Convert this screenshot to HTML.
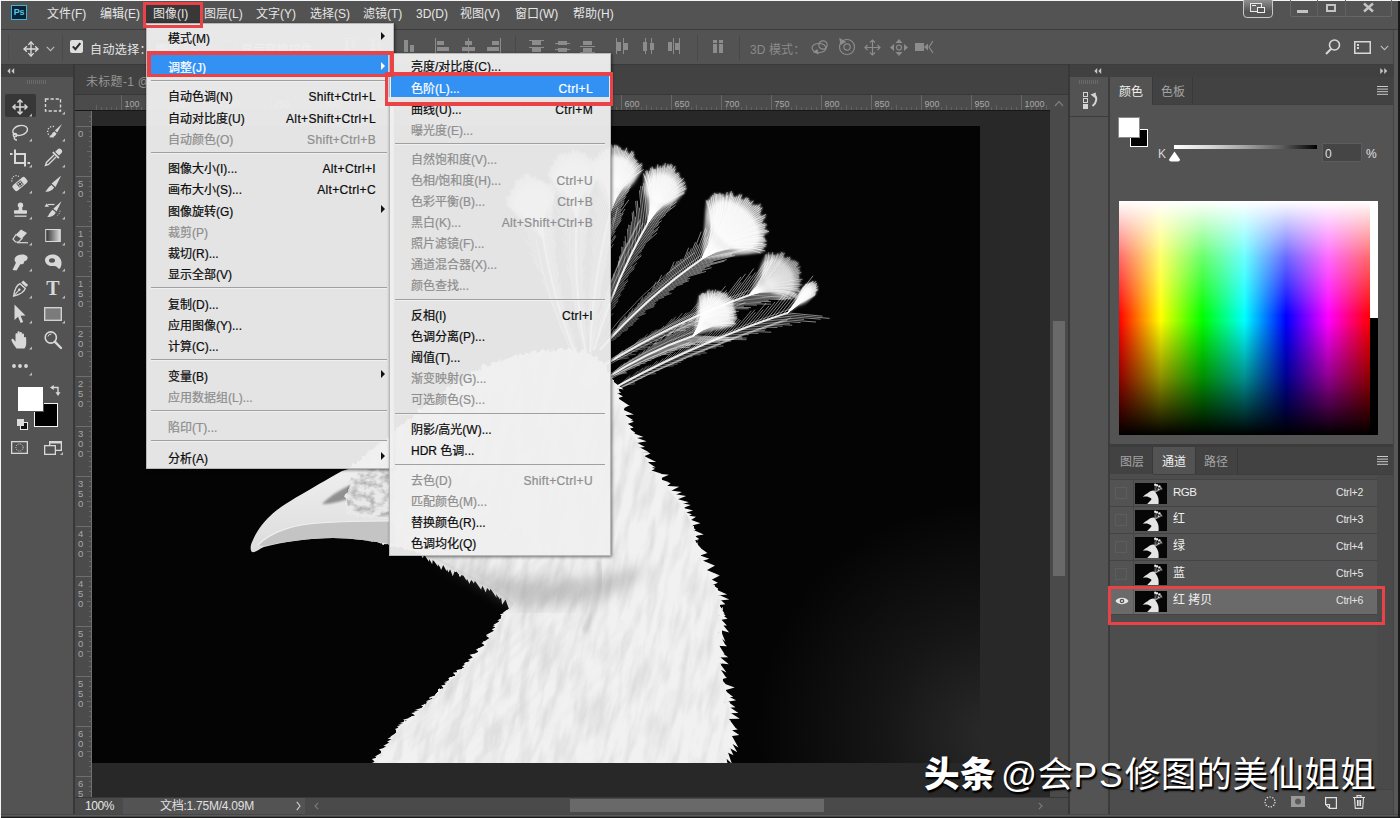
<!DOCTYPE html>
<html lang="zh-CN"><head><meta charset="utf-8"><title>Photoshop</title>
<style>
*{box-sizing:border-box;margin:0;padding:0}
html,body{width:1400px;height:818px;overflow:hidden;background:#535353}
body{position:relative;font-family:"Liberation Sans","Noto Sans CJK SC",sans-serif;font-size:12px;color:#e2e2e2;line-height:1}
.a{position:absolute}
.t{position:absolute;white-space:nowrap;line-height:16px;height:16px}
svg{position:absolute;overflow:visible}
.mi{position:absolute;left:0;right:0;height:21px;line-height:21px;color:#0c0c0c;white-space:nowrap;-webkit-text-stroke:0.22px currentColor}
.mi span.l{position:absolute;left:22px}
.mi span.r{position:absolute;right:14px;letter-spacing:0.35px}
.mi.d{color:#8e8e8e}
.mi.h{color:#fff}
.sep{position:absolute;height:1px;background:#a0a0a0;box-shadow:0 1px 0 #f0f0f0}
.menu{position:absolute;background:rgba(239,239,239,.953);box-shadow:1px 1px 3px rgba(0,0,0,.55);border:1px solid #b8b8b8}
.arr{position:absolute;width:0;height:0;border-left:4px solid #111;border-top:4px solid transparent;border-bottom:4px solid transparent}
.redbox{position:absolute;border:3px solid #e94247;}
</style></head>
<body>
<div class="a" style="left:0px;top:0px;width:1400px;height:1px;background:#f4f4f4;"></div>
<div class="a" style="left:0px;top:0px;width:1px;height:818px;background:#f4f4f4;"></div>
<div class="a" style="left:1px;top:1px;width:1399px;height:28px;background:#535353;"></div>
<div class="a" style="left:0px;top:29px;width:1400px;height:1px;background:#3c3c3c;"></div>
<div class="a" style="left:11px;top:5px;width:16px;height:15px;background:#0a2233;border:1px solid #3fb4d8;color:#53c8ea;font-size:9px;line-height:12px;text-align:center;font-weight:bold;letter-spacing:-0.3px">Ps</div>
<div class="a" style="left:146px;top:4px;width:55px;height:23px;background:#383838;"></div>
<div class="t" style="left:47px;top:6px;color:#e6e6e6;">文件(F)</div>
<div class="t" style="left:100px;top:6px;color:#e6e6e6;">编辑(E)</div>
<div class="t" style="left:153px;top:6px;color:#e6e6e6;">图像(I)</div>
<div class="t" style="left:204px;top:6px;color:#e6e6e6;">图层(L)</div>
<div class="t" style="left:256px;top:6px;color:#e6e6e6;">文字(Y)</div>
<div class="t" style="left:310px;top:6px;color:#e6e6e6;">选择(S)</div>
<div class="t" style="left:363px;top:6px;color:#e6e6e6;">滤镜(T)</div>
<div class="t" style="left:416px;top:6px;color:#e6e6e6;">3D(D)</div>
<div class="t" style="left:460px;top:6px;color:#e6e6e6;">视图(V)</div>
<div class="t" style="left:515px;top:6px;color:#e6e6e6;">窗口(W)</div>
<div class="t" style="left:573px;top:6px;color:#e6e6e6;">帮助(H)</div>
<div class="a" style="left:1243px;top:-3px;width:30px;height:21px;border:1px solid #c8c8c8;border-radius:4px;background:linear-gradient(#9a9a9a,#555 70%)"></div>
<svg style="left:1250px;top:3px" width="16" height="11" viewBox="0 0 16 11"><rect x="0.5" y="0.5" width="11" height="8" fill="#666" stroke="#e8e8e8"/><rect x="7.5" y="4.5" width="7" height="5" fill="#555" stroke="#f0f0f0"/><rect x="2" y="2" width="4" height="1" fill="#eee"/></svg>
<div class="a" style="left:1290px;top:-2px;width:102px;height:19px;border:1px solid #666;border-radius:2px"></div>
<div class="a" style="left:1317px;top:0px;width:1px;height:17px;background:#606060;"></div>
<div class="a" style="left:1345px;top:0px;width:1px;height:17px;background:#606060;"></div>
<div class="a" style="left:1297px;top:10px;width:11px;height:3px;background:#c4c4c4;"></div>
<div class="a" style="left:1326px;top:4px;width:10px;height:8px;border:2px solid #c4c4c4"></div>
<svg style="left:1363px;top:3px" width="11" height="9" viewBox="0 0 11 9"><path d="M1 0.5 L10 8.5 M10 0.5 L1 8.5" stroke="#c4c4c4" stroke-width="2.4" fill="none"/></svg>
<div class="a" style="left:1px;top:30px;width:1393px;height:34px;background:#535353;"></div>
<div class="a" style="left:0px;top:64px;width:1400px;height:1px;background:#3c3c3c;"></div>
<div class="a" style="left:8px;top:34px;width:1px;height:26px;background:#4c4c4c;"></div>
<svg style="left:23px;top:41px" width="16" height="16" viewBox="-8 -8 16 16"><g stroke="#dcdcdc" stroke-width="1.3" fill="none" stroke-linecap="square"><path d="M0 -6.5V6.5M-6.5 0H6.5"/><path d="M-2.3 -4.6L0 -7L2.3 -4.6M-2.3 4.6L0 7L2.3 4.6M-4.6 -2.3L-7 0L-4.6 2.3M4.6 -2.3L7 0L4.6 2.3"/></g></svg>
<svg style="left:46px;top:46px" width="9" height="6" viewBox="0 0 9 6"><path d="M0.8 0.8L4.5 4.6L8.2 0.8" stroke="#bdbdbd" stroke-width="1.1" fill="none"/></svg>
<div class="a" style="left:62px;top:35px;width:1px;height:26px;background:#4a4a4a;"></div>
<div class="a" style="left:70px;top:40px;width:13px;height:13px;background:#dedede;border-radius:2px"></div>
<svg style="left:71px;top:41px" width="11" height="11" viewBox="0 0 11 11"><path d="M1.8 5.4L4.4 8.2L9.3 2.2" stroke="#2a2a2a" stroke-width="2" fill="none"/></svg>
<div class="t" style="left:90px;top:41.5px;color:#e6e6e6;letter-spacing:0.4px">自动选择：</div>
<div class="a" style="left:150px;top:39px;width:56px;height:20px;background:#454545;border:1px solid #666;border-radius:2px"></div>
<div class="t" style="left:156px;top:41.5px;color:#e0e0e0;">图层</div>
<svg style="left:192px;top:47px" width="9" height="6" viewBox="0 0 9 6"><path d="M0.800 0.800L4.500 4.600L8.200 0.800" stroke="#bdbdbd" stroke-width="1.100" fill="none"/></svg>
<div class="a" style="left:222px;top:41px;width:13px;height:13px;background:#454545;border:1px solid #777;border-radius:2px"></div>
<div class="t" style="left:241px;top:41.5px;color:#e0e0e0;">显示变换控件</div>
<div class="a" style="left:330px;top:35px;width:1px;height:26px;background:#484848;"></div>
<svg style="left:342px;top:38px" width="16" height="16" viewBox="0 0 16 16"><rect x="0" y="0" width="16" height="1" fill="#8c8c8c"/><rect x="3" y="2" width="4" height="12" fill="#8c8c8c"/><rect x="9" y="2" width="4" height="7" fill="#8c8c8c"/></svg>
<svg style="left:368px;top:38px" width="16" height="16" viewBox="0 0 16 16"><rect x="0" y="7" width="16" height="1" fill="#8c8c8c"/><rect x="3" y="1" width="4" height="13" fill="#8c8c8c"/><rect x="9" y="4" width="4" height="8" fill="#8c8c8c"/></svg>
<svg style="left:401px;top:38px" width="16" height="16" viewBox="0 0 16 16"><rect x="3" y="2" width="4" height="12" fill="#8c8c8c"/><rect x="9" y="7" width="4" height="7" fill="#8c8c8c"/><rect x="0" y="15" width="16" height="1" fill="#8c8c8c"/></svg>
<svg style="left:435px;top:38px" width="16" height="16" viewBox="0 0 16 16"><rect x="0" y="0" width="1" height="16" fill="#8c8c8c"/><rect x="2" y="3" width="7" height="4" fill="#8c8c8c"/><rect x="2" y="9" width="12" height="4" fill="#8c8c8c"/></svg>
<svg style="left:461px;top:38px" width="16" height="16" viewBox="0 0 16 16"><rect x="7" y="0" width="1" height="16" fill="#8c8c8c"/><rect x="4" y="3" width="7" height="4" fill="#8c8c8c"/><rect x="1" y="9" width="13" height="4" fill="#8c8c8c"/></svg>
<svg style="left:485px;top:38px" width="16" height="16" viewBox="0 0 16 16"><rect x="15" y="0" width="1" height="16" fill="#8c8c8c"/><rect x="7" y="3" width="7" height="4" fill="#8c8c8c"/><rect x="2" y="9" width="12" height="4" fill="#8c8c8c"/></svg>
<div class="a" style="left:515px;top:35px;width:1px;height:26px;background:#484848;"></div>
<svg style="left:529px;top:40px" width="15" height="14" viewBox="0 0 15 14"><rect x="0" y="0" width="15" height="1" fill="#8c8c8c"/><rect x="3" y="1" width="9" height="4" fill="#8c8c8c"/><rect x="0" y="7" width="15" height="1" fill="#8c8c8c"/><rect x="3" y="8" width="9" height="4" fill="#8c8c8c"/></svg>
<svg style="left:555px;top:40px" width="15" height="14" viewBox="0 0 15 14"><rect x="0" y="3" width="15" height="1" fill="#8c8c8c"/><rect x="3" y="1" width="9" height="4" fill="#8c8c8c"/><rect x="0" y="9" width="15" height="1" fill="#8c8c8c"/><rect x="3" y="8" width="9" height="4" fill="#8c8c8c"/></svg>
<svg style="left:580px;top:40px" width="15" height="14" viewBox="0 0 15 14"><rect x="0" y="6" width="15" height="1" fill="#8c8c8c"/><rect x="3" y="1" width="9" height="4" fill="#8c8c8c"/><rect x="0" y="12" width="15" height="1" fill="#8c8c8c"/><rect x="3" y="8" width="9" height="4" fill="#8c8c8c"/></svg>
<svg style="left:616px;top:38px" width="14" height="16" viewBox="0 0 14 16"><rect x="0" y="0" width="1" height="16" fill="#8c8c8c"/><rect x="1" y="4" width="4" height="9" fill="#8c8c8c"/><rect x="7" y="0" width="1" height="16" fill="#8c8c8c"/><rect x="8" y="5" width="4" height="7" fill="#8c8c8c"/></svg>
<svg style="left:642px;top:38px" width="14" height="16" viewBox="0 0 14 16"><rect x="3" y="0" width="1" height="16" fill="#8c8c8c"/><rect x="1" y="4" width="4" height="9" fill="#8c8c8c"/><rect x="9" y="0" width="1" height="16" fill="#8c8c8c"/><rect x="8" y="5" width="4" height="7" fill="#8c8c8c"/></svg>
<svg style="left:667px;top:38px" width="14" height="16" viewBox="0 0 14 16"><rect x="6" y="0" width="1" height="16" fill="#8c8c8c"/><rect x="1" y="4" width="4" height="9" fill="#8c8c8c"/><rect x="12" y="0" width="1" height="16" fill="#8c8c8c"/><rect x="8" y="5" width="4" height="7" fill="#8c8c8c"/></svg>
<div class="a" style="left:697px;top:35px;width:1px;height:26px;background:#484848;"></div>
<svg style="left:712px;top:40px" width="13" height="14" viewBox="0 0 13 14"><rect x="1" y="0" width="4" height="3" fill="#8c8c8c"/><rect x="7" y="0" width="4" height="3" fill="#8c8c8c"/><rect x="1" y="4" width="4" height="9" fill="#8c8c8c"/><rect x="7" y="4" width="4" height="9" fill="#8c8c8c"/></svg>
<div class="a" style="left:739px;top:35px;width:1px;height:26px;background:#484848;"></div>
<div class="t" style="left:750px;top:41.5px;color:#8a8a8a;letter-spacing:0.1px">3D 模式：</div>
<svg style="left:811px;top:39px" width="20" height="16" viewBox="0 0 20 16"><g stroke="#8c8c8c" stroke-width="1.2" fill="none"><ellipse cx="8" cy="9" rx="7" ry="4.5"/><circle cx="12" cy="6" r="4.2"/><path d="M3 13l4 1.5-1-3.5z" fill="#8c8c8c"/></g></svg>
<svg style="left:838px;top:38px" width="18" height="18" viewBox="0 0 18 18"><g stroke="#8c8c8c" stroke-width="1.2" fill="none"><circle cx="9" cy="9" r="7.5"/><circle cx="9" cy="9" r="3.2"/><path d="M2 1l1 5 4-2z" fill="#8c8c8c"/></g></svg>
<svg style="left:864px;top:39px" width="17" height="17" viewBox="0 0 17 17"><g stroke="#8c8c8c" stroke-width="1.2" fill="none"><path d="M8.5 1V16M1 8.5H16"/><path d="M6 3.5L8.5 1L11 3.5M6 13.5L8.5 16L11 13.5M3.5 6L1 8.5L3.5 11M13.5 6L16 8.5L13.5 11"/></g></svg>
<svg style="left:890px;top:39px" width="18" height="17" viewBox="0 0 18 17"><g fill="#8c8c8c"><path d="M9 0l3.5 4h-7zM9 17l3.5-4h-7zM0 8.5l4-3.5v7zM18 8.5l-4-3.5v7z"/></g><circle cx="9" cy="8.500" r="2.500" fill="none" stroke="#8c8c8c" stroke-width="1.200"/></svg>
<svg style="left:915px;top:41px" width="20" height="13" viewBox="0 0 20 13"><rect x="0" y="2" width="9" height="8" fill="#8c8c8c"/><path d="M9 6l4-3.500v7z" fill="#8c8c8c"/><path d="M18 0l-4 6 4 6" stroke="#8c8c8c" stroke-width="1.2" fill="none"/></svg>
<svg style="left:1325px;top:39px" width="16" height="16" viewBox="0 0 16 16"><circle cx="9.5" cy="6" r="5" stroke="#d8d8d8" stroke-width="1.600" fill="none"/><path d="M6 10L1 15" stroke="#d8d8d8" stroke-width="2"/></svg>
<svg style="left:1354px;top:41px" width="17" height="13" viewBox="0 0 17 13"><rect x="0.750" y="0.750" width="15.500" height="11.500" stroke="#d8d8d8" stroke-width="1.500" fill="none"/><rect x="3" y="3" width="2" height="2" fill="#d8d8d8"/><rect x="3" y="6" width="2" height="2" fill="#d8d8d8"/></svg>
<svg style="left:1380px;top:45px" width="9" height="6" viewBox="0 0 9 6"><path d="M0.800 0.800L4.500 4.600L8.200 0.800" stroke="#bdbdbd" stroke-width="1.100" fill="none"/></svg>
<div class="a" style="left:1394px;top:30px;width:4px;height:788px;background:#585858;"></div>
<div class="a" style="left:1393px;top:30px;width:1px;height:788px;background:#444;"></div>
<div class="a" style="left:1px;top:65px;width:72px;height:12px;background:#404040;"></div>
<svg style="left:7px;top:68px" width="8" height="6" viewBox="0 0 8 6"><path d="M3.200 0L0.300 3L3.200 6zM7.200 0L4.300 3L7.200 6z" fill="#c8c8c8"/></svg>
<div class="a" style="left:1px;top:77px;width:72px;height:737px;background:#535353;"></div>
<div class="a" style="left:73px;top:64px;width:2px;height:754px;background:#383838;"></div>
<div class="a" style="left:27px;top:80px;width:1px;height:4px;background:#6a6a6a;"></div>
<div class="a" style="left:29px;top:80px;width:1px;height:4px;background:#6a6a6a;"></div>
<div class="a" style="left:31px;top:80px;width:1px;height:4px;background:#6a6a6a;"></div>
<div class="a" style="left:33px;top:80px;width:1px;height:4px;background:#6a6a6a;"></div>
<div class="a" style="left:35px;top:80px;width:1px;height:4px;background:#6a6a6a;"></div>
<div class="a" style="left:37px;top:80px;width:1px;height:4px;background:#6a6a6a;"></div>
<div class="a" style="left:39px;top:80px;width:1px;height:4px;background:#6a6a6a;"></div>
<div class="a" style="left:41px;top:80px;width:1px;height:4px;background:#6a6a6a;"></div>
<div class="a" style="left:43px;top:80px;width:1px;height:4px;background:#6a6a6a;"></div>
<div class="a" style="left:45px;top:80px;width:1px;height:4px;background:#6a6a6a;"></div>
<div class="a" style="left:75px;top:64px;width:993px;height:31px;background:#424242;"></div>
<div class="a" style="left:75px;top:64px;width:993px;height:1px;background:#3a3a3a;"></div>
<div class="t" style="left:86px;top:73.5px;color:#959595;letter-spacing:0.3px">未标题-1 @</div>
<div class="a" style="left:75px;top:94px;width:993px;height:1px;background:#383838;"></div>
<div class="a" style="left:75px;top:95px;width:975px;height:15px;background:#4b4b4b;"></div>
<div class="a" style="left:75px;top:95px;width:17px;height:702px;background:#4b4b4b;"></div>
<div class="a" style="left:75px;top:110px;width:975px;height:1px;background:#181818;"></div>
<div class="a" style="left:91px;top:111px;width:1px;height:686px;background:#707070;"></div>
<div class="a" style="left:92px;top:111px;width:958px;height:686px;background:#282828;"></div>
<svg style="left:0;top:0" width="1400" height="818" font-family="Liberation Sans, sans-serif"><rect x="121" y="95" width="1" height="15" fill="#686868"/><text x="124.5" y="107" font-size="9" fill="#a8a8a8">100</text><rect x="171" y="95" width="1" height="15" fill="#686868"/><text x="174.5" y="107" font-size="9" fill="#a8a8a8">150</text><rect x="221" y="95" width="1" height="15" fill="#686868"/><text x="224.5" y="107" font-size="9" fill="#a8a8a8">200</text><rect x="271" y="95" width="1" height="15" fill="#686868"/><text x="274.5" y="107" font-size="9" fill="#a8a8a8">250</text><rect x="321" y="95" width="1" height="15" fill="#686868"/><text x="324.5" y="107" font-size="9" fill="#a8a8a8">300</text><rect x="371" y="95" width="1" height="15" fill="#686868"/><text x="374.5" y="107" font-size="9" fill="#a8a8a8">350</text><rect x="421" y="95" width="1" height="15" fill="#686868"/><text x="424.5" y="107" font-size="9" fill="#a8a8a8">400</text><rect x="471" y="95" width="1" height="15" fill="#686868"/><text x="474.5" y="107" font-size="9" fill="#a8a8a8">450</text><rect x="521" y="95" width="1" height="15" fill="#686868"/><text x="524.5" y="107" font-size="9" fill="#a8a8a8">500</text><rect x="571" y="95" width="1" height="15" fill="#686868"/><text x="574.5" y="107" font-size="9" fill="#a8a8a8">550</text><rect x="621" y="95" width="1" height="15" fill="#686868"/><text x="624.5" y="107" font-size="9" fill="#a8a8a8">600</text><rect x="671" y="95" width="1" height="15" fill="#686868"/><text x="674.5" y="107" font-size="9" fill="#a8a8a8">650</text><rect x="721" y="95" width="1" height="15" fill="#686868"/><text x="724.5" y="107" font-size="9" fill="#a8a8a8">700</text><rect x="771" y="95" width="1" height="15" fill="#686868"/><text x="774.5" y="107" font-size="9" fill="#a8a8a8">750</text><rect x="821" y="95" width="1" height="15" fill="#686868"/><text x="824.5" y="107" font-size="9" fill="#a8a8a8">800</text><rect x="871" y="95" width="1" height="15" fill="#686868"/><text x="874.5" y="107" font-size="9" fill="#a8a8a8">850</text><rect x="921" y="95" width="1" height="15" fill="#686868"/><text x="924.5" y="107" font-size="9" fill="#a8a8a8">900</text><rect x="971" y="95" width="1" height="15" fill="#686868"/><text x="974.5" y="107" font-size="9" fill="#a8a8a8">950</text><rect x="1021" y="95" width="1" height="15" fill="#686868"/><text x="1024.5" y="107" font-size="9" fill="#a8a8a8">1000</text><rect x="96" y="105" width="1" height="5" fill="#626262"/><rect x="101" y="107" width="1" height="3" fill="#626262"/><rect x="106" y="107" width="1" height="3" fill="#626262"/><rect x="111" y="107" width="1" height="3" fill="#626262"/><rect x="116" y="107" width="1" height="3" fill="#626262"/><rect x="126" y="107" width="1" height="3" fill="#626262"/><rect x="131" y="107" width="1" height="3" fill="#626262"/><rect x="136" y="107" width="1" height="3" fill="#626262"/><rect x="141" y="107" width="1" height="3" fill="#626262"/><rect x="146" y="105" width="1" height="5" fill="#626262"/><rect x="151" y="107" width="1" height="3" fill="#626262"/><rect x="156" y="107" width="1" height="3" fill="#626262"/><rect x="161" y="107" width="1" height="3" fill="#626262"/><rect x="166" y="107" width="1" height="3" fill="#626262"/><rect x="176" y="107" width="1" height="3" fill="#626262"/><rect x="181" y="107" width="1" height="3" fill="#626262"/><rect x="186" y="107" width="1" height="3" fill="#626262"/><rect x="191" y="107" width="1" height="3" fill="#626262"/><rect x="196" y="105" width="1" height="5" fill="#626262"/><rect x="201" y="107" width="1" height="3" fill="#626262"/><rect x="206" y="107" width="1" height="3" fill="#626262"/><rect x="211" y="107" width="1" height="3" fill="#626262"/><rect x="216" y="107" width="1" height="3" fill="#626262"/><rect x="226" y="107" width="1" height="3" fill="#626262"/><rect x="231" y="107" width="1" height="3" fill="#626262"/><rect x="236" y="107" width="1" height="3" fill="#626262"/><rect x="241" y="107" width="1" height="3" fill="#626262"/><rect x="246" y="105" width="1" height="5" fill="#626262"/><rect x="251" y="107" width="1" height="3" fill="#626262"/><rect x="256" y="107" width="1" height="3" fill="#626262"/><rect x="261" y="107" width="1" height="3" fill="#626262"/><rect x="266" y="107" width="1" height="3" fill="#626262"/><rect x="276" y="107" width="1" height="3" fill="#626262"/><rect x="281" y="107" width="1" height="3" fill="#626262"/><rect x="286" y="107" width="1" height="3" fill="#626262"/><rect x="291" y="107" width="1" height="3" fill="#626262"/><rect x="296" y="105" width="1" height="5" fill="#626262"/><rect x="301" y="107" width="1" height="3" fill="#626262"/><rect x="306" y="107" width="1" height="3" fill="#626262"/><rect x="311" y="107" width="1" height="3" fill="#626262"/><rect x="316" y="107" width="1" height="3" fill="#626262"/><rect x="326" y="107" width="1" height="3" fill="#626262"/><rect x="331" y="107" width="1" height="3" fill="#626262"/><rect x="336" y="107" width="1" height="3" fill="#626262"/><rect x="341" y="107" width="1" height="3" fill="#626262"/><rect x="346" y="105" width="1" height="5" fill="#626262"/><rect x="351" y="107" width="1" height="3" fill="#626262"/><rect x="356" y="107" width="1" height="3" fill="#626262"/><rect x="361" y="107" width="1" height="3" fill="#626262"/><rect x="366" y="107" width="1" height="3" fill="#626262"/><rect x="376" y="107" width="1" height="3" fill="#626262"/><rect x="381" y="107" width="1" height="3" fill="#626262"/><rect x="386" y="107" width="1" height="3" fill="#626262"/><rect x="391" y="107" width="1" height="3" fill="#626262"/><rect x="396" y="105" width="1" height="5" fill="#626262"/><rect x="401" y="107" width="1" height="3" fill="#626262"/><rect x="406" y="107" width="1" height="3" fill="#626262"/><rect x="411" y="107" width="1" height="3" fill="#626262"/><rect x="416" y="107" width="1" height="3" fill="#626262"/><rect x="426" y="107" width="1" height="3" fill="#626262"/><rect x="431" y="107" width="1" height="3" fill="#626262"/><rect x="436" y="107" width="1" height="3" fill="#626262"/><rect x="441" y="107" width="1" height="3" fill="#626262"/><rect x="446" y="105" width="1" height="5" fill="#626262"/><rect x="451" y="107" width="1" height="3" fill="#626262"/><rect x="456" y="107" width="1" height="3" fill="#626262"/><rect x="461" y="107" width="1" height="3" fill="#626262"/><rect x="466" y="107" width="1" height="3" fill="#626262"/><rect x="476" y="107" width="1" height="3" fill="#626262"/><rect x="481" y="107" width="1" height="3" fill="#626262"/><rect x="486" y="107" width="1" height="3" fill="#626262"/><rect x="491" y="107" width="1" height="3" fill="#626262"/><rect x="496" y="105" width="1" height="5" fill="#626262"/><rect x="501" y="107" width="1" height="3" fill="#626262"/><rect x="506" y="107" width="1" height="3" fill="#626262"/><rect x="511" y="107" width="1" height="3" fill="#626262"/><rect x="516" y="107" width="1" height="3" fill="#626262"/><rect x="526" y="107" width="1" height="3" fill="#626262"/><rect x="531" y="107" width="1" height="3" fill="#626262"/><rect x="536" y="107" width="1" height="3" fill="#626262"/><rect x="541" y="107" width="1" height="3" fill="#626262"/><rect x="546" y="105" width="1" height="5" fill="#626262"/><rect x="551" y="107" width="1" height="3" fill="#626262"/><rect x="556" y="107" width="1" height="3" fill="#626262"/><rect x="561" y="107" width="1" height="3" fill="#626262"/><rect x="566" y="107" width="1" height="3" fill="#626262"/><rect x="576" y="107" width="1" height="3" fill="#626262"/><rect x="581" y="107" width="1" height="3" fill="#626262"/><rect x="586" y="107" width="1" height="3" fill="#626262"/><rect x="591" y="107" width="1" height="3" fill="#626262"/><rect x="596" y="105" width="1" height="5" fill="#626262"/><rect x="601" y="107" width="1" height="3" fill="#626262"/><rect x="606" y="107" width="1" height="3" fill="#626262"/><rect x="611" y="107" width="1" height="3" fill="#626262"/><rect x="616" y="107" width="1" height="3" fill="#626262"/><rect x="626" y="107" width="1" height="3" fill="#626262"/><rect x="631" y="107" width="1" height="3" fill="#626262"/><rect x="636" y="107" width="1" height="3" fill="#626262"/><rect x="641" y="107" width="1" height="3" fill="#626262"/><rect x="646" y="105" width="1" height="5" fill="#626262"/><rect x="651" y="107" width="1" height="3" fill="#626262"/><rect x="656" y="107" width="1" height="3" fill="#626262"/><rect x="661" y="107" width="1" height="3" fill="#626262"/><rect x="666" y="107" width="1" height="3" fill="#626262"/><rect x="676" y="107" width="1" height="3" fill="#626262"/><rect x="681" y="107" width="1" height="3" fill="#626262"/><rect x="686" y="107" width="1" height="3" fill="#626262"/><rect x="691" y="107" width="1" height="3" fill="#626262"/><rect x="696" y="105" width="1" height="5" fill="#626262"/><rect x="701" y="107" width="1" height="3" fill="#626262"/><rect x="706" y="107" width="1" height="3" fill="#626262"/><rect x="711" y="107" width="1" height="3" fill="#626262"/><rect x="716" y="107" width="1" height="3" fill="#626262"/><rect x="726" y="107" width="1" height="3" fill="#626262"/><rect x="731" y="107" width="1" height="3" fill="#626262"/><rect x="736" y="107" width="1" height="3" fill="#626262"/><rect x="741" y="107" width="1" height="3" fill="#626262"/><rect x="746" y="105" width="1" height="5" fill="#626262"/><rect x="751" y="107" width="1" height="3" fill="#626262"/><rect x="756" y="107" width="1" height="3" fill="#626262"/><rect x="761" y="107" width="1" height="3" fill="#626262"/><rect x="766" y="107" width="1" height="3" fill="#626262"/><rect x="776" y="107" width="1" height="3" fill="#626262"/><rect x="781" y="107" width="1" height="3" fill="#626262"/><rect x="786" y="107" width="1" height="3" fill="#626262"/><rect x="791" y="107" width="1" height="3" fill="#626262"/><rect x="796" y="105" width="1" height="5" fill="#626262"/><rect x="801" y="107" width="1" height="3" fill="#626262"/><rect x="806" y="107" width="1" height="3" fill="#626262"/><rect x="811" y="107" width="1" height="3" fill="#626262"/><rect x="816" y="107" width="1" height="3" fill="#626262"/><rect x="826" y="107" width="1" height="3" fill="#626262"/><rect x="831" y="107" width="1" height="3" fill="#626262"/><rect x="836" y="107" width="1" height="3" fill="#626262"/><rect x="841" y="107" width="1" height="3" fill="#626262"/><rect x="846" y="105" width="1" height="5" fill="#626262"/><rect x="851" y="107" width="1" height="3" fill="#626262"/><rect x="856" y="107" width="1" height="3" fill="#626262"/><rect x="861" y="107" width="1" height="3" fill="#626262"/><rect x="866" y="107" width="1" height="3" fill="#626262"/><rect x="876" y="107" width="1" height="3" fill="#626262"/><rect x="881" y="107" width="1" height="3" fill="#626262"/><rect x="886" y="107" width="1" height="3" fill="#626262"/><rect x="891" y="107" width="1" height="3" fill="#626262"/><rect x="896" y="105" width="1" height="5" fill="#626262"/><rect x="901" y="107" width="1" height="3" fill="#626262"/><rect x="906" y="107" width="1" height="3" fill="#626262"/><rect x="911" y="107" width="1" height="3" fill="#626262"/><rect x="916" y="107" width="1" height="3" fill="#626262"/><rect x="926" y="107" width="1" height="3" fill="#626262"/><rect x="931" y="107" width="1" height="3" fill="#626262"/><rect x="936" y="107" width="1" height="3" fill="#626262"/><rect x="941" y="107" width="1" height="3" fill="#626262"/><rect x="946" y="105" width="1" height="5" fill="#626262"/><rect x="951" y="107" width="1" height="3" fill="#626262"/><rect x="956" y="107" width="1" height="3" fill="#626262"/><rect x="961" y="107" width="1" height="3" fill="#626262"/><rect x="966" y="107" width="1" height="3" fill="#626262"/><rect x="976" y="107" width="1" height="3" fill="#626262"/><rect x="981" y="107" width="1" height="3" fill="#626262"/><rect x="986" y="107" width="1" height="3" fill="#626262"/><rect x="991" y="107" width="1" height="3" fill="#626262"/><rect x="996" y="105" width="1" height="5" fill="#626262"/><rect x="1001" y="107" width="1" height="3" fill="#626262"/><rect x="1006" y="107" width="1" height="3" fill="#626262"/><rect x="1011" y="107" width="1" height="3" fill="#626262"/><rect x="1016" y="107" width="1" height="3" fill="#626262"/><rect x="1026" y="107" width="1" height="3" fill="#626262"/><rect x="1031" y="107" width="1" height="3" fill="#626262"/><rect x="1036" y="107" width="1" height="3" fill="#626262"/><rect x="1041" y="107" width="1" height="3" fill="#626262"/><rect x="1046" y="105" width="1" height="5" fill="#626262"/><rect x="76" y="126" width="16" height="1" fill="#6e6e6e"/><text x="78" y="137" font-size="9.5" fill="#a8a8a8">0</text><rect x="76" y="176" width="16" height="1" fill="#6e6e6e"/><text x="78" y="187" font-size="9.5" fill="#a8a8a8">5</text><text x="78" y="197" font-size="9.5" fill="#a8a8a8">0</text><rect x="76" y="226" width="16" height="1" fill="#6e6e6e"/><text x="78" y="237" font-size="9.5" fill="#a8a8a8">1</text><text x="78" y="247" font-size="9.5" fill="#a8a8a8">0</text><text x="78" y="257" font-size="9.5" fill="#a8a8a8">0</text><rect x="76" y="276" width="16" height="1" fill="#6e6e6e"/><text x="78" y="287" font-size="9.5" fill="#a8a8a8">1</text><text x="78" y="297" font-size="9.5" fill="#a8a8a8">5</text><text x="78" y="307" font-size="9.5" fill="#a8a8a8">0</text><rect x="76" y="326" width="16" height="1" fill="#6e6e6e"/><text x="78" y="337" font-size="9.5" fill="#a8a8a8">2</text><text x="78" y="347" font-size="9.5" fill="#a8a8a8">0</text><text x="78" y="357" font-size="9.5" fill="#a8a8a8">0</text><rect x="76" y="376" width="16" height="1" fill="#6e6e6e"/><text x="78" y="387" font-size="9.5" fill="#a8a8a8">2</text><text x="78" y="397" font-size="9.5" fill="#a8a8a8">5</text><text x="78" y="407" font-size="9.5" fill="#a8a8a8">0</text><rect x="76" y="426" width="16" height="1" fill="#6e6e6e"/><text x="78" y="437" font-size="9.5" fill="#a8a8a8">3</text><text x="78" y="447" font-size="9.5" fill="#a8a8a8">0</text><text x="78" y="457" font-size="9.5" fill="#a8a8a8">0</text><rect x="76" y="476" width="16" height="1" fill="#6e6e6e"/><text x="78" y="487" font-size="9.5" fill="#a8a8a8">3</text><text x="78" y="497" font-size="9.5" fill="#a8a8a8">5</text><text x="78" y="507" font-size="9.5" fill="#a8a8a8">0</text><rect x="76" y="526" width="16" height="1" fill="#6e6e6e"/><text x="78" y="537" font-size="9.5" fill="#a8a8a8">4</text><text x="78" y="547" font-size="9.5" fill="#a8a8a8">0</text><text x="78" y="557" font-size="9.5" fill="#a8a8a8">0</text><rect x="76" y="576" width="16" height="1" fill="#6e6e6e"/><text x="78" y="587" font-size="9.5" fill="#a8a8a8">4</text><text x="78" y="597" font-size="9.5" fill="#a8a8a8">5</text><text x="78" y="607" font-size="9.5" fill="#a8a8a8">0</text><rect x="76" y="626" width="16" height="1" fill="#6e6e6e"/><text x="78" y="637" font-size="9.5" fill="#a8a8a8">5</text><text x="78" y="647" font-size="9.5" fill="#a8a8a8">0</text><text x="78" y="657" font-size="9.5" fill="#a8a8a8">0</text><rect x="76" y="676" width="16" height="1" fill="#6e6e6e"/><text x="78" y="687" font-size="9.5" fill="#a8a8a8">5</text><text x="78" y="697" font-size="9.5" fill="#a8a8a8">5</text><text x="78" y="707" font-size="9.5" fill="#a8a8a8">0</text><rect x="76" y="726" width="16" height="1" fill="#6e6e6e"/><text x="78" y="737" font-size="9.5" fill="#a8a8a8">6</text><text x="78" y="747" font-size="9.5" fill="#a8a8a8">0</text><text x="78" y="757" font-size="9.5" fill="#a8a8a8">0</text><rect x="76" y="776" width="16" height="1" fill="#6e6e6e"/><text x="78" y="787" font-size="9.5" fill="#a8a8a8">6</text><text x="78" y="797" font-size="9.5" fill="#a8a8a8">5</text><rect x="89" y="116" width="3" height="1" fill="#6a6a6a"/><rect x="89" y="121" width="3" height="1" fill="#6a6a6a"/><rect x="89" y="131" width="3" height="1" fill="#6a6a6a"/><rect x="89" y="136" width="3" height="1" fill="#6a6a6a"/><rect x="89" y="141" width="3" height="1" fill="#6a6a6a"/><rect x="89" y="146" width="3" height="1" fill="#6a6a6a"/><rect x="87" y="151" width="5" height="1" fill="#6a6a6a"/><rect x="89" y="156" width="3" height="1" fill="#6a6a6a"/><rect x="89" y="161" width="3" height="1" fill="#6a6a6a"/><rect x="89" y="166" width="3" height="1" fill="#6a6a6a"/><rect x="89" y="171" width="3" height="1" fill="#6a6a6a"/><rect x="89" y="181" width="3" height="1" fill="#6a6a6a"/><rect x="89" y="186" width="3" height="1" fill="#6a6a6a"/><rect x="89" y="191" width="3" height="1" fill="#6a6a6a"/><rect x="89" y="196" width="3" height="1" fill="#6a6a6a"/><rect x="87" y="201" width="5" height="1" fill="#6a6a6a"/><rect x="89" y="206" width="3" height="1" fill="#6a6a6a"/><rect x="89" y="211" width="3" height="1" fill="#6a6a6a"/><rect x="89" y="216" width="3" height="1" fill="#6a6a6a"/><rect x="89" y="221" width="3" height="1" fill="#6a6a6a"/><rect x="89" y="231" width="3" height="1" fill="#6a6a6a"/><rect x="89" y="236" width="3" height="1" fill="#6a6a6a"/><rect x="89" y="241" width="3" height="1" fill="#6a6a6a"/><rect x="89" y="246" width="3" height="1" fill="#6a6a6a"/><rect x="87" y="251" width="5" height="1" fill="#6a6a6a"/><rect x="89" y="256" width="3" height="1" fill="#6a6a6a"/><rect x="89" y="261" width="3" height="1" fill="#6a6a6a"/><rect x="89" y="266" width="3" height="1" fill="#6a6a6a"/><rect x="89" y="271" width="3" height="1" fill="#6a6a6a"/><rect x="89" y="281" width="3" height="1" fill="#6a6a6a"/><rect x="89" y="286" width="3" height="1" fill="#6a6a6a"/><rect x="89" y="291" width="3" height="1" fill="#6a6a6a"/><rect x="89" y="296" width="3" height="1" fill="#6a6a6a"/><rect x="87" y="301" width="5" height="1" fill="#6a6a6a"/><rect x="89" y="306" width="3" height="1" fill="#6a6a6a"/><rect x="89" y="311" width="3" height="1" fill="#6a6a6a"/><rect x="89" y="316" width="3" height="1" fill="#6a6a6a"/><rect x="89" y="321" width="3" height="1" fill="#6a6a6a"/><rect x="89" y="331" width="3" height="1" fill="#6a6a6a"/><rect x="89" y="336" width="3" height="1" fill="#6a6a6a"/><rect x="89" y="341" width="3" height="1" fill="#6a6a6a"/><rect x="89" y="346" width="3" height="1" fill="#6a6a6a"/><rect x="87" y="351" width="5" height="1" fill="#6a6a6a"/><rect x="89" y="356" width="3" height="1" fill="#6a6a6a"/><rect x="89" y="361" width="3" height="1" fill="#6a6a6a"/><rect x="89" y="366" width="3" height="1" fill="#6a6a6a"/><rect x="89" y="371" width="3" height="1" fill="#6a6a6a"/><rect x="89" y="381" width="3" height="1" fill="#6a6a6a"/><rect x="89" y="386" width="3" height="1" fill="#6a6a6a"/><rect x="89" y="391" width="3" height="1" fill="#6a6a6a"/><rect x="89" y="396" width="3" height="1" fill="#6a6a6a"/><rect x="87" y="401" width="5" height="1" fill="#6a6a6a"/><rect x="89" y="406" width="3" height="1" fill="#6a6a6a"/><rect x="89" y="411" width="3" height="1" fill="#6a6a6a"/><rect x="89" y="416" width="3" height="1" fill="#6a6a6a"/><rect x="89" y="421" width="3" height="1" fill="#6a6a6a"/><rect x="89" y="431" width="3" height="1" fill="#6a6a6a"/><rect x="89" y="436" width="3" height="1" fill="#6a6a6a"/><rect x="89" y="441" width="3" height="1" fill="#6a6a6a"/><rect x="89" y="446" width="3" height="1" fill="#6a6a6a"/><rect x="87" y="451" width="5" height="1" fill="#6a6a6a"/><rect x="89" y="456" width="3" height="1" fill="#6a6a6a"/><rect x="89" y="461" width="3" height="1" fill="#6a6a6a"/><rect x="89" y="466" width="3" height="1" fill="#6a6a6a"/><rect x="89" y="471" width="3" height="1" fill="#6a6a6a"/><rect x="89" y="481" width="3" height="1" fill="#6a6a6a"/><rect x="89" y="486" width="3" height="1" fill="#6a6a6a"/><rect x="89" y="491" width="3" height="1" fill="#6a6a6a"/><rect x="89" y="496" width="3" height="1" fill="#6a6a6a"/><rect x="87" y="501" width="5" height="1" fill="#6a6a6a"/><rect x="89" y="506" width="3" height="1" fill="#6a6a6a"/><rect x="89" y="511" width="3" height="1" fill="#6a6a6a"/><rect x="89" y="516" width="3" height="1" fill="#6a6a6a"/><rect x="89" y="521" width="3" height="1" fill="#6a6a6a"/><rect x="89" y="531" width="3" height="1" fill="#6a6a6a"/><rect x="89" y="536" width="3" height="1" fill="#6a6a6a"/><rect x="89" y="541" width="3" height="1" fill="#6a6a6a"/><rect x="89" y="546" width="3" height="1" fill="#6a6a6a"/><rect x="87" y="551" width="5" height="1" fill="#6a6a6a"/><rect x="89" y="556" width="3" height="1" fill="#6a6a6a"/><rect x="89" y="561" width="3" height="1" fill="#6a6a6a"/><rect x="89" y="566" width="3" height="1" fill="#6a6a6a"/><rect x="89" y="571" width="3" height="1" fill="#6a6a6a"/><rect x="89" y="581" width="3" height="1" fill="#6a6a6a"/><rect x="89" y="586" width="3" height="1" fill="#6a6a6a"/><rect x="89" y="591" width="3" height="1" fill="#6a6a6a"/><rect x="89" y="596" width="3" height="1" fill="#6a6a6a"/><rect x="87" y="601" width="5" height="1" fill="#6a6a6a"/><rect x="89" y="606" width="3" height="1" fill="#6a6a6a"/><rect x="89" y="611" width="3" height="1" fill="#6a6a6a"/><rect x="89" y="616" width="3" height="1" fill="#6a6a6a"/><rect x="89" y="621" width="3" height="1" fill="#6a6a6a"/><rect x="89" y="631" width="3" height="1" fill="#6a6a6a"/><rect x="89" y="636" width="3" height="1" fill="#6a6a6a"/><rect x="89" y="641" width="3" height="1" fill="#6a6a6a"/><rect x="89" y="646" width="3" height="1" fill="#6a6a6a"/><rect x="87" y="651" width="5" height="1" fill="#6a6a6a"/><rect x="89" y="656" width="3" height="1" fill="#6a6a6a"/><rect x="89" y="661" width="3" height="1" fill="#6a6a6a"/><rect x="89" y="666" width="3" height="1" fill="#6a6a6a"/><rect x="89" y="671" width="3" height="1" fill="#6a6a6a"/><rect x="89" y="681" width="3" height="1" fill="#6a6a6a"/><rect x="89" y="686" width="3" height="1" fill="#6a6a6a"/><rect x="89" y="691" width="3" height="1" fill="#6a6a6a"/><rect x="89" y="696" width="3" height="1" fill="#6a6a6a"/><rect x="87" y="701" width="5" height="1" fill="#6a6a6a"/><rect x="89" y="706" width="3" height="1" fill="#6a6a6a"/><rect x="89" y="711" width="3" height="1" fill="#6a6a6a"/><rect x="89" y="716" width="3" height="1" fill="#6a6a6a"/><rect x="89" y="721" width="3" height="1" fill="#6a6a6a"/><rect x="89" y="731" width="3" height="1" fill="#6a6a6a"/><rect x="89" y="736" width="3" height="1" fill="#6a6a6a"/><rect x="89" y="741" width="3" height="1" fill="#6a6a6a"/><rect x="89" y="746" width="3" height="1" fill="#6a6a6a"/><rect x="87" y="751" width="5" height="1" fill="#6a6a6a"/><rect x="89" y="756" width="3" height="1" fill="#6a6a6a"/><rect x="89" y="761" width="3" height="1" fill="#6a6a6a"/><rect x="89" y="766" width="3" height="1" fill="#6a6a6a"/><rect x="89" y="771" width="3" height="1" fill="#6a6a6a"/><rect x="89" y="781" width="3" height="1" fill="#6a6a6a"/><rect x="89" y="786" width="3" height="1" fill="#6a6a6a"/><rect x="89" y="791" width="3" height="1" fill="#6a6a6a"/></svg>
<div class="a" style="left:75px;top:95px;width:17px;height:15px;background:#4b4b4b;"></div>
<div class="a" style="left:1050px;top:95px;width:18px;height:702px;background:#4a4a4a;"></div>
<svg style="left:1054px;top:100px" width="10" height="7" viewBox="0 0 10 7"><path d="M1 6L5 1.500L9 6" stroke="#7c7c7c" stroke-width="1.200" fill="none"/></svg>
<div class="a" style="left:1053px;top:321px;width:12px;height:255px;background:#696969;"></div>
<div class="a" style="left:1068px;top:64px;width:2px;height:754px;background:#383838;"></div>
<div class="a" style="left:75px;top:797px;width:993px;height:1px;background:#383838;"></div>
<div class="a" style="left:75px;top:798px;width:975px;height:16px;background:#535353;"></div>
<div class="a" style="left:75px;top:798px;width:48px;height:16px;background:#4a4a4a;"></div>
<div class="t" style="left:85px;top:798px;color:#e6e6e6;letter-spacing:-0.4px">100%</div>
<div class="t" style="left:160px;top:798px;color:#e0e0e0;letter-spacing:-0.25px">文档:1.75M/4.09M</div>
<svg style="left:296px;top:801px" width="5" height="10" viewBox="0 0 5 10"><path d="M0.800 0.800L4 5L0.800 9.200" stroke="#cfcfcf" stroke-width="1.100" fill="none"/></svg>
<div class="a" style="left:305px;top:798px;width:745px;height:16px;background:#4a4a4a;"></div>
<svg style="left:314px;top:802px" width="5" height="8" viewBox="0 0 5 8"><path d="M4.200 0.800L1 4L4.200 7.200" stroke="#7c7c7c" stroke-width="1.100" fill="none"/></svg>
<svg style="left:1038px;top:802px" width="5" height="8" viewBox="0 0 5 8"><path d="M0.800 0.800L4 4L0.800 7.200" stroke="#7c7c7c" stroke-width="1.100" fill="none"/></svg>
<div class="a" style="left:570px;top:799px;width:254px;height:13px;background:#696969;"></div>
<div class="a" style="left:1050px;top:798px;width:18px;height:16px;background:#4a4a4a;"></div>
<div class="a" style="left:0px;top:814px;width:1400px;height:1px;background:#474747;"></div>
<div class="a" style="left:0px;top:815px;width:1400px;height:1px;background:#5a5a5a;"></div>
<div class="a" style="left:0px;top:816px;width:1400px;height:1px;background:#444;"></div>
<div class="a" style="left:0px;top:817px;width:1400px;height:1px;background:#1a1a1a;"></div>
<div class="a" style="left:1398px;top:1px;width:2px;height:817px;background:#1a1a1a;"></div>
<div class="a" style="left:0px;top:0px;width:1px;height:818px;background:#f4f4f4;"></div>
<svg style="left:92px;top:126px;overflow:hidden" width="888" height="637" viewBox="92 126 888 637"><defs>
<radialGradient id="bgG" cx="990" cy="735" r="235" gradientUnits="userSpaceOnUse"><stop offset="0" stop-color="#2a2a2a"/><stop offset="0.45" stop-color="#161616"/><stop offset="1" stop-color="#040404"/></radialGradient>
<filter id="fuzz" x="-5%" y="-5%" width="110%" height="110%"><feTurbulence type="fractalNoise" baseFrequency="0.22 0.16" numOctaves="2" seed="3" result="n"/><feDisplacementMap in="SourceGraphic" in2="n" scale="9" xChannelSelector="R" yChannelSelector="G"/><feGaussianBlur stdDeviation="0.6"/></filter>
<filter id="tex" x="0" y="0" width="100%" height="100%"><feTurbulence type="fractalNoise" baseFrequency="0.12 0.16" numOctaves="3" seed="11" result="n"/><feColorMatrix in="n" type="matrix" values="0 0 0 0 0  0 0 0 0 0  0 0 0 0 0  1.6 0 0 0 -0.62" result="a"/><feComposite in="a" in2="SourceGraphic" operator="in"/></filter>
<filter id="tex2" x="0" y="0" width="100%" height="100%"><feTurbulence type="fractalNoise" baseFrequency="0.11 0.022" numOctaves="3" seed="5" result="n"/><feColorMatrix in="n" type="matrix" values="0 0 0 0 0.45  0 0 0 0 0.45  0 0 0 0 0.45  2.4 0 0 0 -1.0" result="m"/><feComposite in="m" in2="SourceGraphic" operator="in"/></filter>
<linearGradient id="fadeG" x1="0" y1="0" x2="1" y2="0"><stop offset="0" stop-color="#fff" stop-opacity="1"/><stop offset="0.45" stop-color="#fff" stop-opacity="1"/><stop offset="1" stop-color="#fff" stop-opacity="0"/></linearGradient>
<clipPath id="bodyClip"><path d="M300,520 C330,478 380,445 430,402 C470,368 510,352 560,349 C585,348 606,356 614,380 L620,405 L632,433 L652,470 C672,492 684,508 690,521 C696,535 698,546 700,556 L712,580 L720,600 L722,625 L719,652 L723,680 L729,708 L732,737 L724,770 L368,770 C382,752 392,738 400,727 L428,703 L456,675 L484,644 L511,605 L498,593 L470,579 L450,568 C440,560 420,552 400,548 L380,543 Z"/></clipPath>
<filter id="b1"><feGaussianBlur stdDeviation="1"/></filter>
<filter id="b2"><feGaussianBlur stdDeviation="2.2"/></filter>
<filter id="b6"><feGaussianBlur stdDeviation="7"/></filter>
<linearGradient id="beakG" x1="0" y1="0" x2="0" y2="1"><stop offset="0" stop-color="#f2f2f2"/><stop offset="1" stop-color="#dcdcdc"/></linearGradient>
</defs><rect x="92" y="126" width="888" height="637" fill="#040404"/><rect x="92" y="126" width="888" height="637" fill="url(#bgG)"/><g><path d="M578.0,360.0 Q553.3,301.8 543.3,239.4" stroke="#fff" stroke-opacity="0.9" stroke-width="2.0" fill="none"/><path d="M578.9,357.4 Q555.5,295.4 545.7,232.6" stroke="#fff" stroke-opacity="0.45" stroke-width="0.9" fill="none"/><path d="M578.2,359.2 Q553.8,299.8 543.8,237.3" stroke="#fff" stroke-opacity="0.45" stroke-width="0.9" fill="none"/><path d="M575.3,360.0 Q546.6,301.9 536.2,239.5" stroke="#fff" stroke-opacity="0.45" stroke-width="0.9" fill="none"/><path d="M575.2,359.6 Q546.3,300.8 535.9,238.4" stroke="#fff" stroke-opacity="0.45" stroke-width="0.9" fill="none"/><path d="M574.7,352.0 l-5.4,-8.1" stroke="#fff" stroke-opacity="0.36" stroke-width="0.9"/><path d="M574.7,352.0 l0.3,-9.9" stroke="#fff" stroke-opacity="0.36" stroke-width="0.9"/><path d="M573.6,349.4 l-7.1,-10.5" stroke="#fff" stroke-opacity="0.36" stroke-width="0.9"/><path d="M573.6,349.4 l0.6,-15.8" stroke="#fff" stroke-opacity="0.36" stroke-width="0.9"/><path d="M572.6,346.7 l-5.8,-8.5" stroke="#fff" stroke-opacity="0.37" stroke-width="0.9"/><path d="M572.6,346.7 l0.4,-11.1" stroke="#fff" stroke-opacity="0.37" stroke-width="0.9"/><path d="M571.5,344.1 l-8.3,-12.0" stroke="#fff" stroke-opacity="0.37" stroke-width="0.9"/><path d="M571.5,344.1 l0.8,-17.1" stroke="#fff" stroke-opacity="0.37" stroke-width="0.9"/><path d="M570.5,341.4 l-8.2,-11.8" stroke="#fff" stroke-opacity="0.38" stroke-width="0.9"/><path d="M570.5,341.4 l0.6,-12.8" stroke="#fff" stroke-opacity="0.38" stroke-width="0.9"/><path d="M569.5,338.7 l-10.3,-14.6" stroke="#fff" stroke-opacity="0.39" stroke-width="0.9"/><path d="M569.5,338.7 l0.6,-10.1" stroke="#fff" stroke-opacity="0.39" stroke-width="0.9"/><path d="M568.5,336.0 l-10.0,-14.0" stroke="#fff" stroke-opacity="0.39" stroke-width="0.9"/><path d="M568.5,336.0 l0.7,-12.4" stroke="#fff" stroke-opacity="0.39" stroke-width="0.9"/><path d="M567.5,333.3 l-6.6,-9.2" stroke="#fff" stroke-opacity="0.40" stroke-width="0.9"/><path d="M567.5,333.3 l0.7,-11.1" stroke="#fff" stroke-opacity="0.40" stroke-width="0.9"/><path d="M566.6,330.7 l-7.7,-10.6" stroke="#fff" stroke-opacity="0.40" stroke-width="0.9"/><path d="M566.6,330.7 l1.2,-17.5" stroke="#fff" stroke-opacity="0.40" stroke-width="0.9"/><path d="M565.6,328.0 l-7.2,-9.8" stroke="#fff" stroke-opacity="0.41" stroke-width="0.9"/><path d="M565.6,328.0 l1.2,-15.8" stroke="#fff" stroke-opacity="0.41" stroke-width="0.9"/><path d="M564.7,325.3 l-10.0,-13.4" stroke="#fff" stroke-opacity="0.41" stroke-width="0.9"/><path d="M564.7,325.3 l1.1,-14.2" stroke="#fff" stroke-opacity="0.41" stroke-width="0.9"/><path d="M563.8,322.6 l-9.8,-13.0" stroke="#fff" stroke-opacity="0.42" stroke-width="0.9"/><path d="M563.8,322.6 l1.0,-11.6" stroke="#fff" stroke-opacity="0.42" stroke-width="0.9"/><path d="M562.9,319.8 l-7.2,-9.5" stroke="#fff" stroke-opacity="0.43" stroke-width="0.9"/><path d="M562.9,319.8 l1.2,-13.3" stroke="#fff" stroke-opacity="0.43" stroke-width="0.9"/><path d="M562.0,317.1 l-11.3,-14.7" stroke="#fff" stroke-opacity="0.43" stroke-width="0.9"/><path d="M562.0,317.1 l1.5,-15.9" stroke="#fff" stroke-opacity="0.43" stroke-width="0.9"/><path d="M561.1,314.4 l-9.3,-12.1" stroke="#fff" stroke-opacity="0.44" stroke-width="0.9"/><path d="M561.1,314.4 l1.8,-18.0" stroke="#fff" stroke-opacity="0.44" stroke-width="0.9"/><path d="M560.2,311.7 l-10.6,-13.5" stroke="#fff" stroke-opacity="0.44" stroke-width="0.9"/><path d="M560.2,311.7 l1.6,-15.5" stroke="#fff" stroke-opacity="0.44" stroke-width="0.9"/><path d="M559.4,309.0 l-13.3,-16.8" stroke="#fff" stroke-opacity="0.45" stroke-width="0.9"/><path d="M559.4,309.0 l2.2,-20.3" stroke="#fff" stroke-opacity="0.45" stroke-width="0.9"/><path d="M558.6,306.2 l-9.9,-12.4" stroke="#fff" stroke-opacity="0.45" stroke-width="0.9"/><path d="M558.6,306.2 l2.2,-19.5" stroke="#fff" stroke-opacity="0.45" stroke-width="0.9"/><path d="M557.8,303.5 l-12.3,-15.3" stroke="#fff" stroke-opacity="0.46" stroke-width="0.9"/><path d="M557.8,303.5 l2.8,-23.6" stroke="#fff" stroke-opacity="0.46" stroke-width="0.9"/><path d="M557.0,300.8 l-14.3,-17.7" stroke="#fff" stroke-opacity="0.47" stroke-width="0.9"/><path d="M557.0,300.8 l2.1,-17.3" stroke="#fff" stroke-opacity="0.47" stroke-width="0.9"/><path d="M556.2,298.0 l-16.9,-20.6" stroke="#fff" stroke-opacity="0.47" stroke-width="0.9"/><path d="M556.2,298.0 l2.0,-15.8" stroke="#fff" stroke-opacity="0.47" stroke-width="0.9"/><path d="M555.4,295.3 l-12.9,-15.6" stroke="#fff" stroke-opacity="0.48" stroke-width="0.9"/><path d="M555.4,295.3 l3.2,-24.4" stroke="#fff" stroke-opacity="0.48" stroke-width="0.9"/><path d="M554.7,292.5 l-11.2,-13.4" stroke="#fff" stroke-opacity="0.48" stroke-width="0.9"/><path d="M554.7,292.5 l3.0,-21.7" stroke="#fff" stroke-opacity="0.48" stroke-width="0.9"/><path d="M553.9,289.8 l-10.6,-12.6" stroke="#fff" stroke-opacity="0.49" stroke-width="0.9"/><path d="M553.9,289.8 l3.5,-24.8" stroke="#fff" stroke-opacity="0.49" stroke-width="0.9"/><path d="M553.2,287.0 l-17.7,-20.8" stroke="#fff" stroke-opacity="0.49" stroke-width="0.9"/><path d="M553.2,287.0 l3.5,-24.3" stroke="#fff" stroke-opacity="0.49" stroke-width="0.9"/><path d="M552.5,284.2 l-19.4,-22.6" stroke="#fff" stroke-opacity="0.50" stroke-width="0.9"/><path d="M552.5,284.2 l3.2,-21.4" stroke="#fff" stroke-opacity="0.50" stroke-width="0.9"/><path d="M551.8,281.5 l-18.4,-21.2" stroke="#fff" stroke-opacity="0.50" stroke-width="0.9"/><path d="M551.8,281.5 l4.1,-26.3" stroke="#fff" stroke-opacity="0.50" stroke-width="0.9"/><path d="M551.1,278.7 l-18.0,-20.5" stroke="#fff" stroke-opacity="0.51" stroke-width="0.9"/><path d="M551.1,278.7 l4.0,-25.0" stroke="#fff" stroke-opacity="0.51" stroke-width="0.9"/><path d="M550.5,275.9 l-21.5,-24.2" stroke="#fff" stroke-opacity="0.52" stroke-width="0.9"/><path d="M550.5,275.9 l5.6,-33.6" stroke="#fff" stroke-opacity="0.52" stroke-width="0.9"/><path d="M549.8,273.1 l-18.2,-20.4" stroke="#fff" stroke-opacity="0.52" stroke-width="0.9"/><path d="M549.8,273.1 l5.1,-30.1" stroke="#fff" stroke-opacity="0.52" stroke-width="0.9"/><path d="M549.2,270.4 l-14.2,-15.7" stroke="#fff" stroke-opacity="0.53" stroke-width="0.9"/><path d="M549.2,270.4 l5.6,-31.7" stroke="#fff" stroke-opacity="0.53" stroke-width="0.9"/><path d="M548.6,267.6 l-21.8,-23.9" stroke="#fff" stroke-opacity="0.53" stroke-width="0.9"/><path d="M548.6,267.6 l6.8,-37.9" stroke="#fff" stroke-opacity="0.53" stroke-width="0.9"/><path d="M548.0,264.8 l-24.8,-27.0" stroke="#fff" stroke-opacity="0.54" stroke-width="0.9"/><path d="M548.0,264.8 l4.9,-26.3" stroke="#fff" stroke-opacity="0.54" stroke-width="0.9"/><path d="M547.4,262.0 l-20.1,-21.7" stroke="#fff" stroke-opacity="0.54" stroke-width="0.9"/><path d="M547.4,262.0 l6.5,-34.3" stroke="#fff" stroke-opacity="0.54" stroke-width="0.9"/><path d="M546.8,259.2 l-16.0,-17.1" stroke="#fff" stroke-opacity="0.55" stroke-width="0.9"/><path d="M546.8,259.2 l6.1,-31.5" stroke="#fff" stroke-opacity="0.55" stroke-width="0.9"/><path d="M546.3,256.4 l-18.7,-19.7" stroke="#fff" stroke-opacity="0.56" stroke-width="0.9"/><path d="M546.3,256.4 l5.1,-25.6" stroke="#fff" stroke-opacity="0.56" stroke-width="0.9"/><path d="M545.7,253.6 l-17.8,-18.6" stroke="#fff" stroke-opacity="0.56" stroke-width="0.9"/><path d="M545.7,253.6 l8.1,-39.8" stroke="#fff" stroke-opacity="0.56" stroke-width="0.9"/><path d="M545.2,250.7 l-19.5,-20.2" stroke="#fff" stroke-opacity="0.57" stroke-width="0.9"/><path d="M545.2,250.7 l6.3,-30.0" stroke="#fff" stroke-opacity="0.57" stroke-width="0.9"/><path d="M544.7,247.9 l-24.3,-25.0" stroke="#fff" stroke-opacity="0.57" stroke-width="0.9"/><path d="M544.7,247.9 l9.6,-44.6" stroke="#fff" stroke-opacity="0.57" stroke-width="0.9"/><path d="M544.2,245.1 l-20.2,-20.5" stroke="#fff" stroke-opacity="0.58" stroke-width="0.9"/><path d="M544.2,245.1 l8.0,-36.5" stroke="#fff" stroke-opacity="0.58" stroke-width="0.9"/><path d="M543.7,242.3 l-28.8,-29.0" stroke="#fff" stroke-opacity="0.58" stroke-width="0.9"/><path d="M543.7,242.3 l10.7,-47.7" stroke="#fff" stroke-opacity="0.58" stroke-width="0.9"/><path d="M543.3,239.4 l-34.6,-34.5" stroke="#fff" stroke-opacity="0.59" stroke-width="0.9"/><path d="M543.3,239.4 l11.2,-48.7" stroke="#fff" stroke-opacity="0.59" stroke-width="0.9"/><path d="M543.3,239.4 Q531.0,214.9 507.4,204.9" stroke="#fff" stroke-opacity="0.54" stroke-width="1" fill="none"/><path d="M543.3,239.4 Q530.8,214.0 507.0,202.9" stroke="#fff" stroke-opacity="0.54" stroke-width="1" fill="none"/><path d="M543.3,239.4 Q530.9,213.6 507.5,201.6" stroke="#fff" stroke-opacity="0.54" stroke-width="1" fill="none"/><path d="M543.3,239.4 Q530.2,211.6 505.9,198.0" stroke="#fff" stroke-opacity="0.54" stroke-width="1" fill="none"/><path d="M543.3,239.4 Q530.1,210.9 506.0,196.1" stroke="#fff" stroke-opacity="0.54" stroke-width="1" fill="none"/><path d="M543.3,239.4 Q531.2,212.6 509.3,198.1" stroke="#fff" stroke-opacity="0.54" stroke-width="1" fill="none"/><path d="M543.3,239.4 Q531.2,212.0 509.7,196.5" stroke="#fff" stroke-opacity="0.54" stroke-width="1" fill="none"/><path d="M543.3,239.4 Q531.2,211.3 510.0,194.9" stroke="#fff" stroke-opacity="0.54" stroke-width="1" fill="none"/><path d="M543.3,239.4 Q531.2,210.9 510.6,193.5" stroke="#fff" stroke-opacity="0.54" stroke-width="1" fill="none"/><path d="M543.3,239.4 Q531.0,209.6 510.5,190.9" stroke="#fff" stroke-opacity="0.54" stroke-width="1" fill="none"/><path d="M543.3,239.4 Q531.0,208.8 510.9,189.0" stroke="#fff" stroke-opacity="0.54" stroke-width="1" fill="none"/><path d="M543.3,239.4 Q531.5,209.4 512.7,189.4" stroke="#fff" stroke-opacity="0.54" stroke-width="1" fill="none"/><path d="M543.3,239.4 Q531.9,209.8 514.4,189.5" stroke="#fff" stroke-opacity="0.54" stroke-width="1" fill="none"/><path d="M543.3,239.4 Q531.5,208.1 514.0,186.0" stroke="#fff" stroke-opacity="0.54" stroke-width="1" fill="none"/><path d="M543.3,239.4 Q531.7,207.8 515.1,185.1" stroke="#fff" stroke-opacity="0.54" stroke-width="1" fill="none"/><path d="M543.3,239.4 Q531.7,206.8 515.6,182.8" stroke="#fff" stroke-opacity="0.54" stroke-width="1" fill="none"/><path d="M543.3,239.4 Q531.4,205.1 515.7,179.5" stroke="#fff" stroke-opacity="0.54" stroke-width="1" fill="none"/><path d="M543.3,239.4 Q531.9,205.6 517.5,179.9" stroke="#fff" stroke-opacity="0.54" stroke-width="1" fill="none"/><path d="M543.3,239.4 Q532.3,205.9 519.2,180.0" stroke="#fff" stroke-opacity="0.54" stroke-width="1" fill="none"/><path d="M543.3,239.4 Q532.4,205.2 520.2,178.4" stroke="#fff" stroke-opacity="0.54" stroke-width="1" fill="none"/><path d="M543.3,239.4 Q532.5,204.8 521.4,177.2" stroke="#fff" stroke-opacity="0.54" stroke-width="1" fill="none"/><path d="M543.3,239.4 Q533.4,206.7 524.0,180.3" stroke="#fff" stroke-opacity="0.54" stroke-width="1" fill="none"/><path d="M543.3,239.4 Q532.8,203.6 523.7,174.4" stroke="#fff" stroke-opacity="0.54" stroke-width="1" fill="none"/><path d="M543.3,239.4 Q533.2,203.9 525.4,174.7" stroke="#fff" stroke-opacity="0.54" stroke-width="1" fill="none"/><path d="M543.3,239.4 Q533.4,203.6 526.8,173.9" stroke="#fff" stroke-opacity="0.54" stroke-width="1" fill="none"/><path d="M543.3,239.4 Q533.8,203.9 528.6,174.3" stroke="#fff" stroke-opacity="0.54" stroke-width="1" fill="none"/><path d="M543.3,239.4 Q534.5,205.5 530.7,176.9" stroke="#fff" stroke-opacity="0.54" stroke-width="1" fill="none"/><path d="M543.3,239.4 Q534.9,205.6 532.2,177.0" stroke="#fff" stroke-opacity="0.54" stroke-width="1" fill="none"/><path d="M543.3,239.4 Q535.4,206.8 534.0,179.1" stroke="#fff" stroke-opacity="0.54" stroke-width="1" fill="none"/><path d="M543.3,239.4 Q535.3,205.1 535.0,176.0" stroke="#fff" stroke-opacity="0.54" stroke-width="1" fill="none"/><path d="M543.3,239.4 Q536.1,207.3 536.9,179.9" stroke="#fff" stroke-opacity="0.54" stroke-width="1" fill="none"/><path d="M543.3,239.4 Q536.4,207.5 538.4,180.3" stroke="#fff" stroke-opacity="0.54" stroke-width="1" fill="none"/><path d="M543.3,239.4 Q536.7,207.3 539.7,179.9" stroke="#fff" stroke-opacity="0.54" stroke-width="1" fill="none"/><path d="M543.3,239.4 Q537.0,207.8 541.1,180.8" stroke="#fff" stroke-opacity="0.54" stroke-width="1" fill="none"/><path d="M543.3,239.4 Q537.2,207.5 542.5,180.3" stroke="#fff" stroke-opacity="0.54" stroke-width="1" fill="none"/><path d="M543.3,239.4 Q537.7,208.7 543.9,182.7" stroke="#fff" stroke-opacity="0.54" stroke-width="1" fill="none"/><path d="M543.3,239.4 Q538.1,209.2 545.1,183.8" stroke="#fff" stroke-opacity="0.54" stroke-width="1" fill="none"/><path d="M543.3,239.4 Q538.3,209.1 546.4,183.6" stroke="#fff" stroke-opacity="0.54" stroke-width="1" fill="none"/><path d="M543.3,239.4 Q538.6,209.6 547.7,184.8" stroke="#fff" stroke-opacity="0.54" stroke-width="1" fill="none"/><path d="M543.3,239.4 Q538.8,209.2 549.0,184.2" stroke="#fff" stroke-opacity="0.54" stroke-width="1" fill="none"/><path d="M543.3,239.4 Q539.3,210.6 549.9,187.0" stroke="#fff" stroke-opacity="0.54" stroke-width="1" fill="none"/><path d="M543.3,239.4 Q539.2,208.5 551.7,183.4" stroke="#fff" stroke-opacity="0.54" stroke-width="1" fill="none"/><path d="M543.3,239.4 Q539.6,209.7 552.6,185.9" stroke="#fff" stroke-opacity="0.54" stroke-width="1" fill="none"/><path d="M543.3,239.4 Q540.1,211.6 553.2,189.4" stroke="#fff" stroke-opacity="0.54" stroke-width="1" fill="none"/><path d="M543.3,239.4 Q540.3,211.7 554.3,190.0" stroke="#fff" stroke-opacity="0.54" stroke-width="1" fill="none"/><path d="M543.3,239.4 Q540.6,212.0 555.3,190.7" stroke="#fff" stroke-opacity="0.54" stroke-width="1" fill="none"/><path d="M543.3,239.4 L507.4,204.9 L507.0,202.9 L507.5,201.6 L505.9,198.0 L506.0,196.1 L509.3,198.1 L509.7,196.5 L510.0,194.9 L510.6,193.5 L510.5,190.9 L510.9,189.0 L512.7,189.4 L514.4,189.5 L514.0,186.0 L515.1,185.1 L515.6,182.8 L515.7,179.5 L517.5,179.9 L519.2,180.0 L520.2,178.4 L521.4,177.2 L524.0,180.3 L523.7,174.4 L525.4,174.7 L526.8,173.9 L528.6,174.3 L530.7,176.9 L532.2,177.0 L534.0,179.1 L535.0,176.0 L536.9,179.9 L538.4,180.3 L539.7,179.9 L541.1,180.8 L542.5,180.3 L543.9,182.7 L545.1,183.8 L546.4,183.6 L547.7,184.8 L549.0,184.2 L549.9,187.0 L551.7,183.4 L552.6,185.9 L553.2,189.4 L554.3,190.0 L555.3,190.7Z" fill="#fff" fill-opacity="0.56" filter="url(#b1)"/><ellipse cx="532.3" cy="201.4" rx="20.5" ry="17.2" transform="rotate(-16.1 532.3 201.4)" fill="#fff" fill-opacity="0.77" filter="url(#b2)"/><path d="M586.0,354.0 Q573.2,286.5 576.7,217.8" stroke="#fff" stroke-opacity="0.9" stroke-width="2.0" fill="none"/><path d="M588.1,357.0 Q578.4,293.9 582.2,225.7" stroke="#fff" stroke-opacity="0.45" stroke-width="0.9" fill="none"/><path d="M585.8,353.9 Q572.7,286.2 576.1,217.6" stroke="#fff" stroke-opacity="0.45" stroke-width="0.9" fill="none"/><path d="M583.5,351.6 Q567.0,280.5 570.0,211.5" stroke="#fff" stroke-opacity="0.45" stroke-width="0.9" fill="none"/><path d="M585.1,352.6 Q570.8,283.0 574.1,214.1" stroke="#fff" stroke-opacity="0.45" stroke-width="0.9" fill="none"/><path d="M584.3,344.8 l-5.8,-14.6" stroke="#fff" stroke-opacity="0.36" stroke-width="0.9"/><path d="M584.3,344.8 l2.5,-10.2" stroke="#fff" stroke-opacity="0.36" stroke-width="0.9"/><path d="M583.8,341.7 l-3.5,-8.8" stroke="#fff" stroke-opacity="0.36" stroke-width="0.9"/><path d="M583.8,341.7 l4.1,-16.3" stroke="#fff" stroke-opacity="0.36" stroke-width="0.9"/><path d="M583.3,338.6 l-5.2,-12.6" stroke="#fff" stroke-opacity="0.37" stroke-width="0.9"/><path d="M583.3,338.6 l2.6,-10.2" stroke="#fff" stroke-opacity="0.37" stroke-width="0.9"/><path d="M582.8,335.6 l-5.3,-12.8" stroke="#fff" stroke-opacity="0.37" stroke-width="0.9"/><path d="M582.8,335.6 l2.5,-9.4" stroke="#fff" stroke-opacity="0.37" stroke-width="0.9"/><path d="M582.3,332.5 l-5.4,-12.8" stroke="#fff" stroke-opacity="0.38" stroke-width="0.9"/><path d="M582.3,332.5 l4.6,-17.0" stroke="#fff" stroke-opacity="0.38" stroke-width="0.9"/><path d="M581.9,329.4 l-6.7,-15.6" stroke="#fff" stroke-opacity="0.39" stroke-width="0.9"/><path d="M581.9,329.4 l4.1,-15.0" stroke="#fff" stroke-opacity="0.39" stroke-width="0.9"/><path d="M581.4,326.3 l-4.8,-11.1" stroke="#fff" stroke-opacity="0.39" stroke-width="0.9"/><path d="M581.4,326.3 l3.5,-12.6" stroke="#fff" stroke-opacity="0.39" stroke-width="0.9"/><path d="M581.0,323.3 l-4.6,-10.6" stroke="#fff" stroke-opacity="0.40" stroke-width="0.9"/><path d="M581.0,323.3 l4.6,-16.2" stroke="#fff" stroke-opacity="0.40" stroke-width="0.9"/><path d="M580.6,320.2 l-6.1,-13.7" stroke="#fff" stroke-opacity="0.40" stroke-width="0.9"/><path d="M580.6,320.2 l4.8,-16.5" stroke="#fff" stroke-opacity="0.40" stroke-width="0.9"/><path d="M580.2,317.1 l-5.6,-12.4" stroke="#fff" stroke-opacity="0.41" stroke-width="0.9"/><path d="M580.2,317.1 l3.5,-12.1" stroke="#fff" stroke-opacity="0.41" stroke-width="0.9"/><path d="M579.8,314.0 l-7.6,-16.7" stroke="#fff" stroke-opacity="0.41" stroke-width="0.9"/><path d="M579.8,314.0 l5.7,-19.1" stroke="#fff" stroke-opacity="0.41" stroke-width="0.9"/><path d="M579.5,310.9 l-8.0,-17.4" stroke="#fff" stroke-opacity="0.42" stroke-width="0.9"/><path d="M579.5,310.9 l5.4,-17.9" stroke="#fff" stroke-opacity="0.42" stroke-width="0.9"/><path d="M579.1,307.8 l-8.2,-17.5" stroke="#fff" stroke-opacity="0.43" stroke-width="0.9"/><path d="M579.1,307.8 l5.5,-17.8" stroke="#fff" stroke-opacity="0.43" stroke-width="0.9"/><path d="M578.8,304.7 l-6.0,-12.6" stroke="#fff" stroke-opacity="0.43" stroke-width="0.9"/><path d="M578.8,304.7 l5.1,-16.1" stroke="#fff" stroke-opacity="0.43" stroke-width="0.9"/><path d="M578.5,301.7 l-6.8,-14.2" stroke="#fff" stroke-opacity="0.44" stroke-width="0.9"/><path d="M578.5,301.7 l3.7,-11.7" stroke="#fff" stroke-opacity="0.44" stroke-width="0.9"/><path d="M578.2,298.6 l-5.5,-11.4" stroke="#fff" stroke-opacity="0.44" stroke-width="0.9"/><path d="M578.2,298.6 l4.7,-14.6" stroke="#fff" stroke-opacity="0.44" stroke-width="0.9"/><path d="M578.0,295.5 l-6.9,-14.0" stroke="#fff" stroke-opacity="0.45" stroke-width="0.9"/><path d="M578.0,295.5 l6.4,-19.3" stroke="#fff" stroke-opacity="0.45" stroke-width="0.9"/><path d="M577.7,292.4 l-10.6,-21.4" stroke="#fff" stroke-opacity="0.45" stroke-width="0.9"/><path d="M577.7,292.4 l5.8,-17.2" stroke="#fff" stroke-opacity="0.45" stroke-width="0.9"/><path d="M577.5,289.3 l-11.0,-21.9" stroke="#fff" stroke-opacity="0.46" stroke-width="0.9"/><path d="M577.5,289.3 l8.1,-23.7" stroke="#fff" stroke-opacity="0.46" stroke-width="0.9"/><path d="M577.2,286.2 l-11.5,-22.7" stroke="#fff" stroke-opacity="0.47" stroke-width="0.9"/><path d="M577.2,286.2 l6.0,-17.4" stroke="#fff" stroke-opacity="0.47" stroke-width="0.9"/><path d="M577.0,283.1 l-7.9,-15.3" stroke="#fff" stroke-opacity="0.47" stroke-width="0.9"/><path d="M577.0,283.1 l5.7,-16.3" stroke="#fff" stroke-opacity="0.47" stroke-width="0.9"/><path d="M576.9,280.0 l-8.0,-15.5" stroke="#fff" stroke-opacity="0.48" stroke-width="0.9"/><path d="M576.9,280.0 l5.9,-16.5" stroke="#fff" stroke-opacity="0.48" stroke-width="0.9"/><path d="M576.7,276.9 l-11.0,-21.0" stroke="#fff" stroke-opacity="0.48" stroke-width="0.9"/><path d="M576.7,276.9 l9.3,-25.7" stroke="#fff" stroke-opacity="0.48" stroke-width="0.9"/><path d="M576.5,273.8 l-12.9,-24.2" stroke="#fff" stroke-opacity="0.49" stroke-width="0.9"/><path d="M576.5,273.8 l7.8,-21.1" stroke="#fff" stroke-opacity="0.49" stroke-width="0.9"/><path d="M576.4,270.7 l-12.2,-22.6" stroke="#fff" stroke-opacity="0.49" stroke-width="0.9"/><path d="M576.4,270.7 l9.7,-26.0" stroke="#fff" stroke-opacity="0.49" stroke-width="0.9"/><path d="M576.3,267.6 l-8.7,-16.1" stroke="#fff" stroke-opacity="0.50" stroke-width="0.9"/><path d="M576.3,267.6 l9.4,-25.0" stroke="#fff" stroke-opacity="0.50" stroke-width="0.9"/><path d="M576.2,264.5 l-15.1,-27.5" stroke="#fff" stroke-opacity="0.50" stroke-width="0.9"/><path d="M576.2,264.5 l10.5,-27.5" stroke="#fff" stroke-opacity="0.50" stroke-width="0.9"/><path d="M576.1,261.4 l-14.6,-26.1" stroke="#fff" stroke-opacity="0.51" stroke-width="0.9"/><path d="M576.1,261.4 l9.3,-23.9" stroke="#fff" stroke-opacity="0.51" stroke-width="0.9"/><path d="M576.0,258.3 l-10.7,-18.9" stroke="#fff" stroke-opacity="0.52" stroke-width="0.9"/><path d="M576.0,258.3 l11.6,-29.4" stroke="#fff" stroke-opacity="0.52" stroke-width="0.9"/><path d="M576.0,255.2 l-12.4,-21.7" stroke="#fff" stroke-opacity="0.52" stroke-width="0.9"/><path d="M576.0,255.2 l12.2,-30.5" stroke="#fff" stroke-opacity="0.52" stroke-width="0.9"/><path d="M575.9,252.1 l-18.4,-32.0" stroke="#fff" stroke-opacity="0.53" stroke-width="0.9"/><path d="M575.9,252.1 l10.1,-25.0" stroke="#fff" stroke-opacity="0.53" stroke-width="0.9"/><path d="M575.9,249.0 l-14.1,-24.2" stroke="#fff" stroke-opacity="0.53" stroke-width="0.9"/><path d="M575.9,249.0 l14.3,-34.9" stroke="#fff" stroke-opacity="0.53" stroke-width="0.9"/><path d="M575.9,245.9 l-17.7,-30.0" stroke="#fff" stroke-opacity="0.54" stroke-width="0.9"/><path d="M575.9,245.9 l9.5,-22.7" stroke="#fff" stroke-opacity="0.54" stroke-width="0.9"/><path d="M575.9,242.8 l-12.6,-21.2" stroke="#fff" stroke-opacity="0.54" stroke-width="0.9"/><path d="M575.9,242.8 l9.8,-23.1" stroke="#fff" stroke-opacity="0.54" stroke-width="0.9"/><path d="M576.0,239.7 l-21.0,-34.9" stroke="#fff" stroke-opacity="0.55" stroke-width="0.9"/><path d="M576.0,239.7 l15.3,-35.7" stroke="#fff" stroke-opacity="0.55" stroke-width="0.9"/><path d="M576.0,236.5 l-13.9,-22.8" stroke="#fff" stroke-opacity="0.56" stroke-width="0.9"/><path d="M576.0,236.5 l16.1,-37.2" stroke="#fff" stroke-opacity="0.56" stroke-width="0.9"/><path d="M576.1,233.4 l-23.6,-38.4" stroke="#fff" stroke-opacity="0.56" stroke-width="0.9"/><path d="M576.1,233.4 l15.4,-35.1" stroke="#fff" stroke-opacity="0.56" stroke-width="0.9"/><path d="M576.2,230.3 l-17.4,-27.9" stroke="#fff" stroke-opacity="0.57" stroke-width="0.9"/><path d="M576.2,230.3 l15.1,-34.0" stroke="#fff" stroke-opacity="0.57" stroke-width="0.9"/><path d="M576.3,227.2 l-15.4,-24.6" stroke="#fff" stroke-opacity="0.57" stroke-width="0.9"/><path d="M576.3,227.2 l10.9,-24.1" stroke="#fff" stroke-opacity="0.57" stroke-width="0.9"/><path d="M576.4,224.1 l-26.5,-41.7" stroke="#fff" stroke-opacity="0.58" stroke-width="0.9"/><path d="M576.4,224.1 l17.4,-38.2" stroke="#fff" stroke-opacity="0.58" stroke-width="0.9"/><path d="M576.5,221.0 l-21.8,-34.0" stroke="#fff" stroke-opacity="0.58" stroke-width="0.9"/><path d="M576.5,221.0 l21.0,-45.5" stroke="#fff" stroke-opacity="0.58" stroke-width="0.9"/><path d="M576.7,217.8 l-21.4,-33.0" stroke="#fff" stroke-opacity="0.59" stroke-width="0.9"/><path d="M576.7,217.8 l21.3,-45.4" stroke="#fff" stroke-opacity="0.59" stroke-width="0.9"/><path d="M576.7,217.8 Q569.2,188.9 546.4,172.8" stroke="#fff" stroke-opacity="0.54" stroke-width="1" fill="none"/><path d="M576.7,217.8 Q569.8,190.1 548.7,174.1" stroke="#fff" stroke-opacity="0.54" stroke-width="1" fill="none"/><path d="M576.7,217.8 Q569.8,189.5 549.1,172.5" stroke="#fff" stroke-opacity="0.54" stroke-width="1" fill="none"/><path d="M576.7,217.8 Q569.9,188.8 549.6,170.9" stroke="#fff" stroke-opacity="0.54" stroke-width="1" fill="none"/><path d="M576.7,217.8 Q570.1,188.4 550.4,169.7" stroke="#fff" stroke-opacity="0.54" stroke-width="1" fill="none"/><path d="M576.7,217.8 Q570.0,186.8 550.2,166.6" stroke="#fff" stroke-opacity="0.54" stroke-width="1" fill="none"/><path d="M576.7,217.8 Q570.4,187.3 551.9,166.9" stroke="#fff" stroke-opacity="0.54" stroke-width="1" fill="none"/><path d="M576.7,217.8 Q570.4,186.3 552.4,164.8" stroke="#fff" stroke-opacity="0.54" stroke-width="1" fill="none"/><path d="M576.7,217.8 Q570.8,186.8 554.0,165.1" stroke="#fff" stroke-opacity="0.54" stroke-width="1" fill="none"/><path d="M576.7,217.8 Q570.5,183.8 553.2,159.5" stroke="#fff" stroke-opacity="0.54" stroke-width="1" fill="none"/><path d="M576.7,217.8 Q571.0,185.2 555.5,161.4" stroke="#fff" stroke-opacity="0.54" stroke-width="1" fill="none"/><path d="M576.7,217.8 Q571.2,184.4 556.3,159.6" stroke="#fff" stroke-opacity="0.54" stroke-width="1" fill="none"/><path d="M576.7,217.8 Q571.3,183.5 557.2,157.8" stroke="#fff" stroke-opacity="0.54" stroke-width="1" fill="none"/><path d="M576.7,217.8 Q571.4,182.0 557.9,154.7" stroke="#fff" stroke-opacity="0.54" stroke-width="1" fill="none"/><path d="M576.7,217.8 Q571.9,183.3 560.0,156.7" stroke="#fff" stroke-opacity="0.54" stroke-width="1" fill="none"/><path d="M576.7,217.8 Q571.9,181.2 560.5,152.6" stroke="#fff" stroke-opacity="0.54" stroke-width="1" fill="none"/><path d="M576.7,217.8 Q572.3,182.3 562.5,154.4" stroke="#fff" stroke-opacity="0.54" stroke-width="1" fill="none"/><path d="M576.7,217.8 Q572.6,181.9 563.8,153.4" stroke="#fff" stroke-opacity="0.54" stroke-width="1" fill="none"/><path d="M576.7,217.8 Q572.8,181.7 565.3,152.7" stroke="#fff" stroke-opacity="0.54" stroke-width="1" fill="none"/><path d="M576.7,217.8 Q573.3,183.3 567.2,155.4" stroke="#fff" stroke-opacity="0.54" stroke-width="1" fill="none"/><path d="M576.7,217.8 Q573.4,181.5 568.3,152.0" stroke="#fff" stroke-opacity="0.54" stroke-width="1" fill="none"/><path d="M576.7,217.8 Q573.8,182.3 570.0,153.3" stroke="#fff" stroke-opacity="0.54" stroke-width="1" fill="none"/><path d="M576.7,217.8 Q574.1,182.8 571.5,154.1" stroke="#fff" stroke-opacity="0.54" stroke-width="1" fill="none"/><path d="M576.7,217.8 Q574.2,179.8 572.7,148.6" stroke="#fff" stroke-opacity="0.54" stroke-width="1" fill="none"/><path d="M576.7,217.8 Q574.6,182.2 574.5,153.0" stroke="#fff" stroke-opacity="0.54" stroke-width="1" fill="none"/><path d="M576.7,217.8 Q574.9,181.3 576.0,151.3" stroke="#fff" stroke-opacity="0.54" stroke-width="1" fill="none"/><path d="M576.7,217.8 Q575.2,180.5 577.5,149.9" stroke="#fff" stroke-opacity="0.54" stroke-width="1" fill="none"/><path d="M576.7,217.8 Q575.5,181.4 579.1,151.5" stroke="#fff" stroke-opacity="0.54" stroke-width="1" fill="none"/><path d="M576.7,217.8 Q575.8,182.4 580.5,153.6" stroke="#fff" stroke-opacity="0.54" stroke-width="1" fill="none"/><path d="M576.7,217.8 Q576.1,182.0 582.0,152.9" stroke="#fff" stroke-opacity="0.54" stroke-width="1" fill="none"/><path d="M576.7,217.8 Q576.4,182.2 583.5,153.4" stroke="#fff" stroke-opacity="0.54" stroke-width="1" fill="none"/><path d="M576.7,217.8 Q576.7,181.7 585.1,152.7" stroke="#fff" stroke-opacity="0.54" stroke-width="1" fill="none"/><path d="M576.7,217.8 Q577.0,184.4 585.9,157.8" stroke="#fff" stroke-opacity="0.54" stroke-width="1" fill="none"/><path d="M576.7,217.8 Q577.2,183.2 587.7,155.8" stroke="#fff" stroke-opacity="0.54" stroke-width="1" fill="none"/><path d="M576.7,217.8 Q577.5,184.7 588.6,158.7" stroke="#fff" stroke-opacity="0.54" stroke-width="1" fill="none"/><path d="M576.7,217.8 Q577.8,185.0 589.8,159.5" stroke="#fff" stroke-opacity="0.54" stroke-width="1" fill="none"/><path d="M576.7,217.8 Q578.1,183.7 591.8,157.6" stroke="#fff" stroke-opacity="0.54" stroke-width="1" fill="none"/><path d="M576.7,217.8 Q578.3,185.0 592.5,160.3" stroke="#fff" stroke-opacity="0.54" stroke-width="1" fill="none"/><path d="M576.7,217.8 Q578.5,185.3 593.7,161.1" stroke="#fff" stroke-opacity="0.54" stroke-width="1" fill="none"/><path d="M576.7,217.8 Q578.8,185.2 595.1,161.2" stroke="#fff" stroke-opacity="0.54" stroke-width="1" fill="none"/><path d="M576.7,217.8 Q579.1,185.2 596.4,161.7" stroke="#fff" stroke-opacity="0.54" stroke-width="1" fill="none"/><path d="M576.7,217.8 Q579.2,187.2 596.5,165.5" stroke="#fff" stroke-opacity="0.54" stroke-width="1" fill="none"/><path d="M576.7,217.8 Q579.4,187.2 597.7,165.9" stroke="#fff" stroke-opacity="0.54" stroke-width="1" fill="none"/><path d="M576.7,217.8 Q579.6,188.0 598.3,167.9" stroke="#fff" stroke-opacity="0.54" stroke-width="1" fill="none"/><path d="M576.7,217.8 Q579.8,188.6 599.1,169.2" stroke="#fff" stroke-opacity="0.54" stroke-width="1" fill="none"/><path d="M576.7,217.8 Q580.0,188.6 600.2,169.8" stroke="#fff" stroke-opacity="0.54" stroke-width="1" fill="none"/><path d="M576.7,217.8 L546.4,172.8 L548.7,174.1 L549.1,172.5 L549.6,170.9 L550.4,169.7 L550.2,166.6 L551.9,166.9 L552.4,164.8 L554.0,165.1 L553.2,159.5 L555.5,161.4 L556.3,159.6 L557.2,157.8 L557.9,154.7 L560.0,156.7 L560.5,152.6 L562.5,154.4 L563.8,153.4 L565.3,152.7 L567.2,155.4 L568.3,152.0 L570.0,153.3 L571.5,154.1 L572.7,148.6 L574.5,153.0 L576.0,151.3 L577.5,149.9 L579.1,151.5 L580.5,153.6 L582.0,152.9 L583.5,153.4 L585.1,152.7 L585.9,157.8 L587.7,155.8 L588.6,158.7 L589.8,159.5 L591.8,157.6 L592.5,160.3 L593.7,161.1 L595.1,161.2 L596.4,161.7 L596.5,165.5 L597.7,165.9 L598.3,167.9 L599.1,169.2 L600.2,169.8Z" fill="#fff" fill-opacity="0.56" filter="url(#b1)"/><ellipse cx="573.9" cy="177.1" rx="21.1" ry="17.7" transform="rotate(-3.9 573.9 177.1)" fill="#fff" fill-opacity="0.77" filter="url(#b2)"/><path d="M590.0,352.0 Q592.0,280.5 610.5,211.3" stroke="#fff" stroke-opacity="0.9" stroke-width="2.0" fill="none"/><path d="M589.9,354.6 Q591.7,287.1 610.1,218.4" stroke="#fff" stroke-opacity="0.45" stroke-width="0.9" fill="none"/><path d="M591.2,354.3 Q595.0,286.1 613.7,217.3" stroke="#fff" stroke-opacity="0.45" stroke-width="0.9" fill="none"/><path d="M592.7,350.6 Q598.6,276.8 617.6,207.5" stroke="#fff" stroke-opacity="0.45" stroke-width="0.9" fill="none"/><path d="M590.4,354.7 Q592.9,287.1 611.4,218.4" stroke="#fff" stroke-opacity="0.45" stroke-width="0.9" fill="none"/><path d="M590.3,342.3 l-2.6,-15.6" stroke="#fff" stroke-opacity="0.36" stroke-width="0.9"/><path d="M590.3,342.3 l4.5,-9.2" stroke="#fff" stroke-opacity="0.36" stroke-width="0.9"/><path d="M590.5,339.0 l-1.7,-10.1" stroke="#fff" stroke-opacity="0.36" stroke-width="0.9"/><path d="M590.5,339.0 l5.7,-11.4" stroke="#fff" stroke-opacity="0.36" stroke-width="0.9"/><path d="M590.7,335.8 l-1.7,-9.8" stroke="#fff" stroke-opacity="0.37" stroke-width="0.9"/><path d="M590.7,335.8 l5.1,-10.1" stroke="#fff" stroke-opacity="0.37" stroke-width="0.9"/><path d="M590.9,332.5 l-1.8,-9.9" stroke="#fff" stroke-opacity="0.37" stroke-width="0.9"/><path d="M590.9,332.5 l6.7,-13.3" stroke="#fff" stroke-opacity="0.37" stroke-width="0.9"/><path d="M591.1,329.3 l-3.0,-15.8" stroke="#fff" stroke-opacity="0.38" stroke-width="0.9"/><path d="M591.1,329.3 l7.8,-15.1" stroke="#fff" stroke-opacity="0.38" stroke-width="0.9"/><path d="M591.3,326.1 l-2.1,-10.8" stroke="#fff" stroke-opacity="0.39" stroke-width="0.9"/><path d="M591.3,326.1 l7.3,-14.0" stroke="#fff" stroke-opacity="0.39" stroke-width="0.9"/><path d="M591.5,322.8 l-3.0,-15.2" stroke="#fff" stroke-opacity="0.39" stroke-width="0.9"/><path d="M591.5,322.8 l5.2,-9.9" stroke="#fff" stroke-opacity="0.39" stroke-width="0.9"/><path d="M591.8,319.6 l-3.5,-17.4" stroke="#fff" stroke-opacity="0.40" stroke-width="0.9"/><path d="M591.8,319.6 l8.7,-16.3" stroke="#fff" stroke-opacity="0.40" stroke-width="0.9"/><path d="M592.0,316.4 l-2.5,-12.0" stroke="#fff" stroke-opacity="0.40" stroke-width="0.9"/><path d="M592.0,316.4 l8.9,-16.5" stroke="#fff" stroke-opacity="0.40" stroke-width="0.9"/><path d="M592.3,313.2 l-2.9,-13.9" stroke="#fff" stroke-opacity="0.41" stroke-width="0.9"/><path d="M592.3,313.2 l7.2,-13.1" stroke="#fff" stroke-opacity="0.41" stroke-width="0.9"/><path d="M592.6,309.9 l-4.2,-19.5" stroke="#fff" stroke-opacity="0.41" stroke-width="0.9"/><path d="M592.6,309.9 l8.9,-16.2" stroke="#fff" stroke-opacity="0.41" stroke-width="0.9"/><path d="M592.9,306.7 l-2.7,-12.3" stroke="#fff" stroke-opacity="0.42" stroke-width="0.9"/><path d="M592.9,306.7 l7.4,-13.3" stroke="#fff" stroke-opacity="0.42" stroke-width="0.9"/><path d="M593.3,303.5 l-3.6,-16.0" stroke="#fff" stroke-opacity="0.43" stroke-width="0.9"/><path d="M593.3,303.5 l7.2,-12.8" stroke="#fff" stroke-opacity="0.43" stroke-width="0.9"/><path d="M593.6,300.3 l-3.1,-13.3" stroke="#fff" stroke-opacity="0.43" stroke-width="0.9"/><path d="M593.6,300.3 l7.4,-12.9" stroke="#fff" stroke-opacity="0.43" stroke-width="0.9"/><path d="M594.0,297.1 l-4.5,-18.9" stroke="#fff" stroke-opacity="0.44" stroke-width="0.9"/><path d="M594.0,297.1 l6.1,-10.6" stroke="#fff" stroke-opacity="0.44" stroke-width="0.9"/><path d="M594.4,293.9 l-4.3,-17.7" stroke="#fff" stroke-opacity="0.44" stroke-width="0.9"/><path d="M594.4,293.9 l8.6,-14.7" stroke="#fff" stroke-opacity="0.44" stroke-width="0.9"/><path d="M594.8,290.7 l-3.1,-12.6" stroke="#fff" stroke-opacity="0.45" stroke-width="0.9"/><path d="M594.8,290.7 l8.3,-14.1" stroke="#fff" stroke-opacity="0.45" stroke-width="0.9"/><path d="M595.2,287.5 l-4.9,-19.6" stroke="#fff" stroke-opacity="0.45" stroke-width="0.9"/><path d="M595.2,287.5 l9.7,-16.3" stroke="#fff" stroke-opacity="0.45" stroke-width="0.9"/><path d="M595.7,284.3 l-3.6,-13.9" stroke="#fff" stroke-opacity="0.46" stroke-width="0.9"/><path d="M595.7,284.3 l12.9,-21.4" stroke="#fff" stroke-opacity="0.46" stroke-width="0.9"/><path d="M596.1,281.1 l-6.0,-22.7" stroke="#fff" stroke-opacity="0.47" stroke-width="0.9"/><path d="M596.1,281.1 l13.3,-21.9" stroke="#fff" stroke-opacity="0.47" stroke-width="0.9"/><path d="M596.6,277.9 l-4.1,-15.2" stroke="#fff" stroke-opacity="0.47" stroke-width="0.9"/><path d="M596.6,277.9 l9.3,-15.1" stroke="#fff" stroke-opacity="0.47" stroke-width="0.9"/><path d="M597.1,274.7 l-4.1,-14.9" stroke="#fff" stroke-opacity="0.48" stroke-width="0.9"/><path d="M597.1,274.7 l13.1,-21.2" stroke="#fff" stroke-opacity="0.48" stroke-width="0.9"/><path d="M597.6,271.5 l-5.1,-18.3" stroke="#fff" stroke-opacity="0.48" stroke-width="0.9"/><path d="M597.6,271.5 l9.1,-14.5" stroke="#fff" stroke-opacity="0.48" stroke-width="0.9"/><path d="M598.1,268.3 l-5.9,-20.9" stroke="#fff" stroke-opacity="0.49" stroke-width="0.9"/><path d="M598.1,268.3 l15.2,-24.0" stroke="#fff" stroke-opacity="0.49" stroke-width="0.9"/><path d="M598.7,265.1 l-7.8,-27.0" stroke="#fff" stroke-opacity="0.49" stroke-width="0.9"/><path d="M598.7,265.1 l10.9,-17.0" stroke="#fff" stroke-opacity="0.49" stroke-width="0.9"/><path d="M599.2,261.9 l-5.4,-18.4" stroke="#fff" stroke-opacity="0.50" stroke-width="0.9"/><path d="M599.2,261.9 l16.6,-25.6" stroke="#fff" stroke-opacity="0.50" stroke-width="0.9"/><path d="M599.8,258.7 l-7.5,-25.1" stroke="#fff" stroke-opacity="0.50" stroke-width="0.9"/><path d="M599.8,258.7 l15.4,-23.6" stroke="#fff" stroke-opacity="0.50" stroke-width="0.9"/><path d="M600.4,255.6 l-5.7,-18.8" stroke="#fff" stroke-opacity="0.51" stroke-width="0.9"/><path d="M600.4,255.6 l10.5,-15.9" stroke="#fff" stroke-opacity="0.51" stroke-width="0.9"/><path d="M601.0,252.4 l-8.8,-28.6" stroke="#fff" stroke-opacity="0.52" stroke-width="0.9"/><path d="M601.0,252.4 l14.3,-21.4" stroke="#fff" stroke-opacity="0.52" stroke-width="0.9"/><path d="M601.6,249.2 l-6.2,-19.7" stroke="#fff" stroke-opacity="0.52" stroke-width="0.9"/><path d="M601.6,249.2 l19.6,-29.1" stroke="#fff" stroke-opacity="0.52" stroke-width="0.9"/><path d="M602.3,246.0 l-9.5,-29.6" stroke="#fff" stroke-opacity="0.53" stroke-width="0.9"/><path d="M602.3,246.0 l19.1,-28.1" stroke="#fff" stroke-opacity="0.53" stroke-width="0.9"/><path d="M602.9,242.9 l-6.9,-21.2" stroke="#fff" stroke-opacity="0.53" stroke-width="0.9"/><path d="M602.9,242.9 l20.5,-29.7" stroke="#fff" stroke-opacity="0.53" stroke-width="0.9"/><path d="M603.6,239.7 l-7.1,-21.6" stroke="#fff" stroke-opacity="0.54" stroke-width="0.9"/><path d="M603.6,239.7 l21.4,-30.7" stroke="#fff" stroke-opacity="0.54" stroke-width="0.9"/><path d="M604.3,236.5 l-9.8,-29.3" stroke="#fff" stroke-opacity="0.54" stroke-width="0.9"/><path d="M604.3,236.5 l16.5,-23.5" stroke="#fff" stroke-opacity="0.54" stroke-width="0.9"/><path d="M605.0,233.4 l-10.9,-32.0" stroke="#fff" stroke-opacity="0.55" stroke-width="0.9"/><path d="M605.0,233.4 l23.9,-33.6" stroke="#fff" stroke-opacity="0.55" stroke-width="0.9"/><path d="M605.8,230.2 l-9.5,-27.6" stroke="#fff" stroke-opacity="0.56" stroke-width="0.9"/><path d="M605.8,230.2 l15.4,-21.4" stroke="#fff" stroke-opacity="0.56" stroke-width="0.9"/><path d="M606.5,227.1 l-11.8,-33.6" stroke="#fff" stroke-opacity="0.56" stroke-width="0.9"/><path d="M606.5,227.1 l17.3,-23.9" stroke="#fff" stroke-opacity="0.56" stroke-width="0.9"/><path d="M607.3,223.9 l-9.3,-26.1" stroke="#fff" stroke-opacity="0.57" stroke-width="0.9"/><path d="M607.3,223.9 l17.0,-23.2" stroke="#fff" stroke-opacity="0.57" stroke-width="0.9"/><path d="M608.0,220.8 l-9.3,-25.6" stroke="#fff" stroke-opacity="0.57" stroke-width="0.9"/><path d="M608.0,220.8 l18.2,-24.6" stroke="#fff" stroke-opacity="0.57" stroke-width="0.9"/><path d="M608.8,217.6 l-11.8,-32.1" stroke="#fff" stroke-opacity="0.58" stroke-width="0.9"/><path d="M608.8,217.6 l20.3,-27.3" stroke="#fff" stroke-opacity="0.58" stroke-width="0.9"/><path d="M609.7,214.5 l-16.0,-43.0" stroke="#fff" stroke-opacity="0.58" stroke-width="0.9"/><path d="M609.7,214.5 l20.9,-27.7" stroke="#fff" stroke-opacity="0.58" stroke-width="0.9"/><path d="M610.5,211.3 l-14.5,-38.4" stroke="#fff" stroke-opacity="0.59" stroke-width="0.9"/><path d="M610.5,211.3 l20.0,-26.3" stroke="#fff" stroke-opacity="0.59" stroke-width="0.9"/><path d="M610.5,211.3 Q609.4,183.7 591.9,164.7" stroke="#fff" stroke-opacity="0.57" stroke-width="1" fill="none"/><path d="M610.5,211.3 Q609.7,184.2 593.3,165.0" stroke="#fff" stroke-opacity="0.57" stroke-width="1" fill="none"/><path d="M610.5,211.3 Q609.9,183.0 593.7,162.6" stroke="#fff" stroke-opacity="0.57" stroke-width="1" fill="none"/><path d="M610.5,211.3 Q610.1,183.2 594.9,162.6" stroke="#fff" stroke-opacity="0.57" stroke-width="1" fill="none"/><path d="M610.5,211.3 Q610.3,180.6 594.7,157.7" stroke="#fff" stroke-opacity="0.57" stroke-width="1" fill="none"/><path d="M610.5,211.3 Q610.6,180.6 596.0,157.5" stroke="#fff" stroke-opacity="0.57" stroke-width="1" fill="none"/><path d="M610.5,211.3 Q610.8,181.3 597.6,158.3" stroke="#fff" stroke-opacity="0.57" stroke-width="1" fill="none"/><path d="M610.5,211.3 Q611.1,180.0 598.3,155.7" stroke="#fff" stroke-opacity="0.57" stroke-width="1" fill="none"/><path d="M610.5,211.3 Q611.4,178.1 598.9,152.0" stroke="#fff" stroke-opacity="0.57" stroke-width="1" fill="none"/><path d="M610.5,211.3 Q611.6,180.4 601.0,155.8" stroke="#fff" stroke-opacity="0.57" stroke-width="1" fill="none"/><path d="M610.5,211.3 Q611.9,177.6 601.6,150.7" stroke="#fff" stroke-opacity="0.57" stroke-width="1" fill="none"/><path d="M610.5,211.3 Q612.2,178.5 603.2,152.1" stroke="#fff" stroke-opacity="0.57" stroke-width="1" fill="none"/><path d="M610.5,211.3 Q612.5,178.0 604.4,150.9" stroke="#fff" stroke-opacity="0.57" stroke-width="1" fill="none"/><path d="M610.5,211.3 Q612.8,176.5 605.6,148.0" stroke="#fff" stroke-opacity="0.57" stroke-width="1" fill="none"/><path d="M610.5,211.3 Q613.0,177.7 607.2,150.1" stroke="#fff" stroke-opacity="0.57" stroke-width="1" fill="none"/><path d="M610.5,211.3 Q613.4,177.0 608.6,148.7" stroke="#fff" stroke-opacity="0.57" stroke-width="1" fill="none"/><path d="M610.5,211.3 Q613.7,176.1 610.1,147.0" stroke="#fff" stroke-opacity="0.57" stroke-width="1" fill="none"/><path d="M610.5,211.3 Q614.1,174.8 611.6,144.6" stroke="#fff" stroke-opacity="0.57" stroke-width="1" fill="none"/><path d="M610.5,211.3 Q614.2,176.8 613.0,148.3" stroke="#fff" stroke-opacity="0.57" stroke-width="1" fill="none"/><path d="M610.5,211.3 Q614.7,174.9 614.7,144.8" stroke="#fff" stroke-opacity="0.57" stroke-width="1" fill="none"/><path d="M610.5,211.3 Q615.0,175.2 616.2,145.4" stroke="#fff" stroke-opacity="0.57" stroke-width="1" fill="none"/><path d="M610.5,211.3 Q615.3,175.3 617.7,145.7" stroke="#fff" stroke-opacity="0.57" stroke-width="1" fill="none"/><path d="M610.5,211.3 Q615.5,176.1 619.1,147.2" stroke="#fff" stroke-opacity="0.57" stroke-width="1" fill="none"/><path d="M610.5,211.3 Q615.7,176.3 620.5,147.8" stroke="#fff" stroke-opacity="0.57" stroke-width="1" fill="none"/><path d="M610.5,211.3 Q615.8,177.5 621.6,150.1" stroke="#fff" stroke-opacity="0.57" stroke-width="1" fill="none"/><path d="M610.5,211.3 Q616.1,177.5 623.1,150.2" stroke="#fff" stroke-opacity="0.57" stroke-width="1" fill="none"/><path d="M610.5,211.3 Q616.3,177.9 624.3,151.2" stroke="#fff" stroke-opacity="0.57" stroke-width="1" fill="none"/><path d="M610.5,211.3 Q617.0,175.8 626.7,147.7" stroke="#fff" stroke-opacity="0.57" stroke-width="1" fill="none"/><path d="M610.5,211.3 Q616.9,177.8 627.2,151.6" stroke="#fff" stroke-opacity="0.57" stroke-width="1" fill="none"/><path d="M610.5,211.3 Q617.1,178.4 628.3,153.0" stroke="#fff" stroke-opacity="0.57" stroke-width="1" fill="none"/><path d="M610.5,211.3 Q617.2,179.0 629.3,154.4" stroke="#fff" stroke-opacity="0.57" stroke-width="1" fill="none"/><path d="M610.5,211.3 Q618.0,176.8 632.0,150.9" stroke="#fff" stroke-opacity="0.57" stroke-width="1" fill="none"/><path d="M610.5,211.3 Q618.2,177.1 633.3,151.8" stroke="#fff" stroke-opacity="0.57" stroke-width="1" fill="none"/><path d="M610.5,211.3 Q618.2,178.2 633.9,154.1" stroke="#fff" stroke-opacity="0.57" stroke-width="1" fill="none"/><path d="M610.5,211.3 Q618.1,179.9 634.0,157.5" stroke="#fff" stroke-opacity="0.57" stroke-width="1" fill="none"/><path d="M610.5,211.3 Q618.2,180.5 634.9,158.9" stroke="#fff" stroke-opacity="0.57" stroke-width="1" fill="none"/><path d="M610.5,211.3 Q618.4,180.7 635.9,159.8" stroke="#fff" stroke-opacity="0.57" stroke-width="1" fill="none"/><path d="M610.5,211.3 Q618.7,180.7 637.2,160.2" stroke="#fff" stroke-opacity="0.57" stroke-width="1" fill="none"/><path d="M610.5,211.3 Q618.6,182.1 637.2,163.1" stroke="#fff" stroke-opacity="0.57" stroke-width="1" fill="none"/><path d="M610.5,211.3 Q619.0,181.7 638.7,162.9" stroke="#fff" stroke-opacity="0.57" stroke-width="1" fill="none"/><path d="M610.5,211.3 Q618.9,182.7 638.9,165.2" stroke="#fff" stroke-opacity="0.57" stroke-width="1" fill="none"/><path d="M610.5,211.3 Q619.6,181.2 641.6,163.3" stroke="#fff" stroke-opacity="0.57" stroke-width="1" fill="none"/><path d="M610.5,211.3 Q619.7,181.8 642.2,164.8" stroke="#fff" stroke-opacity="0.57" stroke-width="1" fill="none"/><path d="M610.5,211.3 Q619.4,183.5 641.4,168.2" stroke="#fff" stroke-opacity="0.57" stroke-width="1" fill="none"/><path d="M610.5,211.3 Q619.2,184.9 640.9,170.9" stroke="#fff" stroke-opacity="0.57" stroke-width="1" fill="none"/><path d="M610.5,211.3 Q619.9,183.5 643.6,169.4" stroke="#fff" stroke-opacity="0.57" stroke-width="1" fill="none"/><path d="M610.5,211.3 L591.9,164.7 L593.3,165.0 L593.7,162.6 L594.9,162.6 L594.7,157.7 L596.0,157.5 L597.6,158.3 L598.3,155.7 L598.9,152.0 L601.0,155.8 L601.6,150.7 L603.2,152.1 L604.4,150.9 L605.6,148.0 L607.2,150.1 L608.6,148.7 L610.1,147.0 L611.6,144.6 L613.0,148.3 L614.7,144.8 L616.2,145.4 L617.7,145.7 L619.1,147.2 L620.5,147.8 L621.6,150.1 L623.1,150.2 L624.3,151.2 L626.7,147.7 L627.2,151.6 L628.3,153.0 L629.3,154.4 L632.0,150.9 L633.3,151.8 L633.9,154.1 L634.0,157.5 L634.9,158.9 L635.9,159.8 L637.2,160.2 L637.2,163.1 L638.7,162.9 L638.9,165.2 L641.6,163.3 L642.2,164.8 L641.4,168.2 L640.9,170.9 L643.6,169.4Z" fill="#fff" fill-opacity="0.59" filter="url(#b1)"/><ellipse cx="616.2" cy="172.1" rx="20.5" ry="17.2" transform="rotate(8.3 616.2 172.1)" fill="#fff" fill-opacity="0.81" filter="url(#b2)"/><path d="M594.0,350.0 Q613.5,283.4 647.8,223.1" stroke="#fff" stroke-opacity="0.9" stroke-width="2.0" fill="none"/><path d="M591.0,349.3 Q606.1,281.6 639.8,221.2" stroke="#fff" stroke-opacity="0.45" stroke-width="0.9" fill="none"/><path d="M593.8,350.0 Q613.2,283.5 647.4,223.1" stroke="#fff" stroke-opacity="0.45" stroke-width="0.9" fill="none"/><path d="M592.2,350.0 Q609.1,283.5 643.0,223.2" stroke="#fff" stroke-opacity="0.45" stroke-width="0.9" fill="none"/><path d="M591.0,348.6 Q606.1,279.9 639.9,219.3" stroke="#fff" stroke-opacity="0.45" stroke-width="0.9" fill="none"/><path d="M596.7,341.0 l0.9,-9.9" stroke="#fff" stroke-opacity="0.36" stroke-width="0.9"/><path d="M596.7,341.0 l8.1,-9.3" stroke="#fff" stroke-opacity="0.36" stroke-width="0.9"/><path d="M597.7,337.9 l0.8,-9.6" stroke="#fff" stroke-opacity="0.36" stroke-width="0.9"/><path d="M597.7,337.9 l6.2,-7.1" stroke="#fff" stroke-opacity="0.36" stroke-width="0.9"/><path d="M598.6,334.9 l0.9,-11.8" stroke="#fff" stroke-opacity="0.37" stroke-width="0.9"/><path d="M598.6,334.9 l7.4,-8.4" stroke="#fff" stroke-opacity="0.37" stroke-width="0.9"/><path d="M599.6,332.0 l1.1,-14.2" stroke="#fff" stroke-opacity="0.37" stroke-width="0.9"/><path d="M599.6,332.0 l9.1,-10.3" stroke="#fff" stroke-opacity="0.37" stroke-width="0.9"/><path d="M600.6,329.0 l1.1,-15.7" stroke="#fff" stroke-opacity="0.38" stroke-width="0.9"/><path d="M600.6,329.0 l10.0,-11.2" stroke="#fff" stroke-opacity="0.38" stroke-width="0.9"/><path d="M601.6,326.0 l1.0,-15.7" stroke="#fff" stroke-opacity="0.39" stroke-width="0.9"/><path d="M601.6,326.0 l11.5,-12.7" stroke="#fff" stroke-opacity="0.39" stroke-width="0.9"/><path d="M602.6,323.0 l0.8,-13.2" stroke="#fff" stroke-opacity="0.39" stroke-width="0.9"/><path d="M602.6,323.0 l8.6,-9.4" stroke="#fff" stroke-opacity="0.39" stroke-width="0.9"/><path d="M603.6,320.1 l1.1,-18.6" stroke="#fff" stroke-opacity="0.40" stroke-width="0.9"/><path d="M603.6,320.1 l7.7,-8.4" stroke="#fff" stroke-opacity="0.40" stroke-width="0.9"/><path d="M604.7,317.1 l0.9,-16.7" stroke="#fff" stroke-opacity="0.40" stroke-width="0.9"/><path d="M604.7,317.1 l10.9,-11.7" stroke="#fff" stroke-opacity="0.40" stroke-width="0.9"/><path d="M605.8,314.1 l0.5,-10.9" stroke="#fff" stroke-opacity="0.41" stroke-width="0.9"/><path d="M605.8,314.1 l12.4,-13.2" stroke="#fff" stroke-opacity="0.41" stroke-width="0.9"/><path d="M606.8,311.2 l0.8,-19.1" stroke="#fff" stroke-opacity="0.41" stroke-width="0.9"/><path d="M606.8,311.2 l11.4,-12.1" stroke="#fff" stroke-opacity="0.41" stroke-width="0.9"/><path d="M607.9,308.3 l0.7,-18.0" stroke="#fff" stroke-opacity="0.42" stroke-width="0.9"/><path d="M607.9,308.3 l13.0,-13.6" stroke="#fff" stroke-opacity="0.42" stroke-width="0.9"/><path d="M609.0,305.3 l0.4,-12.7" stroke="#fff" stroke-opacity="0.43" stroke-width="0.9"/><path d="M609.0,305.3 l11.5,-11.8" stroke="#fff" stroke-opacity="0.43" stroke-width="0.9"/><path d="M610.2,302.4 l0.5,-16.7" stroke="#fff" stroke-opacity="0.43" stroke-width="0.9"/><path d="M610.2,302.4 l14.0,-14.3" stroke="#fff" stroke-opacity="0.43" stroke-width="0.9"/><path d="M611.3,299.5 l0.5,-20.3" stroke="#fff" stroke-opacity="0.44" stroke-width="0.9"/><path d="M611.3,299.5 l14.4,-14.6" stroke="#fff" stroke-opacity="0.44" stroke-width="0.9"/><path d="M612.5,296.6 l0.3,-18.6" stroke="#fff" stroke-opacity="0.44" stroke-width="0.9"/><path d="M612.5,296.6 l15.4,-15.5" stroke="#fff" stroke-opacity="0.44" stroke-width="0.9"/><path d="M613.6,293.7 l0.3,-20.2" stroke="#fff" stroke-opacity="0.45" stroke-width="0.9"/><path d="M613.6,293.7 l14.4,-14.3" stroke="#fff" stroke-opacity="0.45" stroke-width="0.9"/><path d="M614.8,290.8 l0.1,-15.7" stroke="#fff" stroke-opacity="0.45" stroke-width="0.9"/><path d="M614.8,290.8 l9.6,-9.5" stroke="#fff" stroke-opacity="0.45" stroke-width="0.9"/><path d="M616.0,287.9 l0.1,-15.1" stroke="#fff" stroke-opacity="0.46" stroke-width="0.9"/><path d="M616.0,287.9 l12.7,-12.4" stroke="#fff" stroke-opacity="0.46" stroke-width="0.9"/><path d="M617.2,285.0 l-0.0,-15.3" stroke="#fff" stroke-opacity="0.47" stroke-width="0.9"/><path d="M617.2,285.0 l17.3,-16.7" stroke="#fff" stroke-opacity="0.47" stroke-width="0.9"/><path d="M618.5,282.1 l-0.1,-21.4" stroke="#fff" stroke-opacity="0.47" stroke-width="0.9"/><path d="M618.5,282.1 l16.1,-15.4" stroke="#fff" stroke-opacity="0.47" stroke-width="0.9"/><path d="M619.7,279.2 l-0.2,-22.9" stroke="#fff" stroke-opacity="0.48" stroke-width="0.9"/><path d="M619.7,279.2 l17.2,-16.3" stroke="#fff" stroke-opacity="0.48" stroke-width="0.9"/><path d="M621.0,276.4 l-0.3,-21.9" stroke="#fff" stroke-opacity="0.48" stroke-width="0.9"/><path d="M621.0,276.4 l11.3,-10.6" stroke="#fff" stroke-opacity="0.48" stroke-width="0.9"/><path d="M622.2,273.5 l-0.5,-26.8" stroke="#fff" stroke-opacity="0.49" stroke-width="0.9"/><path d="M622.2,273.5 l19.2,-17.8" stroke="#fff" stroke-opacity="0.49" stroke-width="0.9"/><path d="M623.5,270.6 l-0.6,-23.6" stroke="#fff" stroke-opacity="0.49" stroke-width="0.9"/><path d="M623.5,270.6 l17.7,-16.3" stroke="#fff" stroke-opacity="0.49" stroke-width="0.9"/><path d="M624.8,267.8 l-0.8,-26.7" stroke="#fff" stroke-opacity="0.50" stroke-width="0.9"/><path d="M624.8,267.8 l13.3,-12.1" stroke="#fff" stroke-opacity="0.50" stroke-width="0.9"/><path d="M626.2,264.9 l-1.0,-28.7" stroke="#fff" stroke-opacity="0.50" stroke-width="0.9"/><path d="M626.2,264.9 l15.9,-14.4" stroke="#fff" stroke-opacity="0.50" stroke-width="0.9"/><path d="M627.5,262.1 l-0.7,-19.4" stroke="#fff" stroke-opacity="0.51" stroke-width="0.9"/><path d="M627.5,262.1 l16.7,-14.9" stroke="#fff" stroke-opacity="0.51" stroke-width="0.9"/><path d="M628.8,259.3 l-1.3,-30.6" stroke="#fff" stroke-opacity="0.52" stroke-width="0.9"/><path d="M628.8,259.3 l16.6,-14.7" stroke="#fff" stroke-opacity="0.52" stroke-width="0.9"/><path d="M630.2,256.5 l-1.5,-31.8" stroke="#fff" stroke-opacity="0.52" stroke-width="0.9"/><path d="M630.2,256.5 l26.9,-23.6" stroke="#fff" stroke-opacity="0.52" stroke-width="0.9"/><path d="M631.6,253.6 l-1.5,-28.6" stroke="#fff" stroke-opacity="0.53" stroke-width="0.9"/><path d="M631.6,253.6 l20.2,-17.5" stroke="#fff" stroke-opacity="0.53" stroke-width="0.9"/><path d="M633.0,250.8 l-1.7,-29.3" stroke="#fff" stroke-opacity="0.53" stroke-width="0.9"/><path d="M633.0,250.8 l25.0,-21.5" stroke="#fff" stroke-opacity="0.53" stroke-width="0.9"/><path d="M634.4,248.0 l-2.2,-35.6" stroke="#fff" stroke-opacity="0.54" stroke-width="0.9"/><path d="M634.4,248.0 l25.0,-21.3" stroke="#fff" stroke-opacity="0.54" stroke-width="0.9"/><path d="M635.8,245.2 l-2.3,-34.4" stroke="#fff" stroke-opacity="0.54" stroke-width="0.9"/><path d="M635.8,245.2 l18.1,-15.3" stroke="#fff" stroke-opacity="0.54" stroke-width="0.9"/><path d="M637.3,242.4 l-1.9,-25.8" stroke="#fff" stroke-opacity="0.55" stroke-width="0.9"/><path d="M637.3,242.4 l21.4,-17.9" stroke="#fff" stroke-opacity="0.55" stroke-width="0.9"/><path d="M638.7,239.7 l-3.0,-38.7" stroke="#fff" stroke-opacity="0.56" stroke-width="0.9"/><path d="M638.7,239.7 l23.0,-19.1" stroke="#fff" stroke-opacity="0.56" stroke-width="0.9"/><path d="M640.2,236.9 l-3.0,-36.3" stroke="#fff" stroke-opacity="0.56" stroke-width="0.9"/><path d="M640.2,236.9 l19.1,-15.7" stroke="#fff" stroke-opacity="0.56" stroke-width="0.9"/><path d="M641.7,234.1 l-2.3,-26.5" stroke="#fff" stroke-opacity="0.57" stroke-width="0.9"/><path d="M641.7,234.1 l24.1,-19.6" stroke="#fff" stroke-opacity="0.57" stroke-width="0.9"/><path d="M643.2,231.3 l-3.7,-41.0" stroke="#fff" stroke-opacity="0.57" stroke-width="0.9"/><path d="M643.2,231.3 l32.4,-26.1" stroke="#fff" stroke-opacity="0.57" stroke-width="0.9"/><path d="M644.7,228.6 l-4.1,-42.4" stroke="#fff" stroke-opacity="0.58" stroke-width="0.9"/><path d="M644.7,228.6 l26.3,-21.0" stroke="#fff" stroke-opacity="0.58" stroke-width="0.9"/><path d="M646.3,225.8 l-4.0,-39.9" stroke="#fff" stroke-opacity="0.58" stroke-width="0.9"/><path d="M646.3,225.8 l30.5,-24.1" stroke="#fff" stroke-opacity="0.58" stroke-width="0.9"/><path d="M647.8,223.1 l-4.2,-39.9" stroke="#fff" stroke-opacity="0.59" stroke-width="0.9"/><path d="M647.8,223.1 l24.9,-19.5" stroke="#fff" stroke-opacity="0.59" stroke-width="0.9"/><path d="M647.8,223.1 Q654.0,196.4 643.4,173.5" stroke="#fff" stroke-opacity="0.57" stroke-width="1" fill="none"/><path d="M647.8,223.1 Q653.9,197.8 644.8,175.8" stroke="#fff" stroke-opacity="0.57" stroke-width="1" fill="none"/><path d="M647.8,223.1 Q654.8,195.3 645.7,171.0" stroke="#fff" stroke-opacity="0.57" stroke-width="1" fill="none"/><path d="M647.8,223.1 Q655.1,194.9 646.9,170.2" stroke="#fff" stroke-opacity="0.57" stroke-width="1" fill="none"/><path d="M647.8,223.1 Q654.8,197.0 648.1,174.1" stroke="#fff" stroke-opacity="0.57" stroke-width="1" fill="none"/><path d="M647.8,223.1 Q655.5,195.4 649.3,170.9" stroke="#fff" stroke-opacity="0.57" stroke-width="1" fill="none"/><path d="M647.8,223.1 Q656.1,194.0 650.7,168.2" stroke="#fff" stroke-opacity="0.57" stroke-width="1" fill="none"/><path d="M647.8,223.1 Q656.6,193.2 652.1,166.7" stroke="#fff" stroke-opacity="0.57" stroke-width="1" fill="none"/><path d="M647.8,223.1 Q656.5,194.4 653.2,168.8" stroke="#fff" stroke-opacity="0.57" stroke-width="1" fill="none"/><path d="M647.8,223.1 Q656.7,194.6 654.4,169.2" stroke="#fff" stroke-opacity="0.57" stroke-width="1" fill="none"/><path d="M647.8,223.1 Q657.0,194.5 655.7,169.0" stroke="#fff" stroke-opacity="0.57" stroke-width="1" fill="none"/><path d="M647.8,223.1 Q658.1,192.0 657.8,164.4" stroke="#fff" stroke-opacity="0.57" stroke-width="1" fill="none"/><path d="M647.8,223.1 Q657.7,194.0 658.4,168.2" stroke="#fff" stroke-opacity="0.57" stroke-width="1" fill="none"/><path d="M647.8,223.1 Q658.4,192.6 660.3,165.7" stroke="#fff" stroke-opacity="0.57" stroke-width="1" fill="none"/><path d="M647.8,223.1 Q658.3,193.7 661.2,168.0" stroke="#fff" stroke-opacity="0.57" stroke-width="1" fill="none"/><path d="M647.8,223.1 Q659.1,192.4 663.2,165.6" stroke="#fff" stroke-opacity="0.57" stroke-width="1" fill="none"/><path d="M647.8,223.1 Q659.9,190.9 665.4,163.1" stroke="#fff" stroke-opacity="0.57" stroke-width="1" fill="none"/><path d="M647.8,223.1 Q659.3,193.3 665.4,167.8" stroke="#fff" stroke-opacity="0.57" stroke-width="1" fill="none"/><path d="M647.8,223.1 Q660.5,191.1 668.2,163.9" stroke="#fff" stroke-opacity="0.57" stroke-width="1" fill="none"/><path d="M647.8,223.1 Q660.4,192.0 669.0,165.8" stroke="#fff" stroke-opacity="0.57" stroke-width="1" fill="none"/><path d="M647.8,223.1 Q661.2,190.8 671.3,163.9" stroke="#fff" stroke-opacity="0.57" stroke-width="1" fill="none"/><path d="M647.8,223.1 Q661.2,191.4 672.3,165.4" stroke="#fff" stroke-opacity="0.57" stroke-width="1" fill="none"/><path d="M647.8,223.1 Q660.8,193.0 672.3,168.8" stroke="#fff" stroke-opacity="0.57" stroke-width="1" fill="none"/><path d="M647.8,223.1 Q661.9,191.2 675.2,165.9" stroke="#fff" stroke-opacity="0.57" stroke-width="1" fill="none"/><path d="M647.8,223.1 Q661.5,192.7 675.3,169.1" stroke="#fff" stroke-opacity="0.57" stroke-width="1" fill="none"/><path d="M647.8,223.1 Q661.1,194.5 675.0,172.6" stroke="#fff" stroke-opacity="0.57" stroke-width="1" fill="none"/><path d="M647.8,223.1 Q661.2,194.8 675.9,173.7" stroke="#fff" stroke-opacity="0.57" stroke-width="1" fill="none"/><path d="M647.8,223.1 Q662.0,193.7 678.3,172.3" stroke="#fff" stroke-opacity="0.57" stroke-width="1" fill="none"/><path d="M647.8,223.1 Q662.0,194.2 679.1,173.6" stroke="#fff" stroke-opacity="0.57" stroke-width="1" fill="none"/><path d="M647.8,223.1 Q661.9,195.1 679.4,175.6" stroke="#fff" stroke-opacity="0.57" stroke-width="1" fill="none"/><path d="M647.8,223.1 Q661.7,195.9 679.6,177.6" stroke="#fff" stroke-opacity="0.57" stroke-width="1" fill="none"/><path d="M647.8,223.1 Q662.1,195.8 681.0,177.9" stroke="#fff" stroke-opacity="0.57" stroke-width="1" fill="none"/><path d="M647.8,223.1 Q662.1,196.3 681.5,179.4" stroke="#fff" stroke-opacity="0.57" stroke-width="1" fill="none"/><path d="M647.8,223.1 Q662.9,195.3 683.9,178.4" stroke="#fff" stroke-opacity="0.57" stroke-width="1" fill="none"/><path d="M647.8,223.1 Q661.7,198.1 681.5,183.4" stroke="#fff" stroke-opacity="0.57" stroke-width="1" fill="none"/><path d="M647.8,223.1 Q662.8,196.6 684.6,181.7" stroke="#fff" stroke-opacity="0.57" stroke-width="1" fill="none"/><path d="M647.8,223.1 Q662.9,196.9 685.3,182.8" stroke="#fff" stroke-opacity="0.57" stroke-width="1" fill="none"/><path d="M647.8,223.1 Q661.8,199.2 683.0,187.0" stroke="#fff" stroke-opacity="0.57" stroke-width="1" fill="none"/><path d="M647.8,223.1 Q663.0,197.7 686.2,185.5" stroke="#fff" stroke-opacity="0.57" stroke-width="1" fill="none"/><path d="M647.8,223.1 Q662.6,198.8 685.6,187.8" stroke="#fff" stroke-opacity="0.57" stroke-width="1" fill="none"/><path d="M647.8,223.1 Q662.8,198.9 686.5,188.6" stroke="#fff" stroke-opacity="0.57" stroke-width="1" fill="none"/><path d="M647.8,223.1 Q661.9,200.9 684.2,192.1" stroke="#fff" stroke-opacity="0.57" stroke-width="1" fill="none"/><path d="M647.8,223.1 Q661.9,201.2 684.5,193.3" stroke="#fff" stroke-opacity="0.57" stroke-width="1" fill="none"/><path d="M647.8,223.1 L643.4,173.5 L644.8,175.8 L645.7,171.0 L646.9,170.2 L648.1,174.1 L649.3,170.9 L650.7,168.2 L652.1,166.7 L653.2,168.8 L654.4,169.2 L655.7,169.0 L657.8,164.4 L658.4,168.2 L660.3,165.7 L661.2,168.0 L663.2,165.6 L665.4,163.1 L665.4,167.8 L668.2,163.9 L669.0,165.8 L671.3,163.9 L672.3,165.4 L672.3,168.8 L675.2,165.9 L675.3,169.1 L675.0,172.6 L675.9,173.7 L678.3,172.3 L679.1,173.6 L679.4,175.6 L679.6,177.6 L681.0,177.9 L681.5,179.4 L683.9,178.4 L681.5,183.4 L684.6,181.7 L685.3,182.8 L683.0,187.0 L686.2,185.5 L685.6,187.8 L686.5,188.6 L684.2,192.1 L684.5,193.3Z" fill="#fff" fill-opacity="0.59" filter="url(#b1)"/><ellipse cx="662.3" cy="188.8" rx="18.0" ry="16.1" transform="rotate(23.0 662.3 188.8)" fill="#fff" fill-opacity="0.81" filter="url(#b2)"/><path d="M600.0,350.0 Q645.2,298.1 701.8,259.0" stroke="#fff" stroke-opacity="0.9" stroke-width="2.0" fill="none"/><path d="M600.5,349.2 Q646.5,296.0 703.3,256.7" stroke="#fff" stroke-opacity="0.45" stroke-width="0.9" fill="none"/><path d="M599.6,348.7 Q644.1,294.7 700.7,255.4" stroke="#fff" stroke-opacity="0.45" stroke-width="0.9" fill="none"/><path d="M597.3,347.6 Q638.4,292.1 694.6,252.6" stroke="#fff" stroke-opacity="0.45" stroke-width="0.9" fill="none"/><path d="M602.0,348.7 Q650.2,294.9 707.2,255.5" stroke="#fff" stroke-opacity="0.45" stroke-width="0.9" fill="none"/><path d="M606.2,343.0 l8.4,-14.3" stroke="#fff" stroke-opacity="0.36" stroke-width="0.9"/><path d="M606.2,343.0 l10.2,-4.5" stroke="#fff" stroke-opacity="0.36" stroke-width="0.9"/><path d="M608.3,340.7 l5.7,-9.8" stroke="#fff" stroke-opacity="0.36" stroke-width="0.9"/><path d="M608.3,340.7 l12.2,-5.4" stroke="#fff" stroke-opacity="0.36" stroke-width="0.9"/><path d="M610.4,338.4 l5.4,-9.4" stroke="#fff" stroke-opacity="0.37" stroke-width="0.9"/><path d="M610.4,338.4 l11.3,-4.9" stroke="#fff" stroke-opacity="0.37" stroke-width="0.9"/><path d="M612.5,336.1 l8.5,-15.0" stroke="#fff" stroke-opacity="0.37" stroke-width="0.9"/><path d="M612.5,336.1 l15.3,-6.5" stroke="#fff" stroke-opacity="0.37" stroke-width="0.9"/><path d="M614.7,333.8 l8.0,-14.2" stroke="#fff" stroke-opacity="0.38" stroke-width="0.9"/><path d="M614.7,333.8 l13.6,-5.7" stroke="#fff" stroke-opacity="0.38" stroke-width="0.9"/><path d="M616.8,331.5 l8.4,-15.2" stroke="#fff" stroke-opacity="0.39" stroke-width="0.9"/><path d="M616.8,331.5 l16.3,-6.8" stroke="#fff" stroke-opacity="0.39" stroke-width="0.9"/><path d="M619.0,329.3 l7.0,-12.8" stroke="#fff" stroke-opacity="0.39" stroke-width="0.9"/><path d="M619.0,329.3 l14.8,-6.1" stroke="#fff" stroke-opacity="0.39" stroke-width="0.9"/><path d="M621.1,327.1 l5.0,-9.3" stroke="#fff" stroke-opacity="0.40" stroke-width="0.9"/><path d="M621.1,327.1 l15.3,-6.2" stroke="#fff" stroke-opacity="0.40" stroke-width="0.9"/><path d="M623.3,324.8 l6.8,-12.6" stroke="#fff" stroke-opacity="0.40" stroke-width="0.9"/><path d="M623.3,324.8 l15.8,-6.3" stroke="#fff" stroke-opacity="0.40" stroke-width="0.9"/><path d="M625.5,322.6 l7.7,-14.5" stroke="#fff" stroke-opacity="0.41" stroke-width="0.9"/><path d="M625.5,322.6 l12.2,-4.8" stroke="#fff" stroke-opacity="0.41" stroke-width="0.9"/><path d="M627.7,320.4 l5.2,-10.0" stroke="#fff" stroke-opacity="0.41" stroke-width="0.9"/><path d="M627.7,320.4 l18.1,-7.0" stroke="#fff" stroke-opacity="0.41" stroke-width="0.9"/><path d="M629.9,318.3 l5.7,-10.9" stroke="#fff" stroke-opacity="0.42" stroke-width="0.9"/><path d="M629.9,318.3 l14.5,-5.6" stroke="#fff" stroke-opacity="0.42" stroke-width="0.9"/><path d="M632.1,316.1 l6.7,-13.1" stroke="#fff" stroke-opacity="0.43" stroke-width="0.9"/><path d="M632.1,316.1 l13.4,-5.0" stroke="#fff" stroke-opacity="0.43" stroke-width="0.9"/><path d="M634.4,313.9 l8.6,-17.0" stroke="#fff" stroke-opacity="0.43" stroke-width="0.9"/><path d="M634.4,313.9 l20.1,-7.5" stroke="#fff" stroke-opacity="0.43" stroke-width="0.9"/><path d="M636.6,311.8 l6.6,-13.2" stroke="#fff" stroke-opacity="0.44" stroke-width="0.9"/><path d="M636.6,311.8 l17.6,-6.5" stroke="#fff" stroke-opacity="0.44" stroke-width="0.9"/><path d="M638.9,309.7 l6.9,-14.0" stroke="#fff" stroke-opacity="0.44" stroke-width="0.9"/><path d="M638.9,309.7 l17.2,-6.2" stroke="#fff" stroke-opacity="0.44" stroke-width="0.9"/><path d="M641.2,307.6 l7.5,-15.3" stroke="#fff" stroke-opacity="0.45" stroke-width="0.9"/><path d="M641.2,307.6 l13.7,-4.9" stroke="#fff" stroke-opacity="0.45" stroke-width="0.9"/><path d="M643.5,305.5 l6.5,-13.5" stroke="#fff" stroke-opacity="0.45" stroke-width="0.9"/><path d="M643.5,305.5 l14.6,-5.1" stroke="#fff" stroke-opacity="0.45" stroke-width="0.9"/><path d="M645.8,303.4 l10.4,-21.8" stroke="#fff" stroke-opacity="0.46" stroke-width="0.9"/><path d="M645.8,303.4 l18.3,-6.3" stroke="#fff" stroke-opacity="0.46" stroke-width="0.9"/><path d="M648.1,301.3 l7.1,-15.1" stroke="#fff" stroke-opacity="0.47" stroke-width="0.9"/><path d="M648.1,301.3 l23.5,-8.0" stroke="#fff" stroke-opacity="0.47" stroke-width="0.9"/><path d="M650.4,299.2 l11.3,-24.3" stroke="#fff" stroke-opacity="0.47" stroke-width="0.9"/><path d="M650.4,299.2 l19.0,-6.4" stroke="#fff" stroke-opacity="0.47" stroke-width="0.9"/><path d="M652.7,297.2 l7.0,-15.2" stroke="#fff" stroke-opacity="0.48" stroke-width="0.9"/><path d="M652.7,297.2 l16.5,-5.4" stroke="#fff" stroke-opacity="0.48" stroke-width="0.9"/><path d="M655.1,295.1 l6.9,-15.1" stroke="#fff" stroke-opacity="0.48" stroke-width="0.9"/><path d="M655.1,295.1 l19.0,-6.2" stroke="#fff" stroke-opacity="0.48" stroke-width="0.9"/><path d="M657.4,293.1 l7.0,-15.7" stroke="#fff" stroke-opacity="0.49" stroke-width="0.9"/><path d="M657.4,293.1 l18.3,-5.8" stroke="#fff" stroke-opacity="0.49" stroke-width="0.9"/><path d="M659.8,291.1 l8.1,-18.4" stroke="#fff" stroke-opacity="0.49" stroke-width="0.9"/><path d="M659.8,291.1 l23.4,-7.3" stroke="#fff" stroke-opacity="0.49" stroke-width="0.9"/><path d="M662.2,289.1 l12.0,-27.5" stroke="#fff" stroke-opacity="0.50" stroke-width="0.9"/><path d="M662.2,289.1 l26.7,-8.3" stroke="#fff" stroke-opacity="0.50" stroke-width="0.9"/><path d="M664.6,287.1 l9.4,-21.9" stroke="#fff" stroke-opacity="0.50" stroke-width="0.9"/><path d="M664.6,287.1 l22.8,-6.9" stroke="#fff" stroke-opacity="0.50" stroke-width="0.9"/><path d="M667.0,285.2 l10.3,-24.3" stroke="#fff" stroke-opacity="0.51" stroke-width="0.9"/><path d="M667.0,285.2 l23.1,-6.9" stroke="#fff" stroke-opacity="0.51" stroke-width="0.9"/><path d="M669.4,283.2 l9.4,-22.4" stroke="#fff" stroke-opacity="0.52" stroke-width="0.9"/><path d="M669.4,283.2 l19.0,-5.6" stroke="#fff" stroke-opacity="0.52" stroke-width="0.9"/><path d="M671.8,281.3 l9.2,-22.3" stroke="#fff" stroke-opacity="0.52" stroke-width="0.9"/><path d="M671.8,281.3 l34.2,-9.9" stroke="#fff" stroke-opacity="0.52" stroke-width="0.9"/><path d="M674.2,279.3 l8.4,-20.6" stroke="#fff" stroke-opacity="0.53" stroke-width="0.9"/><path d="M674.2,279.3 l27.7,-7.8" stroke="#fff" stroke-opacity="0.53" stroke-width="0.9"/><path d="M676.7,277.4 l12.0,-29.7" stroke="#fff" stroke-opacity="0.53" stroke-width="0.9"/><path d="M676.7,277.4 l34.9,-9.7" stroke="#fff" stroke-opacity="0.53" stroke-width="0.9"/><path d="M679.1,275.5 l9.4,-23.7" stroke="#fff" stroke-opacity="0.54" stroke-width="0.9"/><path d="M679.1,275.5 l25.6,-7.0" stroke="#fff" stroke-opacity="0.54" stroke-width="0.9"/><path d="M681.6,273.6 l9.8,-25.1" stroke="#fff" stroke-opacity="0.54" stroke-width="0.9"/><path d="M681.6,273.6 l28.8,-7.7" stroke="#fff" stroke-opacity="0.54" stroke-width="0.9"/><path d="M684.1,271.7 l11.4,-29.6" stroke="#fff" stroke-opacity="0.55" stroke-width="0.9"/><path d="M684.1,271.7 l40.4,-10.6" stroke="#fff" stroke-opacity="0.55" stroke-width="0.9"/><path d="M686.6,269.9 l14.6,-38.3" stroke="#fff" stroke-opacity="0.56" stroke-width="0.9"/><path d="M686.6,269.9 l40.2,-10.3" stroke="#fff" stroke-opacity="0.56" stroke-width="0.9"/><path d="M689.1,268.0 l8.8,-23.4" stroke="#fff" stroke-opacity="0.56" stroke-width="0.9"/><path d="M689.1,268.0 l24.4,-6.2" stroke="#fff" stroke-opacity="0.56" stroke-width="0.9"/><path d="M691.6,266.2 l14.1,-38.2" stroke="#fff" stroke-opacity="0.57" stroke-width="0.9"/><path d="M691.6,266.2 l43.4,-10.7" stroke="#fff" stroke-opacity="0.57" stroke-width="0.9"/><path d="M694.2,264.4 l12.6,-34.5" stroke="#fff" stroke-opacity="0.57" stroke-width="0.9"/><path d="M694.2,264.4 l38.2,-9.2" stroke="#fff" stroke-opacity="0.57" stroke-width="0.9"/><path d="M696.7,262.6 l9.1,-25.4" stroke="#fff" stroke-opacity="0.58" stroke-width="0.9"/><path d="M696.7,262.6 l35.0,-8.3" stroke="#fff" stroke-opacity="0.58" stroke-width="0.9"/><path d="M699.3,260.8 l16.7,-47.1" stroke="#fff" stroke-opacity="0.58" stroke-width="0.9"/><path d="M699.3,260.8 l46.3,-10.7" stroke="#fff" stroke-opacity="0.58" stroke-width="0.9"/><path d="M701.8,259.0 l16.4,-47.0" stroke="#fff" stroke-opacity="0.59" stroke-width="0.9"/><path d="M701.8,259.0 l51.3,-11.6" stroke="#fff" stroke-opacity="0.59" stroke-width="0.9"/><path d="M701.8,259.0 Q718.1,231.1 706.2,200.4" stroke="#fff" stroke-opacity="0.60" stroke-width="1" fill="none"/><path d="M701.8,259.0 Q718.3,231.2 707.6,200.6" stroke="#fff" stroke-opacity="0.60" stroke-width="1" fill="none"/><path d="M701.8,259.0 Q718.9,230.8 709.1,199.6" stroke="#fff" stroke-opacity="0.60" stroke-width="1" fill="none"/><path d="M701.8,259.0 Q720.0,229.5 711.0,196.7" stroke="#fff" stroke-opacity="0.60" stroke-width="1" fill="none"/><path d="M701.8,259.0 Q720.8,228.8 712.8,195.1" stroke="#fff" stroke-opacity="0.60" stroke-width="1" fill="none"/><path d="M701.8,259.0 Q721.8,227.8 714.8,192.9" stroke="#fff" stroke-opacity="0.60" stroke-width="1" fill="none"/><path d="M701.8,259.0 Q721.9,228.3 716.3,193.9" stroke="#fff" stroke-opacity="0.60" stroke-width="1" fill="none"/><path d="M701.8,259.0 Q722.2,228.3 717.9,194.0" stroke="#fff" stroke-opacity="0.60" stroke-width="1" fill="none"/><path d="M701.8,259.0 Q723.0,227.8 719.9,192.9" stroke="#fff" stroke-opacity="0.60" stroke-width="1" fill="none"/><path d="M701.8,259.0 Q722.8,228.5 721.1,194.6" stroke="#fff" stroke-opacity="0.60" stroke-width="1" fill="none"/><path d="M701.8,259.0 Q723.5,228.1 723.0,193.8" stroke="#fff" stroke-opacity="0.60" stroke-width="1" fill="none"/><path d="M701.8,259.0 Q722.8,229.6 723.7,197.0" stroke="#fff" stroke-opacity="0.60" stroke-width="1" fill="none"/><path d="M701.8,259.0 Q725.0,227.1 727.2,192.0" stroke="#fff" stroke-opacity="0.60" stroke-width="1" fill="none"/><path d="M701.8,259.0 Q724.2,228.7 727.6,195.7" stroke="#fff" stroke-opacity="0.60" stroke-width="1" fill="none"/><path d="M701.8,259.0 Q726.3,226.5 731.3,191.2" stroke="#fff" stroke-opacity="0.60" stroke-width="1" fill="none"/><path d="M701.8,259.0 Q726.1,227.3 732.4,193.2" stroke="#fff" stroke-opacity="0.60" stroke-width="1" fill="none"/><path d="M701.8,259.0 Q725.7,228.3 733.1,195.6" stroke="#fff" stroke-opacity="0.60" stroke-width="1" fill="none"/><path d="M701.8,259.0 Q725.8,228.8 734.3,197.0" stroke="#fff" stroke-opacity="0.60" stroke-width="1" fill="none"/><path d="M701.8,259.0 Q726.5,228.4 736.5,196.5" stroke="#fff" stroke-opacity="0.60" stroke-width="1" fill="none"/><path d="M701.8,259.0 Q727.9,227.2 739.7,194.5" stroke="#fff" stroke-opacity="0.60" stroke-width="1" fill="none"/><path d="M701.8,259.0 Q728.6,227.0 741.8,194.6" stroke="#fff" stroke-opacity="0.60" stroke-width="1" fill="none"/><path d="M701.8,259.0 Q727.4,228.9 741.1,198.9" stroke="#fff" stroke-opacity="0.60" stroke-width="1" fill="none"/><path d="M701.8,259.0 Q727.7,229.0 742.6,199.7" stroke="#fff" stroke-opacity="0.60" stroke-width="1" fill="none"/><path d="M701.8,259.0 Q729.4,227.7 746.3,197.6" stroke="#fff" stroke-opacity="0.60" stroke-width="1" fill="none"/><path d="M701.8,259.0 Q729.9,227.6 748.3,198.0" stroke="#fff" stroke-opacity="0.60" stroke-width="1" fill="none"/><path d="M701.8,259.0 Q729.8,228.3 749.0,200.1" stroke="#fff" stroke-opacity="0.60" stroke-width="1" fill="none"/><path d="M701.8,259.0 Q729.7,228.9 749.8,202.0" stroke="#fff" stroke-opacity="0.60" stroke-width="1" fill="none"/><path d="M701.8,259.0 Q731.1,227.9 753.3,200.7" stroke="#fff" stroke-opacity="0.60" stroke-width="1" fill="none"/><path d="M701.8,259.0 Q729.7,229.8 751.7,205.2" stroke="#fff" stroke-opacity="0.60" stroke-width="1" fill="none"/><path d="M701.8,259.0 Q730.9,229.1 754.6,204.7" stroke="#fff" stroke-opacity="0.60" stroke-width="1" fill="none"/><path d="M701.8,259.0 Q731.6,228.9 756.7,205.2" stroke="#fff" stroke-opacity="0.60" stroke-width="1" fill="none"/><path d="M701.8,259.0 Q733.2,227.8 760.7,204.1" stroke="#fff" stroke-opacity="0.60" stroke-width="1" fill="none"/><path d="M701.8,259.0 Q732.4,229.1 760.0,207.3" stroke="#fff" stroke-opacity="0.60" stroke-width="1" fill="none"/><path d="M701.8,259.0 Q733.3,228.8 762.4,207.7" stroke="#fff" stroke-opacity="0.60" stroke-width="1" fill="none"/><path d="M701.8,259.0 Q732.2,230.3 760.9,211.4" stroke="#fff" stroke-opacity="0.60" stroke-width="1" fill="none"/><path d="M701.8,259.0 Q731.5,231.4 760.2,214.2" stroke="#fff" stroke-opacity="0.60" stroke-width="1" fill="none"/><path d="M701.8,259.0 Q731.6,231.8 761.0,215.8" stroke="#fff" stroke-opacity="0.60" stroke-width="1" fill="none"/><path d="M701.8,259.0 Q733.9,230.2 766.1,214.4" stroke="#fff" stroke-opacity="0.60" stroke-width="1" fill="none"/><path d="M701.8,259.0 Q733.1,231.4 765.2,217.3" stroke="#fff" stroke-opacity="0.60" stroke-width="1" fill="none"/><path d="M701.8,259.0 Q731.9,232.9 763.2,220.6" stroke="#fff" stroke-opacity="0.60" stroke-width="1" fill="none"/><path d="M701.8,259.0 Q731.0,234.1 761.8,223.5" stroke="#fff" stroke-opacity="0.60" stroke-width="1" fill="none"/><path d="M701.8,259.0 Q732.5,233.3 765.3,223.5" stroke="#fff" stroke-opacity="0.60" stroke-width="1" fill="none"/><path d="M701.8,259.0 Q733.0,233.3 766.7,224.7" stroke="#fff" stroke-opacity="0.60" stroke-width="1" fill="none"/><path d="M701.8,259.0 Q732.2,234.4 765.3,227.3" stroke="#fff" stroke-opacity="0.60" stroke-width="1" fill="none"/><path d="M701.8,259.0 Q731.6,235.3 764.5,229.6" stroke="#fff" stroke-opacity="0.60" stroke-width="1" fill="none"/><path d="M701.8,259.0 Q732.8,234.8 767.3,230.2" stroke="#fff" stroke-opacity="0.60" stroke-width="1" fill="none"/><path d="M701.8,259.0 Q733.5,234.6 769.0,231.4" stroke="#fff" stroke-opacity="0.60" stroke-width="1" fill="none"/><path d="M701.8,259.0 Q731.2,236.7 764.4,235.0" stroke="#fff" stroke-opacity="0.60" stroke-width="1" fill="none"/><path d="M701.8,259.0 Q730.5,237.7 763.1,237.2" stroke="#fff" stroke-opacity="0.60" stroke-width="1" fill="none"/><path d="M701.8,259.0 Q731.3,237.4 764.9,238.2" stroke="#fff" stroke-opacity="0.60" stroke-width="1" fill="none"/><path d="M701.8,259.0 Q731.4,237.8 765.2,239.8" stroke="#fff" stroke-opacity="0.60" stroke-width="1" fill="none"/><path d="M701.8,259.0 Q732.1,237.7 766.6,241.1" stroke="#fff" stroke-opacity="0.60" stroke-width="1" fill="none"/><path d="M701.8,259.0 Q730.4,239.2 763.2,243.6" stroke="#fff" stroke-opacity="0.60" stroke-width="1" fill="none"/><path d="M701.8,259.0 Q732.0,238.5 766.6,244.4" stroke="#fff" stroke-opacity="0.60" stroke-width="1" fill="none"/><path d="M701.8,259.0 Q731.7,239.1 765.7,246.2" stroke="#fff" stroke-opacity="0.60" stroke-width="1" fill="none"/><path d="M701.8,259.0 Q730.7,240.0 763.7,248.1" stroke="#fff" stroke-opacity="0.60" stroke-width="1" fill="none"/><path d="M701.8,259.0 Q729.6,241.1 761.3,250.0" stroke="#fff" stroke-opacity="0.60" stroke-width="1" fill="none"/><path d="M701.8,259.0 Q731.6,240.2 765.3,251.0" stroke="#fff" stroke-opacity="0.60" stroke-width="1" fill="none"/><path d="M701.8,259.0 Q729.5,241.9 760.6,253.0" stroke="#fff" stroke-opacity="0.60" stroke-width="1" fill="none"/><path d="M701.8,259.0 L706.2,200.4 L707.6,200.6 L709.1,199.6 L711.0,196.7 L712.8,195.1 L714.8,192.9 L716.3,193.9 L717.9,194.0 L719.9,192.9 L721.1,194.6 L723.0,193.8 L723.7,197.0 L727.2,192.0 L727.6,195.7 L731.3,191.2 L732.4,193.2 L733.1,195.6 L734.3,197.0 L736.5,196.5 L739.7,194.5 L741.8,194.6 L741.1,198.9 L742.6,199.7 L746.3,197.6 L748.3,198.0 L749.0,200.1 L749.8,202.0 L753.3,200.7 L751.7,205.2 L754.6,204.7 L756.7,205.2 L760.7,204.1 L760.0,207.3 L762.4,207.7 L760.9,211.4 L760.2,214.2 L761.0,215.8 L766.1,214.4 L765.2,217.3 L763.2,220.6 L761.8,223.5 L765.3,223.5 L766.7,224.7 L765.3,227.3 L764.5,229.6 L767.3,230.2 L769.0,231.4 L764.4,235.0 L763.1,237.2 L764.9,238.2 L765.2,239.8 L766.6,241.1 L763.2,243.6 L766.6,244.4 L765.7,246.2 L763.7,248.1 L761.3,250.0 L765.3,251.0 L760.6,253.0Z" fill="#fff" fill-opacity="0.62" filter="url(#b1)"/><ellipse cx="734.5" cy="225.4" rx="31.1" ry="20.3" transform="rotate(44.2 734.5 225.4)" fill="#fff" fill-opacity="0.85" filter="url(#b2)"/><path d="M603.0,366.0 Q672.1,322.7 748.8,295.3" stroke="#fff" stroke-opacity="0.9" stroke-width="2.0" fill="none"/><path d="M601.3,367.6 Q667.9,326.6 744.4,299.5" stroke="#fff" stroke-opacity="0.45" stroke-width="0.9" fill="none"/><path d="M601.8,368.7 Q669.0,329.5 745.5,302.5" stroke="#fff" stroke-opacity="0.45" stroke-width="0.9" fill="none"/><path d="M603.0,364.1 Q672.0,318.0 748.7,290.3" stroke="#fff" stroke-opacity="0.45" stroke-width="0.9" fill="none"/><path d="M601.3,365.5 Q667.9,321.5 744.4,294.0" stroke="#fff" stroke-opacity="0.45" stroke-width="0.9" fill="none"/><path d="M612.5,360.2 l10.4,-10.0" stroke="#fff" stroke-opacity="0.36" stroke-width="0.9"/><path d="M612.5,360.2 l16.5,-2.3" stroke="#fff" stroke-opacity="0.36" stroke-width="0.9"/><path d="M615.6,358.3 l7.5,-7.2" stroke="#fff" stroke-opacity="0.36" stroke-width="0.9"/><path d="M615.6,358.3 l12.3,-1.7" stroke="#fff" stroke-opacity="0.36" stroke-width="0.9"/><path d="M618.8,356.4 l7.9,-7.7" stroke="#fff" stroke-opacity="0.37" stroke-width="0.9"/><path d="M618.8,356.4 l17.0,-2.2" stroke="#fff" stroke-opacity="0.37" stroke-width="0.9"/><path d="M622.0,354.5 l7.6,-7.4" stroke="#fff" stroke-opacity="0.37" stroke-width="0.9"/><path d="M622.0,354.5 l9.8,-1.2" stroke="#fff" stroke-opacity="0.37" stroke-width="0.9"/><path d="M625.2,352.6 l7.2,-7.1" stroke="#fff" stroke-opacity="0.38" stroke-width="0.9"/><path d="M625.2,352.6 l12.7,-1.6" stroke="#fff" stroke-opacity="0.38" stroke-width="0.9"/><path d="M628.4,350.8 l12.2,-12.2" stroke="#fff" stroke-opacity="0.39" stroke-width="0.9"/><path d="M628.4,350.8 l17.0,-2.0" stroke="#fff" stroke-opacity="0.39" stroke-width="0.9"/><path d="M631.6,349.0 l11.4,-11.5" stroke="#fff" stroke-opacity="0.39" stroke-width="0.9"/><path d="M631.6,349.0 l18.3,-2.1" stroke="#fff" stroke-opacity="0.39" stroke-width="0.9"/><path d="M634.8,347.2 l12.7,-13.0" stroke="#fff" stroke-opacity="0.40" stroke-width="0.9"/><path d="M634.8,347.2 l12.9,-1.4" stroke="#fff" stroke-opacity="0.40" stroke-width="0.9"/><path d="M638.0,345.4 l8.3,-8.6" stroke="#fff" stroke-opacity="0.40" stroke-width="0.9"/><path d="M638.0,345.4 l18.5,-1.9" stroke="#fff" stroke-opacity="0.40" stroke-width="0.9"/><path d="M641.2,343.6 l12.0,-12.5" stroke="#fff" stroke-opacity="0.41" stroke-width="0.9"/><path d="M641.2,343.6 l10.8,-1.1" stroke="#fff" stroke-opacity="0.41" stroke-width="0.9"/><path d="M644.5,341.8 l11.7,-12.3" stroke="#fff" stroke-opacity="0.41" stroke-width="0.9"/><path d="M644.5,341.8 l14.3,-1.3" stroke="#fff" stroke-opacity="0.41" stroke-width="0.9"/><path d="M647.7,340.1 l10.0,-10.6" stroke="#fff" stroke-opacity="0.42" stroke-width="0.9"/><path d="M647.7,340.1 l14.2,-1.3" stroke="#fff" stroke-opacity="0.42" stroke-width="0.9"/><path d="M651.0,338.3 l8.9,-9.5" stroke="#fff" stroke-opacity="0.43" stroke-width="0.9"/><path d="M651.0,338.3 l11.4,-0.9" stroke="#fff" stroke-opacity="0.43" stroke-width="0.9"/><path d="M654.2,336.6 l9.8,-10.6" stroke="#fff" stroke-opacity="0.43" stroke-width="0.9"/><path d="M654.2,336.6 l15.2,-1.2" stroke="#fff" stroke-opacity="0.43" stroke-width="0.9"/><path d="M657.5,334.9 l14.8,-16.1" stroke="#fff" stroke-opacity="0.44" stroke-width="0.9"/><path d="M657.5,334.9 l13.3,-1.0" stroke="#fff" stroke-opacity="0.44" stroke-width="0.9"/><path d="M660.8,333.2 l15.2,-16.7" stroke="#fff" stroke-opacity="0.44" stroke-width="0.9"/><path d="M660.8,333.2 l14.5,-1.0" stroke="#fff" stroke-opacity="0.44" stroke-width="0.9"/><path d="M664.1,331.6 l11.1,-12.4" stroke="#fff" stroke-opacity="0.45" stroke-width="0.9"/><path d="M664.1,331.6 l21.7,-1.4" stroke="#fff" stroke-opacity="0.45" stroke-width="0.9"/><path d="M667.4,329.9 l14.9,-16.7" stroke="#fff" stroke-opacity="0.45" stroke-width="0.9"/><path d="M667.4,329.9 l18.0,-1.1" stroke="#fff" stroke-opacity="0.45" stroke-width="0.9"/><path d="M670.7,328.3 l9.4,-10.6" stroke="#fff" stroke-opacity="0.46" stroke-width="0.9"/><path d="M670.7,328.3 l19.0,-1.0" stroke="#fff" stroke-opacity="0.46" stroke-width="0.9"/><path d="M674.0,326.7 l12.2,-13.9" stroke="#fff" stroke-opacity="0.47" stroke-width="0.9"/><path d="M674.0,326.7 l25.0,-1.3" stroke="#fff" stroke-opacity="0.47" stroke-width="0.9"/><path d="M677.3,325.1 l11.0,-12.7" stroke="#fff" stroke-opacity="0.47" stroke-width="0.9"/><path d="M677.3,325.1 l18.9,-0.9" stroke="#fff" stroke-opacity="0.47" stroke-width="0.9"/><path d="M680.6,323.5 l17.2,-20.1" stroke="#fff" stroke-opacity="0.48" stroke-width="0.9"/><path d="M680.6,323.5 l15.3,-0.6" stroke="#fff" stroke-opacity="0.48" stroke-width="0.9"/><path d="M684.0,321.9 l13.5,-15.9" stroke="#fff" stroke-opacity="0.48" stroke-width="0.9"/><path d="M684.0,321.9 l26.1,-0.9" stroke="#fff" stroke-opacity="0.48" stroke-width="0.9"/><path d="M687.3,320.4 l17.0,-20.2" stroke="#fff" stroke-opacity="0.49" stroke-width="0.9"/><path d="M687.3,320.4 l16.5,-0.5" stroke="#fff" stroke-opacity="0.49" stroke-width="0.9"/><path d="M690.7,318.9 l10.9,-13.0" stroke="#fff" stroke-opacity="0.49" stroke-width="0.9"/><path d="M690.7,318.9 l17.4,-0.5" stroke="#fff" stroke-opacity="0.49" stroke-width="0.9"/><path d="M694.0,317.3 l19.4,-23.5" stroke="#fff" stroke-opacity="0.50" stroke-width="0.9"/><path d="M694.0,317.3 l20.8,-0.4" stroke="#fff" stroke-opacity="0.50" stroke-width="0.9"/><path d="M697.4,315.8 l18.3,-22.4" stroke="#fff" stroke-opacity="0.50" stroke-width="0.9"/><path d="M697.4,315.8 l31.2,-0.5" stroke="#fff" stroke-opacity="0.50" stroke-width="0.9"/><path d="M700.8,314.4 l14.8,-18.3" stroke="#fff" stroke-opacity="0.51" stroke-width="0.9"/><path d="M700.8,314.4 l22.5,-0.3" stroke="#fff" stroke-opacity="0.51" stroke-width="0.9"/><path d="M704.1,312.9 l21.4,-26.8" stroke="#fff" stroke-opacity="0.52" stroke-width="0.9"/><path d="M704.1,312.9 l28.8,-0.2" stroke="#fff" stroke-opacity="0.52" stroke-width="0.9"/><path d="M707.5,311.4 l14.8,-18.7" stroke="#fff" stroke-opacity="0.52" stroke-width="0.9"/><path d="M707.5,311.4 l31.4,-0.1" stroke="#fff" stroke-opacity="0.52" stroke-width="0.9"/><path d="M710.9,310.0 l15.8,-20.1" stroke="#fff" stroke-opacity="0.53" stroke-width="0.9"/><path d="M710.9,310.0 l24.9,0.1" stroke="#fff" stroke-opacity="0.53" stroke-width="0.9"/><path d="M714.3,308.6 l12.8,-16.5" stroke="#fff" stroke-opacity="0.53" stroke-width="0.9"/><path d="M714.3,308.6 l34.3,0.2" stroke="#fff" stroke-opacity="0.53" stroke-width="0.9"/><path d="M717.7,307.2 l23.4,-30.4" stroke="#fff" stroke-opacity="0.54" stroke-width="0.9"/><path d="M717.7,307.2 l33.2,0.4" stroke="#fff" stroke-opacity="0.54" stroke-width="0.9"/><path d="M721.2,305.8 l24.4,-32.0" stroke="#fff" stroke-opacity="0.54" stroke-width="0.9"/><path d="M721.2,305.8 l22.7,0.4" stroke="#fff" stroke-opacity="0.54" stroke-width="0.9"/><path d="M724.6,304.4 l16.6,-22.0" stroke="#fff" stroke-opacity="0.55" stroke-width="0.9"/><path d="M724.6,304.4 l32.3,0.7" stroke="#fff" stroke-opacity="0.55" stroke-width="0.9"/><path d="M728.0,303.1 l25.8,-34.6" stroke="#fff" stroke-opacity="0.56" stroke-width="0.9"/><path d="M728.0,303.1 l43.1,1.1" stroke="#fff" stroke-opacity="0.56" stroke-width="0.9"/><path d="M731.5,301.7 l19.4,-26.2" stroke="#fff" stroke-opacity="0.56" stroke-width="0.9"/><path d="M731.5,301.7 l29.8,0.9" stroke="#fff" stroke-opacity="0.56" stroke-width="0.9"/><path d="M734.9,300.4 l20.5,-27.9" stroke="#fff" stroke-opacity="0.57" stroke-width="0.9"/><path d="M734.9,300.4 l36.0,1.3" stroke="#fff" stroke-opacity="0.57" stroke-width="0.9"/><path d="M738.4,299.1 l27.5,-38.0" stroke="#fff" stroke-opacity="0.57" stroke-width="0.9"/><path d="M738.4,299.1 l30.2,1.2" stroke="#fff" stroke-opacity="0.57" stroke-width="0.9"/><path d="M741.8,297.8 l26.5,-37.0" stroke="#fff" stroke-opacity="0.58" stroke-width="0.9"/><path d="M741.8,297.8 l44.0,2.0" stroke="#fff" stroke-opacity="0.58" stroke-width="0.9"/><path d="M745.3,296.6 l27.5,-38.7" stroke="#fff" stroke-opacity="0.58" stroke-width="0.9"/><path d="M745.3,296.6 l46.2,2.3" stroke="#fff" stroke-opacity="0.58" stroke-width="0.9"/><path d="M748.8,295.3 l25.1,-35.7" stroke="#fff" stroke-opacity="0.59" stroke-width="0.9"/><path d="M748.8,295.3 l36.7,2.0" stroke="#fff" stroke-opacity="0.59" stroke-width="0.9"/><path d="M748.8,295.3 Q766.1,278.4 765.4,254.6" stroke="#fff" stroke-opacity="0.42" stroke-width="1" fill="none"/><path d="M748.8,295.3 Q766.6,278.2 766.7,254.2" stroke="#fff" stroke-opacity="0.42" stroke-width="1" fill="none"/><path d="M748.8,295.3 Q767.8,277.3 768.8,252.2" stroke="#fff" stroke-opacity="0.42" stroke-width="1" fill="none"/><path d="M748.8,295.3 Q766.9,278.5 768.7,255.0" stroke="#fff" stroke-opacity="0.42" stroke-width="1" fill="none"/><path d="M748.8,295.3 Q767.5,278.2 770.2,254.4" stroke="#fff" stroke-opacity="0.42" stroke-width="1" fill="none"/><path d="M748.8,295.3 Q769.0,277.1 772.8,252.0" stroke="#fff" stroke-opacity="0.42" stroke-width="1" fill="none"/><path d="M748.8,295.3 Q768.4,277.9 773.0,254.2" stroke="#fff" stroke-opacity="0.42" stroke-width="1" fill="none"/><path d="M748.8,295.3 Q768.4,278.2 773.8,255.1" stroke="#fff" stroke-opacity="0.42" stroke-width="1" fill="none"/><path d="M748.8,295.3 Q768.8,278.2 775.0,255.3" stroke="#fff" stroke-opacity="0.42" stroke-width="1" fill="none"/><path d="M748.8,295.3 Q770.3,277.2 777.8,253.3" stroke="#fff" stroke-opacity="0.42" stroke-width="1" fill="none"/><path d="M748.8,295.3 Q770.2,277.6 778.4,254.5" stroke="#fff" stroke-opacity="0.42" stroke-width="1" fill="none"/><path d="M748.8,295.3 Q772.0,276.4 781.8,252.1" stroke="#fff" stroke-opacity="0.42" stroke-width="1" fill="none"/><path d="M748.8,295.3 Q772.2,276.6 782.9,252.8" stroke="#fff" stroke-opacity="0.42" stroke-width="1" fill="none"/><path d="M748.8,295.3 Q772.8,276.4 784.6,252.8" stroke="#fff" stroke-opacity="0.42" stroke-width="1" fill="none"/><path d="M748.8,295.3 Q771.5,277.8 783.4,256.2" stroke="#fff" stroke-opacity="0.42" stroke-width="1" fill="none"/><path d="M748.8,295.3 Q771.5,278.1 784.0,257.4" stroke="#fff" stroke-opacity="0.42" stroke-width="1" fill="none"/><path d="M748.8,295.3 Q771.8,278.1 785.3,257.9" stroke="#fff" stroke-opacity="0.42" stroke-width="1" fill="none"/><path d="M748.8,295.3 Q773.1,277.5 788.0,257.0" stroke="#fff" stroke-opacity="0.42" stroke-width="1" fill="none"/><path d="M748.8,295.3 Q774.0,277.2 790.1,256.9" stroke="#fff" stroke-opacity="0.42" stroke-width="1" fill="none"/><path d="M748.8,295.3 Q773.7,277.7 790.2,258.6" stroke="#fff" stroke-opacity="0.42" stroke-width="1" fill="none"/><path d="M748.8,295.3 Q773.4,278.2 790.5,260.1" stroke="#fff" stroke-opacity="0.42" stroke-width="1" fill="none"/><path d="M748.8,295.3 Q774.2,278.0 792.4,260.3" stroke="#fff" stroke-opacity="0.42" stroke-width="1" fill="none"/><path d="M748.8,295.3 Q775.0,277.8 794.4,260.5" stroke="#fff" stroke-opacity="0.42" stroke-width="1" fill="none"/><path d="M748.8,295.3 Q775.4,277.8 795.7,261.2" stroke="#fff" stroke-opacity="0.42" stroke-width="1" fill="none"/><path d="M748.8,295.3 Q775.9,277.8 797.0,262.0" stroke="#fff" stroke-opacity="0.42" stroke-width="1" fill="none"/><path d="M748.8,295.3 Q776.4,277.8 798.4,262.8" stroke="#fff" stroke-opacity="0.42" stroke-width="1" fill="none"/><path d="M748.8,295.3 Q776.1,278.4 798.4,264.5" stroke="#fff" stroke-opacity="0.42" stroke-width="1" fill="none"/><path d="M748.8,295.3 Q774.7,279.5 796.3,267.3" stroke="#fff" stroke-opacity="0.42" stroke-width="1" fill="none"/><path d="M748.8,295.3 Q776.7,278.6 800.5,266.6" stroke="#fff" stroke-opacity="0.42" stroke-width="1" fill="none"/><path d="M748.8,295.3 Q775.2,279.8 798.2,269.4" stroke="#fff" stroke-opacity="0.42" stroke-width="1" fill="none"/><path d="M748.8,295.3 Q776.0,279.7 799.9,270.0" stroke="#fff" stroke-opacity="0.42" stroke-width="1" fill="none"/><path d="M748.8,295.3 Q775.5,280.3 799.3,271.8" stroke="#fff" stroke-opacity="0.42" stroke-width="1" fill="none"/><path d="M748.8,295.3 Q776.4,280.0 801.4,272.4" stroke="#fff" stroke-opacity="0.42" stroke-width="1" fill="none"/><path d="M748.8,295.3 Q774.9,281.2 798.8,274.9" stroke="#fff" stroke-opacity="0.42" stroke-width="1" fill="none"/><path d="M748.8,295.3 Q775.0,281.4 799.2,276.2" stroke="#fff" stroke-opacity="0.42" stroke-width="1" fill="none"/><path d="M748.8,295.3 Q774.9,281.7 799.2,277.6" stroke="#fff" stroke-opacity="0.42" stroke-width="1" fill="none"/><path d="M748.8,295.3 Q774.5,282.2 798.7,279.1" stroke="#fff" stroke-opacity="0.42" stroke-width="1" fill="none"/><path d="M748.8,295.3 Q776.4,281.5 802.5,279.3" stroke="#fff" stroke-opacity="0.42" stroke-width="1" fill="none"/><path d="M748.8,295.3 Q775.4,282.3 800.8,281.1" stroke="#fff" stroke-opacity="0.42" stroke-width="1" fill="none"/><path d="M748.8,295.3 Q774.6,283.0 799.3,282.8" stroke="#fff" stroke-opacity="0.42" stroke-width="1" fill="none"/><path d="M748.8,295.3 Q774.7,283.2 799.5,284.1" stroke="#fff" stroke-opacity="0.42" stroke-width="1" fill="none"/><path d="M748.8,295.3 Q776.0,282.8 802.3,284.8" stroke="#fff" stroke-opacity="0.42" stroke-width="1" fill="none"/><path d="M748.8,295.3 Q774.6,283.8 799.4,286.6" stroke="#fff" stroke-opacity="0.42" stroke-width="1" fill="none"/><path d="M748.8,295.3 Q773.7,284.4 797.7,288.2" stroke="#fff" stroke-opacity="0.42" stroke-width="1" fill="none"/><path d="M748.8,295.3 Q775.0,284.1 800.1,289.1" stroke="#fff" stroke-opacity="0.42" stroke-width="1" fill="none"/><path d="M748.8,295.3 Q774.3,284.6 798.9,290.4" stroke="#fff" stroke-opacity="0.42" stroke-width="1" fill="none"/><path d="M748.8,295.3 Q775.0,284.7 800.0,291.6" stroke="#fff" stroke-opacity="0.42" stroke-width="1" fill="none"/><path d="M748.8,295.3 Q772.5,285.9 795.1,293.1" stroke="#fff" stroke-opacity="0.42" stroke-width="1" fill="none"/><path d="M748.8,295.3 Q773.1,285.9 796.3,294.1" stroke="#fff" stroke-opacity="0.42" stroke-width="1" fill="none"/><path d="M748.8,295.3 Q773.7,285.9 797.2,295.3" stroke="#fff" stroke-opacity="0.42" stroke-width="1" fill="none"/><path d="M748.8,295.3 Q773.5,286.2 796.6,296.4" stroke="#fff" stroke-opacity="0.42" stroke-width="1" fill="none"/><path d="M748.8,295.3 Q773.4,286.5 796.2,297.6" stroke="#fff" stroke-opacity="0.42" stroke-width="1" fill="none"/><path d="M748.8,295.3 Q771.0,287.6 791.4,298.4" stroke="#fff" stroke-opacity="0.42" stroke-width="1" fill="none"/><path d="M748.8,295.3 L765.4,254.6 L766.7,254.2 L768.8,252.2 L768.7,255.0 L770.2,254.4 L772.8,252.0 L773.0,254.2 L773.8,255.1 L775.0,255.3 L777.8,253.3 L778.4,254.5 L781.8,252.1 L782.9,252.8 L784.6,252.8 L783.4,256.2 L784.0,257.4 L785.3,257.9 L788.0,257.0 L790.1,256.9 L790.2,258.6 L790.5,260.1 L792.4,260.3 L794.4,260.5 L795.7,261.2 L797.0,262.0 L798.4,262.8 L798.4,264.5 L796.3,267.3 L800.5,266.6 L798.2,269.4 L799.9,270.0 L799.3,271.8 L801.4,272.4 L798.8,274.9 L799.2,276.2 L799.2,277.6 L798.7,279.1 L802.5,279.3 L800.8,281.1 L799.3,282.8 L799.5,284.1 L802.3,284.8 L799.4,286.6 L797.7,288.2 L800.1,289.1 L798.9,290.4 L800.0,291.6 L795.1,293.1 L796.3,294.1 L797.2,295.3 L796.6,296.4 L796.2,297.6 L791.4,298.4Z" fill="#fff" fill-opacity="0.43" filter="url(#b1)"/><ellipse cx="778.4" cy="276.9" rx="21.1" ry="15.1" transform="rotate(58.1 778.4 276.9)" fill="#fff" fill-opacity="0.59" filter="url(#b2)"/><path d="M605.0,379.0 Q646.6,351.9 693.5,335.7" stroke="#fff" stroke-opacity="0.9" stroke-width="2.0" fill="none"/><path d="M603.1,381.8 Q641.9,359.0 688.5,343.3" stroke="#fff" stroke-opacity="0.45" stroke-width="0.9" fill="none"/><path d="M605.5,381.6 Q647.8,358.3 694.8,342.6" stroke="#fff" stroke-opacity="0.45" stroke-width="0.9" fill="none"/><path d="M604.2,381.2 Q644.6,357.4 691.4,341.6" stroke="#fff" stroke-opacity="0.45" stroke-width="0.9" fill="none"/><path d="M604.7,377.6 Q645.8,348.3 692.7,331.9" stroke="#fff" stroke-opacity="0.45" stroke-width="0.9" fill="none"/><path d="M610.7,375.4 l11.0,-10.6" stroke="#fff" stroke-opacity="0.36" stroke-width="0.9"/><path d="M610.7,375.4 l16.5,-2.4" stroke="#fff" stroke-opacity="0.36" stroke-width="0.9"/><path d="M612.6,374.2 l7.2,-7.0" stroke="#fff" stroke-opacity="0.36" stroke-width="0.9"/><path d="M612.6,374.2 l13.9,-1.9" stroke="#fff" stroke-opacity="0.36" stroke-width="0.9"/><path d="M614.5,373.0 l10.2,-10.0" stroke="#fff" stroke-opacity="0.37" stroke-width="0.9"/><path d="M614.5,373.0 l11.0,-1.5" stroke="#fff" stroke-opacity="0.37" stroke-width="0.9"/><path d="M616.4,371.8 l8.9,-8.8" stroke="#fff" stroke-opacity="0.37" stroke-width="0.9"/><path d="M616.4,371.8 l10.5,-1.4" stroke="#fff" stroke-opacity="0.37" stroke-width="0.9"/><path d="M618.4,370.6 l8.0,-8.0" stroke="#fff" stroke-opacity="0.38" stroke-width="0.9"/><path d="M618.4,370.6 l11.6,-1.5" stroke="#fff" stroke-opacity="0.38" stroke-width="0.9"/><path d="M620.3,369.5 l10.4,-10.5" stroke="#fff" stroke-opacity="0.39" stroke-width="0.9"/><path d="M620.3,369.5 l15.1,-1.8" stroke="#fff" stroke-opacity="0.39" stroke-width="0.9"/><path d="M622.2,368.4 l8.2,-8.3" stroke="#fff" stroke-opacity="0.39" stroke-width="0.9"/><path d="M622.2,368.4 l10.0,-1.2" stroke="#fff" stroke-opacity="0.39" stroke-width="0.9"/><path d="M624.2,367.2 l9.0,-9.3" stroke="#fff" stroke-opacity="0.40" stroke-width="0.9"/><path d="M624.2,367.2 l15.9,-1.8" stroke="#fff" stroke-opacity="0.40" stroke-width="0.9"/><path d="M626.1,366.1 l8.3,-8.6" stroke="#fff" stroke-opacity="0.40" stroke-width="0.9"/><path d="M626.1,366.1 l13.0,-1.4" stroke="#fff" stroke-opacity="0.40" stroke-width="0.9"/><path d="M628.1,365.0 l8.6,-9.0" stroke="#fff" stroke-opacity="0.41" stroke-width="0.9"/><path d="M628.1,365.0 l17.7,-1.8" stroke="#fff" stroke-opacity="0.41" stroke-width="0.9"/><path d="M630.0,363.9 l10.9,-11.5" stroke="#fff" stroke-opacity="0.41" stroke-width="0.9"/><path d="M630.0,363.9 l11.3,-1.1" stroke="#fff" stroke-opacity="0.41" stroke-width="0.9"/><path d="M632.0,362.9 l8.2,-8.8" stroke="#fff" stroke-opacity="0.42" stroke-width="0.9"/><path d="M632.0,362.9 l14.8,-1.4" stroke="#fff" stroke-opacity="0.42" stroke-width="0.9"/><path d="M634.0,361.8 l11.4,-12.3" stroke="#fff" stroke-opacity="0.43" stroke-width="0.9"/><path d="M634.0,361.8 l17.5,-1.5" stroke="#fff" stroke-opacity="0.43" stroke-width="0.9"/><path d="M635.9,360.7 l8.5,-9.3" stroke="#fff" stroke-opacity="0.43" stroke-width="0.9"/><path d="M635.9,360.7 l13.3,-1.1" stroke="#fff" stroke-opacity="0.43" stroke-width="0.9"/><path d="M637.9,359.7 l12.9,-14.2" stroke="#fff" stroke-opacity="0.44" stroke-width="0.9"/><path d="M637.9,359.7 l16.2,-1.3" stroke="#fff" stroke-opacity="0.44" stroke-width="0.9"/><path d="M639.9,358.6 l10.3,-11.4" stroke="#fff" stroke-opacity="0.44" stroke-width="0.9"/><path d="M639.9,358.6 l15.6,-1.1" stroke="#fff" stroke-opacity="0.44" stroke-width="0.9"/><path d="M641.9,357.6 l15.4,-17.3" stroke="#fff" stroke-opacity="0.45" stroke-width="0.9"/><path d="M641.9,357.6 l16.1,-1.1" stroke="#fff" stroke-opacity="0.45" stroke-width="0.9"/><path d="M643.9,356.6 l12.9,-14.6" stroke="#fff" stroke-opacity="0.45" stroke-width="0.9"/><path d="M643.9,356.6 l17.1,-1.1" stroke="#fff" stroke-opacity="0.45" stroke-width="0.9"/><path d="M645.9,355.6 l12.1,-13.8" stroke="#fff" stroke-opacity="0.46" stroke-width="0.9"/><path d="M645.9,355.6 l23.6,-1.4" stroke="#fff" stroke-opacity="0.46" stroke-width="0.9"/><path d="M647.9,354.6 l17.0,-19.6" stroke="#fff" stroke-opacity="0.47" stroke-width="0.9"/><path d="M647.9,354.6 l18.3,-1.0" stroke="#fff" stroke-opacity="0.47" stroke-width="0.9"/><path d="M649.9,353.6 l11.0,-12.8" stroke="#fff" stroke-opacity="0.47" stroke-width="0.9"/><path d="M649.9,353.6 l23.4,-1.1" stroke="#fff" stroke-opacity="0.47" stroke-width="0.9"/><path d="M651.9,352.7 l11.4,-13.4" stroke="#fff" stroke-opacity="0.48" stroke-width="0.9"/><path d="M651.9,352.7 l15.0,-0.7" stroke="#fff" stroke-opacity="0.48" stroke-width="0.9"/><path d="M654.0,351.7 l17.6,-20.9" stroke="#fff" stroke-opacity="0.48" stroke-width="0.9"/><path d="M654.0,351.7 l21.0,-0.8" stroke="#fff" stroke-opacity="0.48" stroke-width="0.9"/><path d="M656.0,350.8 l17.4,-20.8" stroke="#fff" stroke-opacity="0.49" stroke-width="0.9"/><path d="M656.0,350.8 l21.5,-0.7" stroke="#fff" stroke-opacity="0.49" stroke-width="0.9"/><path d="M658.0,349.8 l18.4,-22.3" stroke="#fff" stroke-opacity="0.49" stroke-width="0.9"/><path d="M658.0,349.8 l23.0,-0.7" stroke="#fff" stroke-opacity="0.49" stroke-width="0.9"/><path d="M660.1,348.9 l12.3,-15.0" stroke="#fff" stroke-opacity="0.50" stroke-width="0.9"/><path d="M660.1,348.9 l17.2,-0.4" stroke="#fff" stroke-opacity="0.50" stroke-width="0.9"/><path d="M662.1,348.0 l16.3,-20.2" stroke="#fff" stroke-opacity="0.50" stroke-width="0.9"/><path d="M662.1,348.0 l27.3,-0.5" stroke="#fff" stroke-opacity="0.50" stroke-width="0.9"/><path d="M664.2,347.1 l20.3,-25.3" stroke="#fff" stroke-opacity="0.51" stroke-width="0.9"/><path d="M664.2,347.1 l19.6,-0.3" stroke="#fff" stroke-opacity="0.51" stroke-width="0.9"/><path d="M666.2,346.2 l18.0,-22.6" stroke="#fff" stroke-opacity="0.52" stroke-width="0.9"/><path d="M666.2,346.2 l24.8,-0.3" stroke="#fff" stroke-opacity="0.52" stroke-width="0.9"/><path d="M668.3,345.4 l17.2,-21.9" stroke="#fff" stroke-opacity="0.52" stroke-width="0.9"/><path d="M668.3,345.4 l21.9,-0.1" stroke="#fff" stroke-opacity="0.52" stroke-width="0.9"/><path d="M670.4,344.5 l15.4,-19.7" stroke="#fff" stroke-opacity="0.53" stroke-width="0.9"/><path d="M670.4,344.5 l29.1,-0.0" stroke="#fff" stroke-opacity="0.53" stroke-width="0.9"/><path d="M672.4,343.6 l22.8,-29.5" stroke="#fff" stroke-opacity="0.53" stroke-width="0.9"/><path d="M672.4,343.6 l22.7,0.1" stroke="#fff" stroke-opacity="0.53" stroke-width="0.9"/><path d="M674.5,342.8 l18.5,-24.3" stroke="#fff" stroke-opacity="0.54" stroke-width="0.9"/><path d="M674.5,342.8 l36.3,0.3" stroke="#fff" stroke-opacity="0.54" stroke-width="0.9"/><path d="M676.6,342.0 l24.5,-32.4" stroke="#fff" stroke-opacity="0.54" stroke-width="0.9"/><path d="M676.6,342.0 l26.0,0.3" stroke="#fff" stroke-opacity="0.54" stroke-width="0.9"/><path d="M678.7,341.1 l15.3,-20.4" stroke="#fff" stroke-opacity="0.55" stroke-width="0.9"/><path d="M678.7,341.1 l41.5,0.7" stroke="#fff" stroke-opacity="0.55" stroke-width="0.9"/><path d="M680.8,340.3 l26.0,-35.0" stroke="#fff" stroke-opacity="0.56" stroke-width="0.9"/><path d="M680.8,340.3 l33.5,0.8" stroke="#fff" stroke-opacity="0.56" stroke-width="0.9"/><path d="M682.9,339.5 l15.2,-20.6" stroke="#fff" stroke-opacity="0.56" stroke-width="0.9"/><path d="M682.9,339.5 l43.9,1.2" stroke="#fff" stroke-opacity="0.56" stroke-width="0.9"/><path d="M685.0,338.8 l19.8,-27.3" stroke="#fff" stroke-opacity="0.57" stroke-width="0.9"/><path d="M685.0,338.8 l44.9,1.4" stroke="#fff" stroke-opacity="0.57" stroke-width="0.9"/><path d="M687.1,338.0 l23.4,-32.5" stroke="#fff" stroke-opacity="0.57" stroke-width="0.9"/><path d="M687.1,338.0 l44.5,1.6" stroke="#fff" stroke-opacity="0.57" stroke-width="0.9"/><path d="M689.2,337.2 l17.8,-25.0" stroke="#fff" stroke-opacity="0.58" stroke-width="0.9"/><path d="M689.2,337.2 l45.1,1.9" stroke="#fff" stroke-opacity="0.58" stroke-width="0.9"/><path d="M691.4,336.5 l19.1,-27.1" stroke="#fff" stroke-opacity="0.58" stroke-width="0.9"/><path d="M691.4,336.5 l37.4,1.7" stroke="#fff" stroke-opacity="0.58" stroke-width="0.9"/><path d="M693.5,335.7 l28.4,-40.6" stroke="#fff" stroke-opacity="0.59" stroke-width="0.9"/><path d="M693.5,335.7 l49.0,2.5" stroke="#fff" stroke-opacity="0.59" stroke-width="0.9"/><path d="M693.5,335.7 Q704.6,316.5 699.1,295.7" stroke="#fff" stroke-opacity="0.54" stroke-width="1" fill="none"/><path d="M693.5,335.7 Q705.0,316.2 700.1,295.1" stroke="#fff" stroke-opacity="0.54" stroke-width="1" fill="none"/><path d="M693.5,335.7 Q705.6,315.6 701.4,293.8" stroke="#fff" stroke-opacity="0.54" stroke-width="1" fill="none"/><path d="M693.5,335.7 Q706.1,315.2 702.6,292.9" stroke="#fff" stroke-opacity="0.54" stroke-width="1" fill="none"/><path d="M693.5,335.7 Q706.3,315.2 703.6,293.0" stroke="#fff" stroke-opacity="0.54" stroke-width="1" fill="none"/><path d="M693.5,335.7 Q706.3,315.6 704.5,293.8" stroke="#fff" stroke-opacity="0.54" stroke-width="1" fill="none"/><path d="M693.5,335.7 Q706.8,315.2 705.8,293.0" stroke="#fff" stroke-opacity="0.54" stroke-width="1" fill="none"/><path d="M693.5,335.7 Q707.8,314.0 707.7,290.6" stroke="#fff" stroke-opacity="0.54" stroke-width="1" fill="none"/><path d="M693.5,335.7 Q708.4,313.5 709.2,289.6" stroke="#fff" stroke-opacity="0.54" stroke-width="1" fill="none"/><path d="M693.5,335.7 Q707.5,315.2 709.1,293.3" stroke="#fff" stroke-opacity="0.54" stroke-width="1" fill="none"/><path d="M693.5,335.7 Q708.6,313.9 711.2,290.8" stroke="#fff" stroke-opacity="0.54" stroke-width="1" fill="none"/><path d="M693.5,335.7 Q709.3,313.4 712.9,289.9" stroke="#fff" stroke-opacity="0.54" stroke-width="1" fill="none"/><path d="M693.5,335.7 Q708.5,314.9 712.7,293.1" stroke="#fff" stroke-opacity="0.54" stroke-width="1" fill="none"/><path d="M693.5,335.7 Q710.1,313.0 715.6,289.5" stroke="#fff" stroke-opacity="0.54" stroke-width="1" fill="none"/><path d="M693.5,335.7 Q709.3,314.5 715.3,292.9" stroke="#fff" stroke-opacity="0.54" stroke-width="1" fill="none"/><path d="M693.5,335.7 Q710.4,313.4 717.7,290.8" stroke="#fff" stroke-opacity="0.54" stroke-width="1" fill="none"/><path d="M693.5,335.7 Q710.7,313.4 718.8,291.3" stroke="#fff" stroke-opacity="0.54" stroke-width="1" fill="none"/><path d="M693.5,335.7 Q711.1,313.2 720.3,291.2" stroke="#fff" stroke-opacity="0.54" stroke-width="1" fill="none"/><path d="M693.5,335.7 Q710.9,313.9 720.7,292.9" stroke="#fff" stroke-opacity="0.54" stroke-width="1" fill="none"/><path d="M693.5,335.7 Q711.4,313.7 722.2,292.8" stroke="#fff" stroke-opacity="0.54" stroke-width="1" fill="none"/><path d="M693.5,335.7 Q712.0,313.3 723.9,292.5" stroke="#fff" stroke-opacity="0.54" stroke-width="1" fill="none"/><path d="M693.5,335.7 Q712.0,313.7 724.6,293.7" stroke="#fff" stroke-opacity="0.54" stroke-width="1" fill="none"/><path d="M693.5,335.7 Q712.7,313.2 726.5,293.2" stroke="#fff" stroke-opacity="0.54" stroke-width="1" fill="none"/><path d="M693.5,335.7 Q712.6,313.8 726.9,294.7" stroke="#fff" stroke-opacity="0.54" stroke-width="1" fill="none"/><path d="M693.5,335.7 Q712.8,313.9 728.0,295.4" stroke="#fff" stroke-opacity="0.54" stroke-width="1" fill="none"/><path d="M693.5,335.7 Q712.2,314.9 727.5,297.9" stroke="#fff" stroke-opacity="0.54" stroke-width="1" fill="none"/><path d="M693.5,335.7 Q713.5,313.8 730.5,296.4" stroke="#fff" stroke-opacity="0.54" stroke-width="1" fill="none"/><path d="M693.5,335.7 Q713.4,314.3 730.8,297.9" stroke="#fff" stroke-opacity="0.54" stroke-width="1" fill="none"/><path d="M693.5,335.7 Q713.0,315.1 730.6,299.9" stroke="#fff" stroke-opacity="0.54" stroke-width="1" fill="none"/><path d="M693.5,335.7 Q714.1,314.3 733.3,299.1" stroke="#fff" stroke-opacity="0.54" stroke-width="1" fill="none"/><path d="M693.5,335.7 Q714.2,314.5 734.0,300.2" stroke="#fff" stroke-opacity="0.54" stroke-width="1" fill="none"/><path d="M693.5,335.7 Q713.6,315.5 733.3,302.5" stroke="#fff" stroke-opacity="0.54" stroke-width="1" fill="none"/><path d="M693.5,335.7 Q713.0,316.4 732.6,304.5" stroke="#fff" stroke-opacity="0.54" stroke-width="1" fill="none"/><path d="M693.5,335.7 Q713.7,316.1 734.3,304.8" stroke="#fff" stroke-opacity="0.54" stroke-width="1" fill="none"/><path d="M693.5,335.7 Q712.9,317.1 733.1,307.1" stroke="#fff" stroke-opacity="0.54" stroke-width="1" fill="none"/><path d="M693.5,335.7 Q712.9,317.4 733.6,308.2" stroke="#fff" stroke-opacity="0.54" stroke-width="1" fill="none"/><path d="M693.5,335.7 Q713.5,317.2 735.1,308.6" stroke="#fff" stroke-opacity="0.54" stroke-width="1" fill="none"/><path d="M693.5,335.7 Q712.8,318.1 733.9,310.7" stroke="#fff" stroke-opacity="0.54" stroke-width="1" fill="none"/><path d="M693.5,335.7 Q713.5,317.8 735.6,311.1" stroke="#fff" stroke-opacity="0.54" stroke-width="1" fill="none"/><path d="M693.5,335.7 Q713.5,318.1 736.0,312.2" stroke="#fff" stroke-opacity="0.54" stroke-width="1" fill="none"/><path d="M693.5,335.7 Q712.5,319.2 734.0,314.5" stroke="#fff" stroke-opacity="0.54" stroke-width="1" fill="none"/><path d="M693.5,335.7 Q713.6,318.6 736.6,314.4" stroke="#fff" stroke-opacity="0.54" stroke-width="1" fill="none"/><path d="M693.5,335.7 Q712.4,319.9 734.2,316.8" stroke="#fff" stroke-opacity="0.54" stroke-width="1" fill="none"/><path d="M693.5,335.7 Q713.6,319.2 736.9,316.8" stroke="#fff" stroke-opacity="0.54" stroke-width="1" fill="none"/><path d="M693.5,335.7 Q713.6,319.5 737.0,318.0" stroke="#fff" stroke-opacity="0.54" stroke-width="1" fill="none"/><path d="M693.5,335.7 Q712.9,320.3 735.6,319.7" stroke="#fff" stroke-opacity="0.54" stroke-width="1" fill="none"/><path d="M693.5,335.7 Q711.9,321.3 733.5,321.6" stroke="#fff" stroke-opacity="0.54" stroke-width="1" fill="none"/><path d="M693.5,335.7 Q712.6,321.0 735.1,322.1" stroke="#fff" stroke-opacity="0.54" stroke-width="1" fill="none"/><path d="M693.5,335.7 Q712.2,321.6 734.2,323.4" stroke="#fff" stroke-opacity="0.54" stroke-width="1" fill="none"/><path d="M693.5,335.7 Q713.1,321.2 736.2,323.9" stroke="#fff" stroke-opacity="0.54" stroke-width="1" fill="none"/><path d="M693.5,335.7 Q711.3,322.7 732.5,326.0" stroke="#fff" stroke-opacity="0.54" stroke-width="1" fill="none"/><path d="M693.5,335.7 L699.1,295.7 L700.1,295.1 L701.4,293.8 L702.6,292.9 L703.6,293.0 L704.5,293.8 L705.8,293.0 L707.7,290.6 L709.2,289.6 L709.1,293.3 L711.2,290.8 L712.9,289.9 L712.7,293.1 L715.6,289.5 L715.3,292.9 L717.7,290.8 L718.8,291.3 L720.3,291.2 L720.7,292.9 L722.2,292.8 L723.9,292.5 L724.6,293.7 L726.5,293.2 L726.9,294.7 L728.0,295.4 L727.5,297.9 L730.5,296.4 L730.8,297.9 L730.6,299.9 L733.3,299.1 L734.0,300.2 L733.3,302.5 L732.6,304.5 L734.3,304.8 L733.1,307.1 L733.6,308.2 L735.1,308.6 L733.9,310.7 L735.6,311.1 L736.0,312.2 L734.0,314.5 L736.6,314.4 L734.2,316.8 L736.9,316.8 L737.0,318.0 L735.6,319.7 L733.5,321.6 L735.1,322.1 L734.2,323.4 L736.2,323.9 L732.5,326.0Z" fill="#fff" fill-opacity="0.56" filter="url(#b1)"/><ellipse cx="715.1" cy="311.6" rx="18.7" ry="14.0" transform="rotate(41.9 715.1 311.6)" fill="#fff" fill-opacity="0.77" filter="url(#b2)"/><path d="M607.0,392.0 Q693.4,343.7 787.5,312.9" stroke="#fff" stroke-opacity="0.9" stroke-width="2.0" fill="none"/><path d="M608.4,393.9 Q696.9,348.4 791.2,317.9" stroke="#fff" stroke-opacity="0.45" stroke-width="0.9" fill="none"/><path d="M605.2,394.9 Q688.8,350.9 782.6,320.6" stroke="#fff" stroke-opacity="0.45" stroke-width="0.9" fill="none"/><path d="M607.0,394.7 Q693.3,350.5 787.4,320.2" stroke="#fff" stroke-opacity="0.45" stroke-width="0.9" fill="none"/><path d="M609.5,390.0 Q699.7,338.6 794.2,307.5" stroke="#fff" stroke-opacity="0.45" stroke-width="0.9" fill="none"/><path d="M618.8,385.5 l11.5,-10.2" stroke="#fff" stroke-opacity="0.36" stroke-width="0.9"/><path d="M618.8,385.5 l16.4,-1.7" stroke="#fff" stroke-opacity="0.36" stroke-width="0.9"/><path d="M622.8,383.4 l7.3,-6.5" stroke="#fff" stroke-opacity="0.36" stroke-width="0.9"/><path d="M622.8,383.4 l12.0,-1.2" stroke="#fff" stroke-opacity="0.36" stroke-width="0.9"/><path d="M626.7,381.2 l11.4,-10.3" stroke="#fff" stroke-opacity="0.37" stroke-width="0.9"/><path d="M626.7,381.2 l10.6,-1.0" stroke="#fff" stroke-opacity="0.37" stroke-width="0.9"/><path d="M630.7,379.1 l12.4,-11.3" stroke="#fff" stroke-opacity="0.37" stroke-width="0.9"/><path d="M630.7,379.1 l11.7,-1.0" stroke="#fff" stroke-opacity="0.37" stroke-width="0.9"/><path d="M634.7,377.1 l12.0,-11.0" stroke="#fff" stroke-opacity="0.38" stroke-width="0.9"/><path d="M634.7,377.1 l10.7,-0.9" stroke="#fff" stroke-opacity="0.38" stroke-width="0.9"/><path d="M638.7,375.0 l10.2,-9.5" stroke="#fff" stroke-opacity="0.39" stroke-width="0.9"/><path d="M638.7,375.0 l17.4,-1.4" stroke="#fff" stroke-opacity="0.39" stroke-width="0.9"/><path d="M642.7,373.0 l8.5,-8.0" stroke="#fff" stroke-opacity="0.39" stroke-width="0.9"/><path d="M642.7,373.0 l12.1,-0.9" stroke="#fff" stroke-opacity="0.39" stroke-width="0.9"/><path d="M646.7,370.9 l10.5,-10.0" stroke="#fff" stroke-opacity="0.40" stroke-width="0.9"/><path d="M646.7,370.9 l12.8,-0.9" stroke="#fff" stroke-opacity="0.40" stroke-width="0.9"/><path d="M650.7,368.9 l7.7,-7.4" stroke="#fff" stroke-opacity="0.40" stroke-width="0.9"/><path d="M650.7,368.9 l11.9,-0.8" stroke="#fff" stroke-opacity="0.40" stroke-width="0.9"/><path d="M654.7,366.9 l8.7,-8.3" stroke="#fff" stroke-opacity="0.41" stroke-width="0.9"/><path d="M654.7,366.9 l19.0,-1.1" stroke="#fff" stroke-opacity="0.41" stroke-width="0.9"/><path d="M658.7,365.0 l12.3,-11.9" stroke="#fff" stroke-opacity="0.41" stroke-width="0.9"/><path d="M658.7,365.0 l19.1,-1.0" stroke="#fff" stroke-opacity="0.41" stroke-width="0.9"/><path d="M662.8,363.0 l9.1,-8.9" stroke="#fff" stroke-opacity="0.42" stroke-width="0.9"/><path d="M662.8,363.0 l18.5,-0.9" stroke="#fff" stroke-opacity="0.42" stroke-width="0.9"/><path d="M666.8,361.1 l8.9,-8.8" stroke="#fff" stroke-opacity="0.43" stroke-width="0.9"/><path d="M666.8,361.1 l16.5,-0.7" stroke="#fff" stroke-opacity="0.43" stroke-width="0.9"/><path d="M670.9,359.2 l12.8,-12.8" stroke="#fff" stroke-opacity="0.43" stroke-width="0.9"/><path d="M670.9,359.2 l15.3,-0.6" stroke="#fff" stroke-opacity="0.43" stroke-width="0.9"/><path d="M674.9,357.3 l14.8,-14.9" stroke="#fff" stroke-opacity="0.44" stroke-width="0.9"/><path d="M674.9,357.3 l17.7,-0.6" stroke="#fff" stroke-opacity="0.44" stroke-width="0.9"/><path d="M679.0,355.4 l13.0,-13.2" stroke="#fff" stroke-opacity="0.44" stroke-width="0.9"/><path d="M679.0,355.4 l21.7,-0.7" stroke="#fff" stroke-opacity="0.44" stroke-width="0.9"/><path d="M683.1,353.5 l9.7,-10.0" stroke="#fff" stroke-opacity="0.45" stroke-width="0.9"/><path d="M683.1,353.5 l23.6,-0.6" stroke="#fff" stroke-opacity="0.45" stroke-width="0.9"/><path d="M687.2,351.7 l14.0,-14.6" stroke="#fff" stroke-opacity="0.45" stroke-width="0.9"/><path d="M687.2,351.7 l17.6,-0.4" stroke="#fff" stroke-opacity="0.45" stroke-width="0.9"/><path d="M691.2,349.9 l15.8,-16.5" stroke="#fff" stroke-opacity="0.46" stroke-width="0.9"/><path d="M691.2,349.9 l16.6,-0.3" stroke="#fff" stroke-opacity="0.46" stroke-width="0.9"/><path d="M695.3,348.1 l17.8,-18.8" stroke="#fff" stroke-opacity="0.47" stroke-width="0.9"/><path d="M695.3,348.1 l20.9,-0.2" stroke="#fff" stroke-opacity="0.47" stroke-width="0.9"/><path d="M699.5,346.3 l12.9,-13.8" stroke="#fff" stroke-opacity="0.47" stroke-width="0.9"/><path d="M699.5,346.3 l23.9,-0.2" stroke="#fff" stroke-opacity="0.47" stroke-width="0.9"/><path d="M703.6,344.5 l14.0,-15.1" stroke="#fff" stroke-opacity="0.48" stroke-width="0.9"/><path d="M703.6,344.5 l17.2,-0.0" stroke="#fff" stroke-opacity="0.48" stroke-width="0.9"/><path d="M707.7,342.7 l17.1,-18.6" stroke="#fff" stroke-opacity="0.48" stroke-width="0.9"/><path d="M707.7,342.7 l16.1,0.0" stroke="#fff" stroke-opacity="0.48" stroke-width="0.9"/><path d="M711.8,341.0 l18.2,-20.1" stroke="#fff" stroke-opacity="0.49" stroke-width="0.9"/><path d="M711.8,341.0 l19.4,0.1" stroke="#fff" stroke-opacity="0.49" stroke-width="0.9"/><path d="M716.0,339.3 l17.1,-19.0" stroke="#fff" stroke-opacity="0.49" stroke-width="0.9"/><path d="M716.0,339.3 l30.4,0.4" stroke="#fff" stroke-opacity="0.49" stroke-width="0.9"/><path d="M720.1,337.6 l17.0,-19.1" stroke="#fff" stroke-opacity="0.50" stroke-width="0.9"/><path d="M720.1,337.6 l26.7,0.5" stroke="#fff" stroke-opacity="0.50" stroke-width="0.9"/><path d="M724.3,335.9 l14.8,-16.7" stroke="#fff" stroke-opacity="0.50" stroke-width="0.9"/><path d="M724.3,335.9 l17.6,0.4" stroke="#fff" stroke-opacity="0.50" stroke-width="0.9"/><path d="M728.4,334.2 l12.3,-14.1" stroke="#fff" stroke-opacity="0.51" stroke-width="0.9"/><path d="M728.4,334.2 l20.5,0.5" stroke="#fff" stroke-opacity="0.51" stroke-width="0.9"/><path d="M732.6,332.6 l18.8,-21.8" stroke="#fff" stroke-opacity="0.52" stroke-width="0.9"/><path d="M732.6,332.6 l25.8,0.8" stroke="#fff" stroke-opacity="0.52" stroke-width="0.9"/><path d="M736.8,331.0 l18.2,-21.3" stroke="#fff" stroke-opacity="0.52" stroke-width="0.9"/><path d="M736.8,331.0 l34.4,1.2" stroke="#fff" stroke-opacity="0.52" stroke-width="0.9"/><path d="M741.0,329.4 l14.5,-17.1" stroke="#fff" stroke-opacity="0.53" stroke-width="0.9"/><path d="M741.0,329.4 l24.0,1.0" stroke="#fff" stroke-opacity="0.53" stroke-width="0.9"/><path d="M745.2,327.8 l20.9,-24.8" stroke="#fff" stroke-opacity="0.53" stroke-width="0.9"/><path d="M745.2,327.8 l21.2,1.0" stroke="#fff" stroke-opacity="0.53" stroke-width="0.9"/><path d="M749.4,326.2 l13.8,-16.6" stroke="#fff" stroke-opacity="0.54" stroke-width="0.9"/><path d="M749.4,326.2 l28.0,1.4" stroke="#fff" stroke-opacity="0.54" stroke-width="0.9"/><path d="M753.6,324.6 l15.4,-18.7" stroke="#fff" stroke-opacity="0.54" stroke-width="0.9"/><path d="M753.6,324.6 l29.0,1.6" stroke="#fff" stroke-opacity="0.54" stroke-width="0.9"/><path d="M757.8,323.1 l17.3,-21.2" stroke="#fff" stroke-opacity="0.55" stroke-width="0.9"/><path d="M757.8,323.1 l34.4,2.1" stroke="#fff" stroke-opacity="0.55" stroke-width="0.9"/><path d="M762.0,321.6 l22.4,-27.8" stroke="#fff" stroke-opacity="0.56" stroke-width="0.9"/><path d="M762.0,321.6 l27.8,1.8" stroke="#fff" stroke-opacity="0.56" stroke-width="0.9"/><path d="M766.2,320.1 l23.5,-29.3" stroke="#fff" stroke-opacity="0.56" stroke-width="0.9"/><path d="M766.2,320.1 l34.4,2.4" stroke="#fff" stroke-opacity="0.56" stroke-width="0.9"/><path d="M770.5,318.6 l17.5,-22.1" stroke="#fff" stroke-opacity="0.57" stroke-width="0.9"/><path d="M770.5,318.6 l45.5,3.4" stroke="#fff" stroke-opacity="0.57" stroke-width="0.9"/><path d="M774.7,317.1 l19.5,-24.8" stroke="#fff" stroke-opacity="0.57" stroke-width="0.9"/><path d="M774.7,317.1 l29.4,2.3" stroke="#fff" stroke-opacity="0.57" stroke-width="0.9"/><path d="M779.0,315.7 l17.9,-23.0" stroke="#fff" stroke-opacity="0.58" stroke-width="0.9"/><path d="M779.0,315.7 l41.6,3.5" stroke="#fff" stroke-opacity="0.58" stroke-width="0.9"/><path d="M783.3,314.3 l29.7,-38.5" stroke="#fff" stroke-opacity="0.58" stroke-width="0.9"/><path d="M783.3,314.3 l46.3,4.1" stroke="#fff" stroke-opacity="0.58" stroke-width="0.9"/><path d="M787.5,312.9 l23.4,-30.7" stroke="#fff" stroke-opacity="0.59" stroke-width="0.9"/><path d="M787.5,312.9 l35.0,3.3" stroke="#fff" stroke-opacity="0.59" stroke-width="0.9"/><path d="M787.5,312.9 Q798.4,299.8 803.6,286.5" stroke="#fff" stroke-opacity="0.60" stroke-width="1" fill="none"/><path d="M787.5,312.9 Q799.7,298.5 805.9,284.1" stroke="#fff" stroke-opacity="0.60" stroke-width="1" fill="none"/><path d="M787.5,312.9 Q800.1,298.2 807.0,283.7" stroke="#fff" stroke-opacity="0.60" stroke-width="1" fill="none"/><path d="M787.5,312.9 Q800.3,298.2 807.8,283.8" stroke="#fff" stroke-opacity="0.60" stroke-width="1" fill="none"/><path d="M787.5,312.9 Q801.2,297.4 809.6,282.6" stroke="#fff" stroke-opacity="0.60" stroke-width="1" fill="none"/><path d="M787.5,312.9 Q801.4,297.4 810.3,282.9" stroke="#fff" stroke-opacity="0.60" stroke-width="1" fill="none"/><path d="M787.5,312.9 Q802.5,296.4 812.7,281.1" stroke="#fff" stroke-opacity="0.60" stroke-width="1" fill="none"/><path d="M787.5,312.9 Q802.6,296.5 813.4,281.7" stroke="#fff" stroke-opacity="0.60" stroke-width="1" fill="none"/><path d="M787.5,312.9 Q802.3,297.1 813.2,283.1" stroke="#fff" stroke-opacity="0.60" stroke-width="1" fill="none"/><path d="M787.5,312.9 Q803.6,295.9 816.0,281.2" stroke="#fff" stroke-opacity="0.60" stroke-width="1" fill="none"/><path d="M787.5,312.9 Q802.6,297.2 814.5,284.1" stroke="#fff" stroke-opacity="0.60" stroke-width="1" fill="none"/><path d="M787.5,312.9 Q803.6,296.5 816.7,283.0" stroke="#fff" stroke-opacity="0.60" stroke-width="1" fill="none"/><path d="M787.5,312.9 Q803.4,296.9 816.7,284.2" stroke="#fff" stroke-opacity="0.60" stroke-width="1" fill="none"/><path d="M787.5,312.9 Q803.0,297.4 816.5,285.6" stroke="#fff" stroke-opacity="0.60" stroke-width="1" fill="none"/><path d="M787.5,312.9 Q802.6,298.0 816.1,287.1" stroke="#fff" stroke-opacity="0.60" stroke-width="1" fill="none"/><path d="M787.5,312.9 Q803.6,297.3 818.3,286.2" stroke="#fff" stroke-opacity="0.60" stroke-width="1" fill="none"/><path d="M787.5,312.9 Q802.2,298.9 815.9,289.3" stroke="#fff" stroke-opacity="0.60" stroke-width="1" fill="none"/><path d="M787.5,312.9 Q802.8,298.5 817.3,289.1" stroke="#fff" stroke-opacity="0.60" stroke-width="1" fill="none"/><path d="M787.5,312.9 Q803.1,298.5 818.2,289.4" stroke="#fff" stroke-opacity="0.60" stroke-width="1" fill="none"/><path d="M787.5,312.9 Q801.6,300.0 815.5,292.4" stroke="#fff" stroke-opacity="0.60" stroke-width="1" fill="none"/><path d="M787.5,312.9 Q801.3,300.5 815.2,293.5" stroke="#fff" stroke-opacity="0.60" stroke-width="1" fill="none"/><path d="M787.5,312.9 Q801.5,300.5 815.8,293.9" stroke="#fff" stroke-opacity="0.60" stroke-width="1" fill="none"/><path d="M787.5,312.9 Q801.0,301.1 814.9,295.3" stroke="#fff" stroke-opacity="0.60" stroke-width="1" fill="none"/><path d="M787.5,312.9 L803.6,286.5 L805.9,284.1 L807.0,283.7 L807.8,283.8 L809.6,282.6 L810.3,282.9 L812.7,281.1 L813.4,281.7 L813.2,283.1 L816.0,281.2 L814.5,284.1 L816.7,283.0 L816.7,284.2 L816.5,285.6 L816.1,287.1 L818.3,286.2 L815.9,289.3 L817.3,289.1 L818.2,289.4 L815.5,292.4 L815.2,293.5 L815.8,293.9 L814.9,295.3Z" fill="#fff" fill-opacity="0.62" filter="url(#b1)"/><ellipse cx="805.1" cy="294.8" rx="5.9" ry="10.9" transform="rotate(44.3 805.1 294.8)" fill="#fff" fill-opacity="0.85" filter="url(#b2)"/></g><path d="M300,520 C330,478 380,445 430,402 C470,368 510,352 560,349 C585,348 606,356 614,380 L620,405 L632,433 L652,470 C672,492 684,508 690,521 C696,535 698,546 700,556 L712,580 L720,600 L722,625 L719,652 L723,680 L729,708 L732,737 L724,770 L368,770 C382,752 392,738 400,727 L428,703 L456,675 L484,644 L511,605 L498,593 L470,579 L450,568 C440,560 420,552 400,548 L380,543 Z" fill="#f1f1f1" filter="url(#fuzz)"/><path d="M610.1,378.9 L623.7,389.5 L612.4,387.6ZM611.6,384.6 L621.1,392.7 L613.9,393.3ZM613.1,390.4 L623.0,396.4 L615.4,399.1ZM614.6,396.1 L629.8,406.1 L616.9,404.8ZM615.7,402.5 L629.0,405.6 L619.2,410.8ZM617.7,407.2 L633.8,414.6 L621.2,415.4ZM619.7,411.8 L633.4,420.3 L623.2,420.1ZM621.7,416.5 L633.9,421.7 L625.2,424.8ZM623.7,421.2 L633.7,427.4 L627.2,429.4ZM625.7,425.8 L635.5,432.9 L629.2,434.1ZM627.5,430.9 L643.5,436.9 L631.7,438.8ZM630.0,435.5 L646.6,441.3 L634.2,443.5ZM632.5,440.2 L645.0,446.9 L636.7,448.1ZM635.0,444.8 L649.4,452.4 L639.2,452.7ZM637.5,449.4 L650.6,453.5 L641.7,457.3ZM640.0,454.0 L656.2,462.0 L644.2,462.0ZM642.5,458.7 L655.8,467.5 L646.7,466.6ZM645.0,463.3 L655.0,469.0 L649.2,471.2ZM647.1,469.0 L661.6,473.8 L653.1,475.7ZM650.8,473.1 L669.0,474.7 L656.7,479.9ZM654.4,477.3 L670.0,482.5 L660.4,484.1ZM658.1,481.5 L670.7,483.3 L664.1,488.2ZM661.8,485.6 L679.2,486.8 L667.7,492.4ZM665.4,489.8 L681.9,492.1 L671.4,496.6ZM669.3,493.2 L686.2,496.0 L674.1,500.8ZM672.0,497.5 L688.9,502.2 L676.7,505.2ZM674.7,501.8 L690.7,505.0 L679.4,509.5ZM677.3,506.2 L693.1,510.6 L682.1,513.8ZM680.0,510.5 L691.9,514.3 L684.7,518.2ZM682.7,514.8 L696.0,516.7 L687.4,522.5ZM686.0,518.0 L700.4,523.2 L688.5,526.6ZM687.4,523.0 L695.8,529.7 L689.9,531.6ZM688.9,528.0 L703.8,534.6 L691.3,536.6ZM690.3,533.0 L699.3,538.9 L692.8,541.6ZM691.7,538.0 L701.3,548.6 L694.2,546.6ZM693.2,543.0 L706.7,552.5 L695.6,551.6ZM694.6,548.0 L707.6,553.0 L697.1,556.6ZM695.5,553.8 L709.3,558.7 L699.6,561.8ZM697.9,558.6 L714.6,565.6 L702.0,566.6ZM700.3,563.4 L715.1,565.5 L704.4,571.4ZM702.7,568.2 L720.0,575.6 L706.8,576.2ZM705.1,573.0 L720.3,575.2 L709.2,581.0ZM707.7,577.4 L717.9,582.8 L711.1,585.8ZM709.7,582.4 L720.7,593.0 L713.1,590.8ZM711.7,587.4 L727.2,594.6 L715.1,595.8ZM713.7,592.4 L729.3,599.6 L717.1,600.8ZM716.7,596.3 L725.4,604.3 L717.4,605.2ZM717.1,601.3 L724.8,614.0 L717.8,610.2ZM717.5,606.3 L725.7,615.9 L718.2,615.2ZM717.9,611.3 L727.5,618.7 L718.6,620.2ZM718.3,616.3 L726.9,625.6 L719.0,625.2ZM719.5,620.7 L729.2,632.4 L718.5,629.6ZM718.9,626.1 L725.4,641.7 L717.9,635.0ZM718.3,631.5 L726.2,646.4 L717.3,640.4ZM717.7,636.9 L727.0,646.2 L716.7,645.8ZM717.1,642.3 L724.7,654.3 L716.1,651.2ZM715.5,648.5 L728.2,657.2 L716.7,657.4ZM716.3,654.1 L728.8,664.2 L717.5,663.0ZM717.1,659.7 L726.5,672.5 L718.3,668.6ZM717.9,665.3 L726.4,677.9 L719.1,674.2ZM718.7,670.9 L726.9,677.8 L719.9,679.8ZM719.2,676.7 L729.3,688.2 L721.1,685.5ZM720.4,682.3 L734.7,687.5 L722.3,691.1ZM721.6,687.9 L733.3,697.1 L723.5,696.7ZM722.8,693.5 L736.1,700.2 L724.7,702.3ZM724.0,699.1 L735.5,707.3 L725.9,707.9ZM725.6,704.3 L738.4,712.9 L726.5,713.3ZM726.2,710.1 L739.8,718.8 L727.1,719.1ZM726.8,715.9 L735.6,728.0 L727.7,724.9ZM727.4,721.7 L737.7,729.5 L728.3,730.7ZM728.0,727.5 L739.3,735.0 L728.9,736.5ZM730.0,732.4 L738.4,747.5 L728.0,741.2ZM728.8,737.6 L737.3,752.2 L726.8,746.4ZM727.6,742.8 L733.5,755.2 L725.6,751.5ZM726.5,747.9 L731.9,763.8 L724.5,756.7ZM725.3,753.1 L728.6,768.4 L723.3,761.9ZM724.1,758.3 L728.1,768.8 L722.1,767.0Z" fill="#f1f1f1"/><path d="M515.7,603.4 L503.7,612.5 L510.6,610.8ZM513.3,607.0 L502.7,612.6 L508.2,614.4ZM510.8,610.5 L499.9,614.6 L505.7,617.9ZM508.4,614.1 L497.3,620.6 L503.3,621.5ZM505.9,617.6 L493.2,624.9 L500.8,625.0ZM503.5,621.1 L492.6,626.3 L498.3,628.5ZM501.0,624.7 L491.7,629.3 L495.9,632.1ZM498.6,628.2 L486.0,634.9 L493.4,635.6ZM496.1,631.8 L485.8,635.8 L491.0,639.2ZM493.7,635.3 L481.6,643.3 L488.5,642.7ZM491.2,638.9 L481.4,642.9 L486.1,646.3ZM488.9,643.0 L475.4,650.0 L482.9,649.7ZM486.1,646.1 L476.3,649.9 L480.1,652.8ZM483.3,649.2 L471.0,655.5 L477.3,655.9ZM480.5,652.3 L469.6,654.7 L474.5,659.0ZM477.7,655.4 L467.9,659.7 L471.7,662.1ZM474.9,658.5 L463.4,663.9 L468.9,665.2ZM472.1,661.6 L461.9,666.3 L466.1,668.3ZM469.3,664.7 L456.0,672.7 L463.3,671.4ZM466.5,667.8 L456.1,670.2 L460.5,674.5ZM463.7,670.9 L452.8,672.8 L457.7,677.6ZM460.9,674.3 L446.8,681.2 L454.6,680.7ZM457.8,677.4 L444.0,682.2 L451.5,683.8ZM454.7,680.5 L444.3,683.4 L448.4,686.9ZM451.6,683.6 L441.2,685.6 L445.3,690.0ZM448.5,686.7 L437.7,691.1 L442.1,693.1ZM445.4,689.8 L434.9,694.6 L439.0,696.2ZM442.3,693.0 L428.7,697.5 L435.9,699.3ZM439.2,696.1 L426.5,701.0 L432.8,702.4ZM436.1,699.2 L425.9,701.7 L429.7,705.5ZM433.0,702.7 L421.0,705.3 L426.2,708.5ZM429.9,705.3 L414.9,710.0 L423.0,711.2ZM426.8,708.0 L414.2,711.8 L419.9,713.9ZM423.7,710.7 L411.3,713.1 L416.8,716.5ZM420.5,713.3 L407.6,718.3 L413.7,719.2ZM417.4,716.0 L402.9,719.7 L410.6,721.9ZM414.3,718.7 L399.7,723.1 L407.5,724.5ZM411.2,721.3 L397.8,724.9 L404.4,727.2ZM408.1,724.0 L396.9,726.6 L401.3,729.9ZM404.8,725.5 L394.9,729.1 L399.5,732.8ZM402.3,729.0 L390.1,736.7 L397.0,736.2ZM399.8,732.4 L387.5,738.8 L394.5,739.6ZM397.3,735.8 L387.0,741.8 L392.0,743.1ZM394.8,739.2 L383.2,746.0 L389.5,746.5ZM392.3,742.6 L380.5,749.8 L387.0,749.9ZM389.8,746.0 L378.8,749.5 L384.5,753.3ZM387.3,749.5 L374.5,756.8 L382.0,756.7ZM384.8,752.9 L373.9,759.0 L379.5,760.1ZM382.3,756.3 L371.8,758.9 L377.0,763.6ZM379.8,759.7 L369.9,763.8 L374.5,767.0ZM377.3,763.1 L363.6,771.1 L372.0,770.4Z" fill="#f1f1f1"/><path d="M417.8,548.5 L422.6,558.3 L425.8,552.6ZM421.5,550.4 L429.0,561.8 L429.6,554.4ZM425.3,552.3 L432.2,564.2 L433.3,556.3ZM429.0,554.2 L438.1,566.8 L437.1,558.2ZM432.8,556.0 L439.5,566.8 L440.8,560.1ZM436.5,557.9 L441.1,570.0 L444.6,561.9ZM440.3,559.8 L446.6,571.2 L448.3,563.8ZM444.0,561.7 L448.4,572.6 L452.1,565.7ZM447.9,563.4 L452.8,576.3 L455.8,567.8ZM451.9,565.6 L458.6,574.2 L459.8,570.0ZM455.9,567.8 L460.1,577.0 L463.8,572.2ZM459.9,570.0 L466.6,580.7 L467.8,574.4ZM463.9,572.2 L469.5,583.9 L471.8,576.6ZM467.8,574.5 L473.9,583.6 L475.8,578.6ZM471.8,576.5 L481.4,589.9 L479.8,580.6ZM475.8,578.5 L481.3,588.7 L483.8,582.6ZM479.8,580.5 L485.8,592.5 L487.8,584.6ZM483.8,582.5 L489.5,591.0 L491.8,586.6ZM487.8,584.5 L496.5,597.7 L495.8,588.6ZM491.8,586.5 L498.6,598.0 L499.8,590.6ZM497.1,588.1 L499.5,599.6 L503.7,594.2ZM500.3,591.1 L502.1,604.7 L507.0,597.2ZM503.6,594.1 L508.8,608.7 L510.2,600.2ZM506.8,597.1 L509.7,610.7 L513.5,603.2Z" fill="#e6e6e6"/><g clip-path="url(#bodyClip)" opacity="0.30"><rect x="330" y="330" width="450" height="460" fill="#fff" filter="url(#tex2)" transform="rotate(12 560 560)"/></g><g clip-path="url(#bodyClip)" opacity="0.22"><rect x="250" y="500" width="360" height="360" fill="url(#fadeG)" filter="url(#tex2)" transform="rotate(42 420 680)"/></g><path d="M425,555 C480,580 560,590 650,565 C620,600 560,612 511,605 C500,594 470,578 425,555Z" fill="#888" opacity="0.4" filter="url(#b6)"/><path d="M598,560 C604,585 596,610 584,632" stroke="#999" stroke-width="5" fill="none" opacity="0.35" filter="url(#b2)"/><path d="M251.500,551.500 C250,549 250.500,545 252.500,541 C256,532 264,521 273,513.300 C285,503 300,495.500 319,484 C327,479.500 335,475 342,471 L395,455 L395,545 C372,541 352,538 333,538 C310,538 282,542 264,547 C259,549 255,553 252,552Z" fill="url(#beakG)"/><path d="M258,545 C272,531 296,524 320,523 C345,521 370,521 395,521 L395,545 C372,541 352,538 333,538 C310,538 282,542 264,546Z" fill="#c4c4c4"/><path d="M258,545 C272,531 296,524 320,523 C345,521 370,521 395,521" stroke="#f6f6f6" stroke-width="1.2" fill="none" opacity="0.8"/><path d="M322,504 C330,496 342,488 358,482 C364,486 360,494 350,498 C340,502 330,504 322,504Z" fill="#7a7a7a" filter="url(#b1)" opacity="0.8"/><path d="M360,470 L395,455 L395,520 L350,515 C340,505 350,480 360,470Z" fill="#e9e9e9" filter="url(#fuzz)"/><path d="M352,476 L395,458 L395,518 L352,514 C344,505 346,486 352,476Z" fill="#707070" filter="url(#tex)" opacity="0.36"/></svg>
<div class="a" style="left:5px;top:94px;width:31px;height:23px;background:#373737;border-radius:2px"></div>
<svg style="left:9.5px;top:96.5px" width="20" height="20" viewBox="-10 -10 20 20"><g stroke="#d8d8d8" stroke-width="1.500" fill="none"><path d="M0 -6.500V6.500M-6.500 0H6.500"/><path d="M-2.500 -4.500L0 -7L2.500 -4.500M-2.500 4.500L0 7L2.500 4.500M-4.500 -2.500L-7 0L-4.500 2.500M4.500 -2.500L7 0L4.500 2.500"/></g><path d="M12 6.500V9.500H9z" fill="#bdbdbd"/></svg>
<svg style="left:43px;top:95px" width="20" height="20" viewBox="-10 -10 20 20"><rect x="-7.500" y="-6" width="15" height="12" fill="none" stroke="#d8d8d8" stroke-width="1.400" stroke-dasharray="3.200 1.900"/><path d="M12 6.500V9.500H9z" fill="#bdbdbd"/></svg>
<svg style="left:10px;top:122px" width="20" height="20" viewBox="-10 -10 20 20"><g stroke="#d8d8d8" stroke-width="1.400" fill="none"><ellipse cx="0.500" cy="-1.500" rx="7.500" ry="4.800" transform="rotate(-14)"/><circle cx="-5" cy="3.200" r="1.700"/><path d="M-5.500 4.800C-6.500 6.500 -5 8 -3 8"/></g><path d="M12 6.500V9.500H9z" fill="#bdbdbd"/></svg>
<svg style="left:43px;top:122px" width="20" height="20" viewBox="-10 -10 20 20"><path d="M1 -5.500A5.200 5.200 0 1 0 1.500 4.500" fill="none" stroke="#d8d8d8" stroke-width="1.300" stroke-dasharray="1.300 1.500"/><path d="M9 -8L4.200 0.600L1.900 -1.400Z" fill="#d8d8d8"/><path d="M1.200 -0.500L3.600 1.600C2.500 4.500 -0.500 5.700 -3.500 5.500C-1.800 4 -1.500 1.500 1.200 -0.500Z" fill="#d8d8d8"/><path d="M12 6.500V9.500H9z" fill="#bdbdbd"/></svg>
<svg style="left:10px;top:148px" width="20" height="20" viewBox="-10 -10 20 20"><g stroke="#d8d8d8" stroke-width="2" fill="none"><path d="M-5 -8.500V5H4.500"/><path d="M-4 -4H5V8.500"/><path d="M-10 -4H-7.500M7.500 5H10"/></g><path d="M12 6.500V9.500H9z" fill="#bdbdbd"/></svg>
<svg style="left:43px;top:148px" width="20" height="20" viewBox="-10 -10 20 20"><g fill="#d8d8d8"><path d="M4.500 -8.500a2.600 2.600 0 0 1 3.800 3.800L6 -2.500 2.200 -6.200Z"/><path d="M0.500 -6.500L6.500 -0.500 5.200 0.800 -0.800 -5.200Z"/></g><path d="M1 -3L-6.500 4.500-7.500 7.500-4.500 6.500 3 -1" fill="none" stroke="#d8d8d8" stroke-width="1.400"/><path d="M12 6.500V9.500H9z" fill="#bdbdbd"/></svg>
<svg style="left:10px;top:174px" width="20" height="20" viewBox="-10 -10 20 20"><g transform="rotate(-40)"><rect x="-8" y="-3.700" width="16" height="7.400" rx="2.200" fill="#d8d8d8"/><rect x="-2.700" y="-2.700" width="5.400" height="5.400" fill="#535353"/><circle cx="-1.300" cy="-1.300" r="0.800" fill="#d8d8d8"/><circle cx="1.300" cy="-1.300" r="0.800" fill="#d8d8d8"/><circle cx="-1.300" cy="1.300" r="0.800" fill="#d8d8d8"/><circle cx="1.300" cy="1.300" r="0.800" fill="#d8d8d8"/></g><path d="M-8 -2.500A4.500 4.500 0 0 1 -1 -7.500" fill="none" stroke="#d8d8d8" stroke-width="1.100" stroke-dasharray="1.200 1.300"/><path d="M12 6.500V9.500H9z" fill="#bdbdbd"/></svg>
<svg style="left:43px;top:174px" width="20" height="20" viewBox="-10 -10 20 20"><path d="M8.200 -8.400L2.500 3L-1.400 -0.400Z" fill="#d8d8d8"/><path d="M-1.700 1L1.100 3.500C-0.300 6.600 -4 7.900 -7.800 7.600C-5.800 6 -5 3.200 -1.700 1Z" fill="#d8d8d8"/><path d="M12 6.500V9.500H9z" fill="#bdbdbd"/></svg>
<svg style="left:10px;top:200px" width="20" height="20" viewBox="-10 -10 20 20"><g fill="#d8d8d8"><circle cx="0.500" cy="-4.800" r="2.700"/><path d="M-1 -3.500H2L2.600 1H-1.600Z"/><rect x="-6" y="0.300" width="13" height="3.400" rx="0.800"/><rect x="-5.500" y="5.500" width="12" height="1.300"/></g><path d="M12 6.500V9.500H9z" fill="#bdbdbd"/></svg>
<svg style="left:43px;top:200px" width="20" height="20" viewBox="-10 -10 20 20"><path d="M8.500 -8.800L3.600 1.600L0.300 -1.200Z" fill="#d8d8d8"/><path d="M-0.400 -0.200L2.700 2.500C1.600 5.600 -2 7.300 -5.800 7C-3.800 5.300 -3.500 2.200 -0.400 -0.200Z" fill="#d8d8d8"/><path d="M-5 -5.500H1.500" fill="none" stroke="#d8d8d8" stroke-width="1.200"/><path d="M-8.500 -3.200L-6.200 -6.800L-4 -3.200Z" fill="#d8d8d8"/><path d="M4.500 5.500A6 6 0 0 0 7 0" fill="none" stroke="#d8d8d8" stroke-width="1" stroke-dasharray="1 1.300"/><path d="M12 6.500V9.500H9z" fill="#bdbdbd"/></svg>
<svg style="left:10px;top:226px" width="20" height="20" viewBox="-10 -10 20 20"><path d="M-4 -1.500L1 -6.500L7 -3L2 2.500Z" fill="#d8d8d8"/><path d="M-4 -1.500L2 2.500L-1.300 6H-4.500L-7 3.200Z" fill="none" stroke="#d8d8d8" stroke-width="1.200"/><path d="M-3 6.700H8" stroke="#d8d8d8" stroke-width="1.200"/><path d="M12 6.500V9.500H9z" fill="#bdbdbd"/></svg>
<svg style="left:45px;top:229px" width="16" height="13" viewBox="0 0 18 15"><defs><linearGradient id="tg" x1="0" x2="1"><stop offset="0" stop-color="#303030"/><stop offset="1" stop-color="#dcdcdc"/></linearGradient></defs><rect x="0.600" y="0.600" width="16.800" height="13.800" fill="url(#tg)" stroke="#d8d8d8" stroke-width="1.200"/></svg>
<svg style="left:43px;top:226px" width="20" height="20" viewBox="-10 -10 20 20"><path d="M12 6.500V9.500H9z" fill="#bdbdbd"/></svg>
<svg style="left:10px;top:252px" width="20" height="20" viewBox="-10 -10 20 20"><path d="M-7.500 8L-4 0.500C-6.500 -1.500 -5.500 -5 -2.500 -6.500C1 -8.300 6.500 -8 7.500 -5C8.200 -2.500 6 -1 4 -0.500C4.500 1.500 2 3 0.500 2L-3.500 8.500Z" fill="#d8d8d8"/><path d="M12 6.500V9.500H9z" fill="#bdbdbd"/></svg>
<svg style="left:43px;top:252px" width="20" height="20" viewBox="-10 -10 20 20"><path d="M-8 -2C-8 -6 -3 -8 1 -7.500C5 -7 9 -3.500 8.500 2C8.300 4.500 7 7 6 7C4.500 5 3 3.500 0 4C-4 4.500 -8 2 -8 -2Z" fill="#d8d8d8"/><ellipse cx="-1" cy="-1.500" rx="3" ry="2.200" fill="#535353"/><path d="M12 6.500V9.500H9z" fill="#bdbdbd"/></svg>
<svg style="left:10px;top:279px" width="20" height="20" viewBox="-10 -10 20 20"><g transform="rotate(42)"><path d="M-3.300 -8.500H3.300V-5.500H-3.300Z" fill="#d8d8d8"/><path d="M-3.500 -4C-5.500 0 -3 5 0 9.500C3 5 5.500 0 3.500 -4Z" fill="none" stroke="#d8d8d8" stroke-width="1.400"/><path d="M0 9V2" stroke="#d8d8d8" stroke-width="1.100"/><circle cx="0" cy="1" r="1.300" fill="#d8d8d8"/></g><path d="M12 6.500V9.500H9z" fill="#bdbdbd"/></svg>
<div class="a" style="left:43px;top:276px;width:20px;height:24px;font-family:'Liberation Serif',serif;font-weight:bold;font-size:20px;line-height:24px;text-align:center;color:#d8d8d8">T</div>
<svg style="left:43px;top:279px" width="20" height="20" viewBox="-10 -10 20 20"><path d="M12 6.500V9.500H9z" fill="#bdbdbd"/></svg>
<svg style="left:10px;top:304px" width="20" height="20" viewBox="-10 -10 20 20"><path d="M-5.500 -9.500V6L-2 2.800L0.700 9L3.200 7.900L0.600 1.800L5.500 1.500Z" fill="#d8d8d8"/><path d="M12 6.500V9.500H9z" fill="#bdbdbd"/></svg>
<svg style="left:43px;top:304px" width="20" height="20" viewBox="-10 -10 20 20"><rect x="-8.300" y="-6.300" width="16.600" height="12.600" fill="#7b7b7b" stroke="#d8d8d8" stroke-width="1.300"/><path d="M12 6.500V9.500H9z" fill="#bdbdbd"/></svg>
<svg style="left:10px;top:330px" width="20" height="20" viewBox="-10 -10 20 20"><path d="M-3.500 8.500C-5.500 6 -7.500 3 -8.500 0.500C-9 -1 -7.300 -1.800 -6.300 -0.500L-4.500 1.800V-5.500C-4.500 -7.200 -2.500 -7.200 -2.500 -5.500V-7.500C-2.500 -9.200 -0.300 -9.200 -0.300 -7.500V-6.800C-0.300 -8.500 1.900 -8.500 1.900 -6.800V-5.500C1.900 -7 4 -7 4 -5.500V-2C4 -3.500 6.200 -3.500 6.200 -1.800V3C6.200 5.500 5.500 7 4.500 8.500Z" fill="#d8d8d8"/><path d="M12 6.500V9.500H9z" fill="#bdbdbd"/></svg>
<svg style="left:43px;top:330px" width="20" height="20" viewBox="-10 -10 20 20"><circle cx="-2.200" cy="-2.500" r="5.600" fill="none" stroke="#d8d8d8" stroke-width="1.600"/><path d="M2 1.800L8 8" stroke="#d8d8d8" stroke-width="2.400" stroke-linecap="round"/><path d="M-5 -3.500A3.300 3.300 0 0 1 -1.500 -6" stroke="#d8d8d8" stroke-width="1" fill="none"/></svg>
<svg style="left:10px;top:356px" width="20" height="20" viewBox="-10 -10 20 20"><circle cx="-6" cy="0" r="1.900" fill="#d8d8d8"/><circle cx="0" cy="0" r="1.900" fill="#d8d8d8"/><circle cx="6" cy="0" r="1.900" fill="#d8d8d8"/><path d="M12 6.500V9.500H9z" fill="#bdbdbd"/></svg>
<div class="a" style="left:34px;top:403px;width:24px;height:24px;background:#000;border:1px solid #f4f4f4"></div>
<div class="a" style="left:18px;top:387px;width:26px;height:25px;background:#fff;border-right:1px solid #535353;border-bottom:1px solid #535353"></div>
<svg style="left:50px;top:385px" width="11" height="11" viewBox="0 0 11 11"><g stroke="#d8d8d8" stroke-width="1.400" fill="none"><path d="M3 2.500H8V8"/></g><path d="M0 2.500L3.800 0V5zM8 11L5.500 7.200H10.500z" fill="#d8d8d8"/></svg>
<svg style="left:17px;top:419px" width="11" height="11" viewBox="0 0 11 11"><rect x="3.500" y="3.500" width="7" height="7" fill="#111" stroke="#e8e8e8"/><rect x="0" y="0" width="7" height="7" fill="#dcdcdc"/></svg>
<svg style="left:11px;top:441px" width="17" height="13" viewBox="0 0 17 13"><rect x="0.650" y="0.650" width="15.700" height="11.700" fill="none" stroke="#d8d8d8" stroke-width="1.300"/><circle cx="8.500" cy="6.500" r="3.600" fill="none" stroke="#d8d8d8" stroke-width="1" stroke-dasharray="1 1.100"/></svg>
<svg style="left:44px;top:441px" width="18" height="14" viewBox="0 0 18 14"><rect x="5.650" y="0.650" width="11.700" height="8.700" fill="#535353" stroke="#d8d8d8" stroke-width="1.300"/><rect x="5" y="0" width="13" height="2.500" fill="#d8d8d8"/><rect x="0.650" y="4.650" width="10.700" height="8.700" fill="#535353" stroke="#d8d8d8" stroke-width="1.300"/><path d="M19 11V14H16z" fill="#bdbdbd"/></svg>
<div class="a" style="left:1070px;top:65px;width:324px;height:12px;background:#404040;"></div>
<svg style="left:1094px;top:68px" width="8" height="6" viewBox="0 0 8 6"><path d="M3.200 0L0.300 3L3.200 6zM7.200 0L4.300 3L7.200 6z" fill="#c8c8c8"/></svg>
<svg style="left:1380px;top:68px" width="8" height="6" viewBox="0 0 8 6"><path d="M0.300 0L3.200 3L0.300 6zM4.300 0L7.200 3L4.300 6z" fill="#c8c8c8"/></svg>
<div class="a" style="left:1070px;top:77px;width:39px;height:737px;background:#535353;"></div>
<div class="a" style="left:1108px;top:77px;width:2px;height:737px;background:#3c3c3c;"></div>
<div class="a" style="left:1079px;top:80px;width:1px;height:4px;background:#6a6a6a;"></div>
<div class="a" style="left:1081px;top:80px;width:1px;height:4px;background:#6a6a6a;"></div>
<div class="a" style="left:1083px;top:80px;width:1px;height:4px;background:#6a6a6a;"></div>
<div class="a" style="left:1085px;top:80px;width:1px;height:4px;background:#6a6a6a;"></div>
<div class="a" style="left:1087px;top:80px;width:1px;height:4px;background:#6a6a6a;"></div>
<div class="a" style="left:1089px;top:80px;width:1px;height:4px;background:#6a6a6a;"></div>
<div class="a" style="left:1091px;top:80px;width:1px;height:4px;background:#6a6a6a;"></div>
<div class="a" style="left:1093px;top:80px;width:1px;height:4px;background:#6a6a6a;"></div>
<div class="a" style="left:1095px;top:80px;width:1px;height:4px;background:#6a6a6a;"></div>
<div class="a" style="left:1097px;top:80px;width:1px;height:4px;background:#6a6a6a;"></div>
<div class="a" style="left:1070px;top:116px;width:38px;height:1px;background:#3c3c3c;"></div>
<svg style="left:1083px;top:92px" width="16" height="17" viewBox="0 0 16 17"><rect x="0.500" y="0.500" width="4" height="4" fill="none" stroke="#d4d4d4"/><rect x="0.500" y="6.500" width="4" height="4" fill="none" stroke="#d4d4d4"/><rect x="0" y="12" width="5" height="5" fill="#d4d4d4"/><path d="M11 2.500C14.500 5 14 10.500 9.500 14" fill="none" stroke="#d4d4d4" stroke-width="2"/><path d="M7.500 2.500L13 0.500L12 6z" fill="#d4d4d4"/></svg>
<div class="a" style="left:1110px;top:77px;width:283px;height:27px;background:#424242;"></div>
<div class="a" style="left:1110px;top:77px;width:42px;height:28px;background:#535353;"></div>
<div class="a" style="left:1152px;top:77px;width:1px;height:27px;background:#383838;"></div>
<div class="a" style="left:1192px;top:77px;width:1px;height:27px;background:#383838;"></div>
<div class="t" style="left:1119px;top:84px;color:#f0f0f0;">颜色</div>
<div class="t" style="left:1161px;top:84px;color:#a4a4a4;">色板</div>
<svg style="left:1377px;top:86px" width="11" height="9" viewBox="0 0 11 9"><path d="M0 0.500H11M0 3.100H11M0 5.700H11M0 8.300H11" stroke="#c9c9c9" stroke-width="1"/></svg>
<div class="a" style="left:1110px;top:104px;width:283px;height:341px;background:#535353;"></div>
<div class="a" style="left:1152px;top:104px;width:241px;height:1px;background:#3f3f3f;"></div>
<div class="a" style="left:1130px;top:129px;width:18px;height:18px;background:#000;border:1px solid #fff"></div>
<div class="a" style="left:1118px;top:117px;width:22px;height:21px;background:#fff;border:1px solid #535353;outline:1px solid #8a8a8a;outline-offset:-1px"></div>
<div class="a" style="left:1119px;top:118px;width:20px;height:19px;background:#fff;"></div>
<div class="t" style="left:1158px;top:145.5px;color:#d6d6d6;">K</div>
<div class="a" style="left:1174px;top:145px;width:143px;height:4px;background:linear-gradient(90deg,#fff 0%,#d8d8d8 25%,#a2a2a2 50%,#5e5e5e 75%,#000 100%);"></div>
<svg style="left:1168px;top:151px" width="13" height="11" viewBox="0 0 13 11"><path d="M6.500 0.500L12 8.500Q12 10.500 10 10.500H3Q1 10.500 1 8.500Z" fill="#fff"/></svg>
<div class="a" style="left:1322px;top:143px;width:40px;height:19px;background:#454545;border:1px solid #5c5c5c"></div>
<div class="t" style="left:1325px;top:145.5px;color:#e0e0e0;">0</div>
<div class="t" style="left:1366px;top:145.5px;color:#e0e0e0;">%</div>
<div class="a" style="left:1119px;top:201px;width:251px;height:234px;background:linear-gradient(to bottom,#fff 0%,rgba(255,255,255,.42) 24%,rgba(255,255,255,0) 49%,rgba(0,0,0,0) 51%,rgba(0,0,0,.45) 76%,#000 100%),linear-gradient(to right,#f00 0%,#ff0 16.600%,#0f0 33.300%,#0ff 50%,#00f 66.600%,#f0f 83.300%,#f00 100%)"></div>
<div class="a" style="left:1370px;top:201px;width:8px;height:117px;background:#fff;"></div>
<div class="a" style="left:1370px;top:318px;width:8px;height:117px;background:#000;"></div>
<div class="a" style="left:1110px;top:444px;width:283px;height:3px;background:#3c3c3c;"></div>
<div class="a" style="left:1110px;top:447px;width:283px;height:27px;background:#424242;"></div>
<div class="a" style="left:1153px;top:447px;width:42px;height:28px;background:#535353;"></div>
<div class="a" style="left:1152px;top:447px;width:1px;height:27px;background:#383838;"></div>
<div class="a" style="left:1195px;top:447px;width:1px;height:27px;background:#383838;"></div>
<div class="a" style="left:1237px;top:447px;width:1px;height:27px;background:#383838;"></div>
<div class="t" style="left:1120px;top:454px;color:#a4a4a4;">图层</div>
<div class="t" style="left:1162px;top:454px;color:#f0f0f0;">通道</div>
<div class="t" style="left:1204px;top:454px;color:#a4a4a4;">路径</div>
<svg style="left:1377px;top:456px" width="11" height="9" viewBox="0 0 11 9"><path d="M0 0.500H11M0 3.100H11M0 5.700H11M0 8.300H11" stroke="#c9c9c9" stroke-width="1"/></svg>
<div class="a" style="left:1110px;top:474px;width:283px;height:340px;background:#4d4d4d;"></div>
<div class="a" style="left:1110px;top:479px;width:267px;height:136px;background:#444;"></div>
<div class="a" style="left:1153px;top:474px;width:240px;height:1px;background:#3f3f3f;"></div>
<svg width="0" height="0" style="left:0;top:0"><defs><symbol id="thumb" viewBox="0 0 32 21"><rect width="32" height="21" fill="#060606"/><path d="M8 14C9 12.300 11 11.200 12.500 10.300C14 8.500 16.500 7.400 18.300 7.400C19.600 7.500 20 8.300 20.300 9.300C21.500 10.800 22.800 12.800 23.200 14.500C23.700 16.500 23.800 19 23.500 21H12.200C13.500 19.500 15.800 17.800 16.600 16C15.800 15 14.500 14.200 12.800 13.700C11 13.500 9.500 13.700 8 14Z" fill="#e4e4e4"/><path d="M19.800 8.600L20.200 2.500M19.900 8.600L21.800 3M20 8.800L24 4.200M20.100 9L25.500 5.800M20.100 9.200L26.500 6.200M20.100 9.200L23.500 6.800" stroke="#cfcfcf" stroke-width="0.450"/><ellipse cx="20.200" cy="1.800" rx="1.100" ry="1.300" fill="#eee"/><ellipse cx="22" cy="2.300" rx="1" ry="1.200" fill="#eee"/><ellipse cx="24.400" cy="3.400" rx="1.300" ry="1.100" fill="#eee"/><ellipse cx="25.900" cy="5" rx="0.900" ry="0.800" fill="#ddd"/><ellipse cx="26.800" cy="5.900" rx="0.800" ry="0.400" fill="#eee"/><ellipse cx="23.700" cy="6.300" rx="0.900" ry="0.700" fill="#eee"/></symbol></defs></svg>
<div class="a" style="left:1110px;top:480px;width:267px;height:26px;background:#535353;"></div>
<div class="a" style="left:1133px;top:480px;width:1px;height:26px;background:#464646;"></div>
<div class="a" style="left:1115px;top:487px;width:12px;height:12px;background:transparent;border:1px solid #606060;opacity:.8"></div>
<svg style="left:1135px;top:483px" width="32" height="21"><use href="#thumb" width="32" height="21"/></svg>
<div class="t" style="left:1173px;top:483.5px;color:#f0f0f0;letter-spacing:-0.5px;font-size:11.5px">RGB</div>
<div class="t" style="left:1336px;top:483.5px;color:#e4e4e4;font-size:10.5px;letter-spacing:-0.2px">Ctrl+2</div>
<div class="a" style="left:1110px;top:507px;width:267px;height:26px;background:#535353;"></div>
<div class="a" style="left:1133px;top:507px;width:1px;height:26px;background:#464646;"></div>
<div class="a" style="left:1115px;top:514px;width:12px;height:12px;background:transparent;border:1px solid #606060;opacity:.8"></div>
<svg style="left:1135px;top:510px" width="32" height="21"><use href="#thumb" width="32" height="21"/></svg>
<div class="t" style="left:1173px;top:510.5px;color:#f0f0f0;">红</div>
<div class="t" style="left:1336px;top:510.5px;color:#e4e4e4;font-size:10.5px;letter-spacing:-0.2px">Ctrl+3</div>
<div class="a" style="left:1110px;top:534px;width:267px;height:26px;background:#535353;"></div>
<div class="a" style="left:1133px;top:534px;width:1px;height:26px;background:#464646;"></div>
<div class="a" style="left:1115px;top:541px;width:12px;height:12px;background:transparent;border:1px solid #606060;opacity:.8"></div>
<svg style="left:1135px;top:537px" width="32" height="21"><use href="#thumb" width="32" height="21"/></svg>
<div class="t" style="left:1173px;top:537.5px;color:#f0f0f0;">绿</div>
<div class="t" style="left:1336px;top:537.5px;color:#e4e4e4;font-size:10.5px;letter-spacing:-0.2px">Ctrl+4</div>
<div class="a" style="left:1110px;top:561px;width:267px;height:26px;background:#535353;"></div>
<div class="a" style="left:1133px;top:561px;width:1px;height:26px;background:#464646;"></div>
<div class="a" style="left:1115px;top:568px;width:12px;height:12px;background:transparent;border:1px solid #606060;opacity:.8"></div>
<svg style="left:1135px;top:564px" width="32" height="21"><use href="#thumb" width="32" height="21"/></svg>
<div class="t" style="left:1173px;top:564.5px;color:#f0f0f0;">蓝</div>
<div class="t" style="left:1336px;top:564.5px;color:#e4e4e4;font-size:10.5px;letter-spacing:-0.2px">Ctrl+5</div>
<div class="a" style="left:1110px;top:588px;width:267px;height:26px;background:#6a6a6a;"></div>
<div class="a" style="left:1133px;top:588px;width:1px;height:26px;background:#5a5a5a;"></div>
<svg style="left:1115px;top:596px" width="14" height="10" viewBox="0 0 14 10"><path d="M0.500 5C3 0.800 11 0.800 13.500 5C11 9.200 3 9.200 0.500 5Z" fill="#e6e6e6"/><circle cx="7" cy="5" r="2.300" fill="#555"/><circle cx="7" cy="5" r="1" fill="#e6e6e6"/></svg>
<svg style="left:1135px;top:591px" width="32" height="21"><use href="#thumb" width="32" height="21"/></svg>
<div class="t" style="left:1173px;top:591.5px;color:#f0f0f0;">红 拷贝</div>
<div class="t" style="left:1336px;top:591.5px;color:#e4e4e4;font-size:10.5px;letter-spacing:-0.2px">Ctrl+6</div>
<div class="a" style="left:1377px;top:475px;width:16px;height:315px;background:#4a4a4a;"></div>
<div class="a" style="left:1110px;top:789px;width:283px;height:1px;background:#444;"></div>
<div class="a" style="left:1110px;top:790px;width:283px;height:24px;background:#4d4d4d;"></div>
<svg style="left:1264px;top:795.5px" width="12" height="12" viewBox="0 0 12 12"><circle cx="6" cy="6" r="5" fill="none" stroke="#e2e2e2" stroke-width="1.200" stroke-dasharray="1.400 1.400"/></svg>
<svg style="left:1291px;top:795.5px" width="14" height="11" viewBox="0 0 14 11"><rect width="14" height="11" fill="#9a9a9a"/><circle cx="7" cy="5.500" r="3" fill="#5a5a5a"/></svg>
<svg style="left:1325px;top:796.5px" width="12" height="12" viewBox="0 0 12 12"><path d="M0.600 0.600H11.400V11.400H4.500L0.600 7.500Z" fill="none" stroke="#e2e2e2" stroke-width="1.200"/><path d="M0.600 7.500H4.500V11.400" fill="none" stroke="#e2e2e2" stroke-width="1.200"/></svg>
<svg style="left:1353px;top:795px" width="12" height="13" viewBox="0 0 12 13"><path d="M0 2.500H12M4 2.500V0.600H8V2.500M1.500 2.500L2.300 13.400H9.700L10.500 2.500M4.500 5V11M6 5V11M7.500 5V11" fill="none" stroke="#e2e2e2" stroke-width="1.100"/></svg>
<div class="redbox" style="left:1108px;top:586px;width:277px;height:39px"></div>
<div class="menu" style="left:146px;top:23px;width:248px;height:446px">
<div class="mi" style="top:5px"><span class="l" style="left:21px">模式(M)</span><i class="arr" style="right:8px;top:3px"></i></div>
<div class="a" style="left:1px;top:31px;width:240px;height:19px;background:#3391f4"></div>
<div class="mi h" style="top:33.5px"><span class="l" style="left:21px">调整(J)</span><i class="arr" style="right:8px;top:4px;border-left-color:#fff"></i></div>
<div class="sep" style="left:4px;top:56px;width:236px"></div>
<div class="mi" style="top:63px"><span class="l" style="left:21px">自动色调(N)</span><span class="r" style="right:17px">Shift+Ctrl+L</span></div>
<div class="mi" style="top:84.5px"><span class="l" style="left:21px">自动对比度(U)</span><span class="r" style="right:17px">Alt+Shift+Ctrl+L</span></div>
<div class="mi d" style="top:106px"><span class="l" style="left:21px">自动颜色(O)</span><span class="r" style="right:17px">Shift+Ctrl+B</span></div>
<div class="sep" style="left:4px;top:128px;width:236px"></div>
<div class="mi" style="top:135px"><span class="l" style="left:21px">图像大小(I)...</span><span class="r" style="right:17px">Alt+Ctrl+I</span></div>
<div class="mi" style="top:156px"><span class="l" style="left:21px">画布大小(S)...</span><span class="r" style="right:17px">Alt+Ctrl+C</span></div>
<div class="mi" style="top:177.5px"><span class="l" style="left:21px">图像旋转(G)</span><i class="arr" style="right:8px;top:3px"></i></div>
<div class="mi d" style="top:198.5px"><span class="l" style="left:21px">裁剪(P)</span></div>
<div class="mi" style="top:219.5px"><span class="l" style="left:21px">裁切(R)...</span></div>
<div class="mi" style="top:240.5px"><span class="l" style="left:21px">显示全部(V)</span></div>
<div class="sep" style="left:4px;top:263px;width:236px"></div>
<div class="mi" style="top:270.5px"><span class="l" style="left:21px">复制(D)...</span></div>
<div class="mi" style="top:291.5px"><span class="l" style="left:21px">应用图像(Y)...</span></div>
<div class="mi" style="top:312.5px"><span class="l" style="left:21px">计算(C)...</span></div>
<div class="sep" style="left:4px;top:335px;width:236px"></div>
<div class="mi" style="top:343px"><span class="l" style="left:21px">变量(B)</span><i class="arr" style="right:8px;top:3px"></i></div>
<div class="mi d" style="top:364px"><span class="l" style="left:21px">应用数据组(L)...</span></div>
<div class="sep" style="left:4px;top:386px;width:236px"></div>
<div class="mi d" style="top:393.5px"><span class="l" style="left:21px">陷印(T)...</span></div>
<div class="sep" style="left:4px;top:416px;width:236px"></div>
<div class="mi" style="top:424.5px"><span class="l" style="left:21px">分析(A)</span><i class="arr" style="right:8px;top:3px"></i></div>
</div>
<div class="menu" style="left:389px;top:53px;width:222px;height:503px;overflow:hidden">
<div class="mi" style="top:2.5px"><span class="l" style="left:21px">亮度/对比度(C)...</span></div>
<div class="a" style="left:1px;top:22px;width:218px;height:21px;background:#3391f4"></div>
<div class="mi h" style="top:24.5px"><span class="l" style="left:21px">色阶(L)...</span><span class="r" style="right:17px">Ctrl+L</span></div>
<div class="mi" style="top:46px"><span class="l" style="left:21px">曲线(U)...</span><span class="r" style="right:17px">Ctrl+M</span></div>
<div class="mi d" style="top:67px"><span class="l" style="left:21px">曝光度(E)...</span></div>
<div class="sep" style="left:5px;top:89px;width:210px"></div>
<div class="mi d" style="top:96px"><span class="l" style="left:21px">自然饱和度(V)...</span></div>
<div class="mi d" style="top:117px"><span class="l" style="left:21px">色相/饱和度(H)...</span><span class="r" style="right:17px">Ctrl+U</span></div>
<div class="mi d" style="top:138px"><span class="l" style="left:21px">色彩平衡(B)...</span><span class="r" style="right:17px">Ctrl+B</span></div>
<div class="mi d" style="top:159px"><span class="l" style="left:21px">黑白(K)...</span><span class="r" style="right:17px">Alt+Shift+Ctrl+B</span></div>
<div class="mi d" style="top:180px"><span class="l" style="left:21px">照片滤镜(F)...</span></div>
<div class="mi d" style="top:201px"><span class="l" style="left:21px">通道混合器(X)...</span></div>
<div class="mi d" style="top:222px"><span class="l" style="left:21px">颜色查找...</span></div>
<div class="sep" style="left:5px;top:245px;width:210px"></div>
<div class="mi" style="top:252px"><span class="l" style="left:21px">反相(I)</span><span class="r" style="right:17px">Ctrl+I</span></div>
<div class="mi" style="top:273px"><span class="l" style="left:21px">色调分离(P)...</span></div>
<div class="mi" style="top:294px"><span class="l" style="left:21px">阈值(T)...</span></div>
<div class="mi d" style="top:315px"><span class="l" style="left:21px">渐变映射(G)...</span></div>
<div class="mi d" style="top:336px"><span class="l" style="left:21px">可选颜色(S)...</span></div>
<div class="sep" style="left:5px;top:359px;width:210px"></div>
<div class="mi" style="top:366px"><span class="l" style="left:21px">阴影/高光(W)...</span></div>
<div class="mi" style="top:387px"><span class="l" style="left:21px">HDR 色调...</span></div>
<div class="sep" style="left:5px;top:410px;width:210px"></div>
<div class="mi d" style="top:417px"><span class="l" style="left:21px">去色(D)</span><span class="r" style="right:17px">Shift+Ctrl+U</span></div>
<div class="mi d" style="top:438px"><span class="l" style="left:21px">匹配颜色(M)...</span></div>
<div class="mi" style="top:459px"><span class="l" style="left:21px">替换颜色(R)...</span></div>
<div class="mi" style="top:480px"><span class="l" style="left:21px">色调均化(Q)</span></div>
</div>
<div class="redbox" style="left:143px;top:2px;width:60px;height:26px"></div>
<div class="redbox" style="left:147px;top:51px;width:247px;height:26px;border-width:4px 4px 3px 4px"></div>
<div class="redbox" style="left:385px;top:72px;width:228px;height:34px;border-width:4px 3px 4px 3px;background:linear-gradient(#e5e5e5,#e5e5e5) no-repeat 0 100%/100% 5px"></div>
<div class="a" style="left:924px;top:753px;height:44px;line-height:44px;font-size:35.5px;color:#fff;white-space:nowrap;text-shadow:1.500px 1.500px 1px #000,1px 2px 2px #000;letter-spacing:0.4px;word-spacing:-5px"><b style="font-family:'Liberation Sans','Noto Sans CJK SC',sans-serif;font-weight:900">头条</b> @会<span style="letter-spacing:2px">PS</span>修图的美仙姐姐</div>
</body></html>
